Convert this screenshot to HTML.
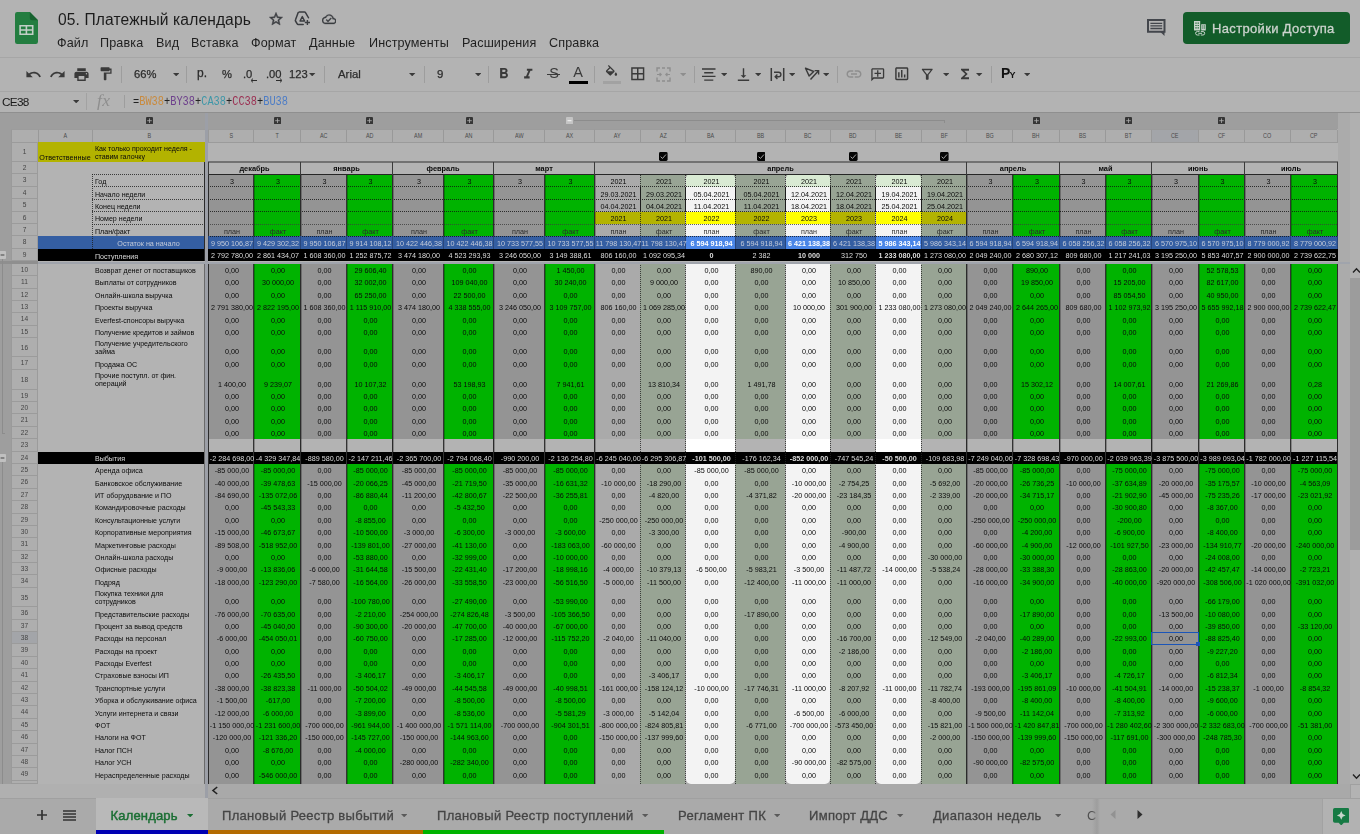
<!DOCTYPE html><html lang="ru"><head><meta charset="utf-8"><title>05. Платежный календарь</title><style>
html,body{margin:0;padding:0}
body{width:1360px;height:834px;overflow:hidden;background:#b3b3b3;font-family:"Liberation Sans",sans-serif;position:relative}
#grid div,.abs{position:absolute}
body{filter:blur(0.3px)}
.ch{font-size:6.8px;color:#4a4a4a;text-align:center;line-height:11.6px}
.ch span{display:inline-block;transform:scaleX(.8)}
.rh{font-size:6.6px;color:#444;text-align:center}
.c{font-size:7.2px;color:#0a0a0a;white-space:nowrap;display:flex;align-items:flex-end;justify-content:center;line-height:12.4px;overflow:visible}
.c span{display:block;position:relative;top:1.3px}
.c.h span{top:1.8px}
.c.m.h span{top:0.9px}
.c.l{justify-content:flex-start;font-size:7.08px}
.c.w{color:#dcdcdc}
.c.b{font-weight:bold}
.c.m{font-weight:bold;font-size:7.4px}
.t{white-space:nowrap}
.lb{font-size:7.08px;color:#0a0a0a;white-space:nowrap}
</style></head><body><div id="grid">
<div style="left:0.00px;top:112.50px;width:1338.00px;height:17.00px;background:#9e9e9e;"></div>
<div style="left:0.00px;top:129.50px;width:11.00px;height:654.10px;background:#9e9e9e;"></div>
<div style="left:11.00px;top:129.00px;width:1327.00px;height:13.40px;background:#aeaeae;"></div>
<div style="left:11.00px;top:142.40px;width:27.00px;height:641.20px;background:#aeaeae;"></div>
<div style="left:1338.00px;top:112.50px;width:11.60px;height:671.10px;background:#ababab;"></div>
<div style="left:1349.60px;top:112.50px;width:10.40px;height:685.50px;background:#b0b0b0;"></div>
<div style="left:1349.60px;top:278.40px;width:10.40px;height:271.60px;background:#9c9c9c;"></div>
<div class="ch" style="left:11.00px;top:129.00px;width:27.00px;height:13.40px;border-left:1px solid #999;border-top:1px solid #9c9c9c;box-sizing:border-box;"><span></span></div>
<div class="ch" style="left:38.00px;top:129.00px;width:54.00px;height:13.40px;border-left:1px solid #999;border-top:1px solid #9c9c9c;box-sizing:border-box;"><span>A</span></div>
<div class="ch" style="left:92.00px;top:129.00px;width:113.00px;height:13.40px;border-left:1px solid #999;border-top:1px solid #9c9c9c;box-sizing:border-box;"><span>B</span></div>
<div class="ch" style="left:208.00px;top:129.00px;width:45.00px;height:13.40px;border-left:1px solid #999;border-top:1px solid #9c9c9c;box-sizing:border-box;"><span>S</span></div>
<div class="ch" style="left:253.00px;top:129.00px;width:47.00px;height:13.40px;border-left:1px solid #999;border-top:1px solid #9c9c9c;box-sizing:border-box;"><span>T</span></div>
<div class="ch" style="left:300.00px;top:129.00px;width:46.00px;height:13.40px;border-left:1px solid #999;border-top:1px solid #9c9c9c;box-sizing:border-box;"><span>AC</span></div>
<div class="ch" style="left:346.00px;top:129.00px;width:46.00px;height:13.40px;border-left:1px solid #999;border-top:1px solid #9c9c9c;box-sizing:border-box;"><span>AD</span></div>
<div class="ch" style="left:392.00px;top:129.00px;width:51.00px;height:13.40px;border-left:1px solid #999;border-top:1px solid #9c9c9c;box-sizing:border-box;"><span>AM</span></div>
<div class="ch" style="left:443.00px;top:129.00px;width:50.00px;height:13.40px;border-left:1px solid #999;border-top:1px solid #9c9c9c;box-sizing:border-box;"><span>AN</span></div>
<div class="ch" style="left:493.00px;top:129.00px;width:51.00px;height:13.40px;border-left:1px solid #999;border-top:1px solid #9c9c9c;box-sizing:border-box;"><span>AW</span></div>
<div class="ch" style="left:544.00px;top:129.00px;width:50.00px;height:13.40px;border-left:1px solid #999;border-top:1px solid #9c9c9c;box-sizing:border-box;"><span>AX</span></div>
<div class="ch" style="left:594.00px;top:129.00px;width:46.00px;height:13.40px;border-left:1px solid #999;border-top:1px solid #9c9c9c;box-sizing:border-box;"><span>AY</span></div>
<div class="ch" style="left:640.00px;top:129.00px;width:45.00px;height:13.40px;border-left:1px solid #999;border-top:1px solid #9c9c9c;box-sizing:border-box;"><span>AZ</span></div>
<div class="ch" style="left:685.00px;top:129.00px;width:50.00px;height:13.40px;border-left:1px solid #999;border-top:1px solid #9c9c9c;box-sizing:border-box;"><span>BA</span></div>
<div class="ch" style="left:735.00px;top:129.00px;width:50.00px;height:13.40px;border-left:1px solid #999;border-top:1px solid #9c9c9c;box-sizing:border-box;"><span>BB</span></div>
<div class="ch" style="left:785.00px;top:129.00px;width:45.00px;height:13.40px;border-left:1px solid #999;border-top:1px solid #9c9c9c;box-sizing:border-box;"><span>BC</span></div>
<div class="ch" style="left:830.00px;top:129.00px;width:45.00px;height:13.40px;border-left:1px solid #999;border-top:1px solid #9c9c9c;box-sizing:border-box;"><span>BD</span></div>
<div class="ch" style="left:875.00px;top:129.00px;width:46.00px;height:13.40px;border-left:1px solid #999;border-top:1px solid #9c9c9c;box-sizing:border-box;"><span>BE</span></div>
<div class="ch" style="left:921.00px;top:129.00px;width:45.00px;height:13.40px;border-left:1px solid #999;border-top:1px solid #9c9c9c;box-sizing:border-box;"><span>BF</span></div>
<div class="ch" style="left:966.00px;top:129.00px;width:46.00px;height:13.40px;border-left:1px solid #999;border-top:1px solid #9c9c9c;box-sizing:border-box;"><span>BG</span></div>
<div class="ch" style="left:1012.00px;top:129.00px;width:47.00px;height:13.40px;border-left:1px solid #999;border-top:1px solid #9c9c9c;box-sizing:border-box;"><span>BH</span></div>
<div class="ch" style="left:1059.00px;top:129.00px;width:46.00px;height:13.40px;border-left:1px solid #999;border-top:1px solid #9c9c9c;box-sizing:border-box;"><span>BS</span></div>
<div class="ch" style="left:1105.00px;top:129.00px;width:46.00px;height:13.40px;border-left:1px solid #999;border-top:1px solid #9c9c9c;box-sizing:border-box;"><span>BT</span></div>
<div class="ch" style="left:1151.00px;top:129.00px;width:47.00px;height:13.40px;background:#a3a5a9;border-left:1px solid #999;border-top:1px solid #9c9c9c;box-sizing:border-box;"><span>CE</span></div>
<div class="ch" style="left:1198.00px;top:129.00px;width:46.00px;height:13.40px;border-left:1px solid #999;border-top:1px solid #9c9c9c;box-sizing:border-box;"><span>CF</span></div>
<div class="ch" style="left:1244.00px;top:129.00px;width:46.00px;height:13.40px;border-left:1px solid #999;border-top:1px solid #9c9c9c;box-sizing:border-box;"><span>CO</span></div>
<div class="ch" style="left:1290.00px;top:129.00px;width:47.00px;height:13.40px;border-left:1px solid #999;border-top:1px solid #9c9c9c;box-sizing:border-box;"><span>CP</span></div>
<div style="left:11.00px;top:141.60px;width:1327.00px;height:0.80px;background:#9b9b9b;"></div>
<div style="left:1337.00px;top:129.50px;width:1.00px;height:12.90px;background:#9b9b9b;"></div>
<div class="rh" style="left:11.00px;top:142.40px;width:27.00px;height:19.80px;line-height:19.90px;border-bottom:1px solid #9b9b9b;box-sizing:border-box;">1</div>
<div class="rh" style="left:11.00px;top:162.20px;width:27.00px;height:12.20px;line-height:12.30px;border-bottom:1px solid #9b9b9b;box-sizing:border-box;">2</div>
<div class="rh" style="left:11.00px;top:174.40px;width:27.00px;height:12.40px;line-height:12.50px;border-bottom:1px solid #9b9b9b;box-sizing:border-box;">3</div>
<div class="rh" style="left:11.00px;top:186.80px;width:27.00px;height:12.50px;line-height:12.60px;border-bottom:1px solid #9b9b9b;box-sizing:border-box;">4</div>
<div class="rh" style="left:11.00px;top:199.30px;width:27.00px;height:12.40px;line-height:12.50px;border-bottom:1px solid #9b9b9b;box-sizing:border-box;">5</div>
<div class="rh" style="left:11.00px;top:211.70px;width:27.00px;height:12.35px;line-height:12.45px;border-bottom:1px solid #9b9b9b;box-sizing:border-box;">6</div>
<div class="rh" style="left:11.00px;top:224.05px;width:27.00px;height:12.30px;line-height:12.40px;border-bottom:1px solid #9b9b9b;box-sizing:border-box;">7</div>
<div class="rh" style="left:11.00px;top:236.35px;width:27.00px;height:12.50px;line-height:12.60px;border-bottom:1px solid #9b9b9b;box-sizing:border-box;">8</div>
<div class="rh" style="left:11.00px;top:248.85px;width:27.00px;height:12.40px;line-height:12.50px;border-bottom:1px solid #9b9b9b;box-sizing:border-box;">9</div>
<div class="rh" style="left:11.00px;top:263.80px;width:27.00px;height:12.39px;line-height:12.49px;border-bottom:1px solid #9b9b9b;box-sizing:border-box;">10</div>
<div class="rh" style="left:11.00px;top:276.19px;width:27.00px;height:12.39px;line-height:12.49px;border-bottom:1px solid #9b9b9b;box-sizing:border-box;">11</div>
<div class="rh" style="left:11.00px;top:288.58px;width:27.00px;height:12.39px;line-height:12.49px;border-bottom:1px solid #9b9b9b;box-sizing:border-box;">12</div>
<div class="rh" style="left:11.00px;top:300.97px;width:27.00px;height:12.39px;line-height:12.49px;border-bottom:1px solid #9b9b9b;box-sizing:border-box;">13</div>
<div class="rh" style="left:11.00px;top:313.36px;width:27.00px;height:12.39px;line-height:12.49px;border-bottom:1px solid #9b9b9b;box-sizing:border-box;">14</div>
<div class="rh" style="left:11.00px;top:325.75px;width:27.00px;height:12.39px;line-height:12.49px;border-bottom:1px solid #9b9b9b;box-sizing:border-box;">15</div>
<div class="rh" style="left:11.00px;top:338.14px;width:27.00px;height:19.25px;line-height:19.35px;border-bottom:1px solid #9b9b9b;box-sizing:border-box;">16</div>
<div class="rh" style="left:11.00px;top:357.39px;width:27.00px;height:12.39px;line-height:12.49px;border-bottom:1px solid #9b9b9b;box-sizing:border-box;">17</div>
<div class="rh" style="left:11.00px;top:369.78px;width:27.00px;height:19.85px;line-height:19.95px;border-bottom:1px solid #9b9b9b;box-sizing:border-box;">18</div>
<div class="rh" style="left:11.00px;top:389.63px;width:27.00px;height:12.39px;line-height:12.49px;border-bottom:1px solid #9b9b9b;box-sizing:border-box;">19</div>
<div class="rh" style="left:11.00px;top:402.02px;width:27.00px;height:12.39px;line-height:12.49px;border-bottom:1px solid #9b9b9b;box-sizing:border-box;">20</div>
<div class="rh" style="left:11.00px;top:414.41px;width:27.00px;height:12.39px;line-height:12.49px;border-bottom:1px solid #9b9b9b;box-sizing:border-box;">21</div>
<div class="rh" style="left:11.00px;top:426.80px;width:27.00px;height:12.39px;line-height:12.49px;border-bottom:1px solid #9b9b9b;box-sizing:border-box;">22</div>
<div class="rh" style="left:11.00px;top:439.19px;width:27.00px;height:12.39px;line-height:12.49px;border-bottom:1px solid #9b9b9b;box-sizing:border-box;">23</div>
<div class="rh" style="left:11.00px;top:451.58px;width:27.00px;height:12.39px;line-height:12.49px;border-bottom:1px solid #9b9b9b;box-sizing:border-box;">24</div>
<div class="rh" style="left:11.00px;top:463.97px;width:27.00px;height:12.39px;line-height:12.49px;border-bottom:1px solid #9b9b9b;box-sizing:border-box;">25</div>
<div class="rh" style="left:11.00px;top:476.36px;width:27.00px;height:12.39px;line-height:12.49px;border-bottom:1px solid #9b9b9b;box-sizing:border-box;">26</div>
<div class="rh" style="left:11.00px;top:488.75px;width:27.00px;height:12.39px;line-height:12.49px;border-bottom:1px solid #9b9b9b;box-sizing:border-box;">27</div>
<div class="rh" style="left:11.00px;top:501.14px;width:27.00px;height:12.39px;line-height:12.49px;border-bottom:1px solid #9b9b9b;box-sizing:border-box;">28</div>
<div class="rh" style="left:11.00px;top:513.53px;width:27.00px;height:12.39px;line-height:12.49px;border-bottom:1px solid #9b9b9b;box-sizing:border-box;">29</div>
<div class="rh" style="left:11.00px;top:525.92px;width:27.00px;height:12.39px;line-height:12.49px;border-bottom:1px solid #9b9b9b;box-sizing:border-box;">30</div>
<div class="rh" style="left:11.00px;top:538.31px;width:27.00px;height:12.39px;line-height:12.49px;border-bottom:1px solid #9b9b9b;box-sizing:border-box;">31</div>
<div class="rh" style="left:11.00px;top:550.70px;width:27.00px;height:12.39px;line-height:12.49px;border-bottom:1px solid #9b9b9b;box-sizing:border-box;">32</div>
<div class="rh" style="left:11.00px;top:563.09px;width:27.00px;height:12.39px;line-height:12.49px;border-bottom:1px solid #9b9b9b;box-sizing:border-box;">33</div>
<div class="rh" style="left:11.00px;top:575.48px;width:27.00px;height:12.39px;line-height:12.49px;border-bottom:1px solid #9b9b9b;box-sizing:border-box;">34</div>
<div class="rh" style="left:11.00px;top:587.87px;width:27.00px;height:19.40px;line-height:19.50px;border-bottom:1px solid #9b9b9b;box-sizing:border-box;">35</div>
<div class="rh" style="left:11.00px;top:607.27px;width:27.00px;height:12.39px;line-height:12.49px;border-bottom:1px solid #9b9b9b;box-sizing:border-box;">36</div>
<div class="rh" style="left:11.00px;top:619.66px;width:27.00px;height:12.39px;line-height:12.49px;border-bottom:1px solid #9b9b9b;box-sizing:border-box;">37</div>
<div class="rh" style="left:11.00px;top:632.05px;width:27.00px;height:12.39px;background:#a3a5a9;line-height:12.49px;border-bottom:1px solid #9b9b9b;box-sizing:border-box;">38</div>
<div class="rh" style="left:11.00px;top:644.44px;width:27.00px;height:12.39px;line-height:12.49px;border-bottom:1px solid #9b9b9b;box-sizing:border-box;">39</div>
<div class="rh" style="left:11.00px;top:656.83px;width:27.00px;height:12.39px;line-height:12.49px;border-bottom:1px solid #9b9b9b;box-sizing:border-box;">40</div>
<div class="rh" style="left:11.00px;top:669.22px;width:27.00px;height:12.39px;line-height:12.49px;border-bottom:1px solid #9b9b9b;box-sizing:border-box;">41</div>
<div class="rh" style="left:11.00px;top:681.61px;width:27.00px;height:12.39px;line-height:12.49px;border-bottom:1px solid #9b9b9b;box-sizing:border-box;">42</div>
<div class="rh" style="left:11.00px;top:694.00px;width:27.00px;height:12.39px;line-height:12.49px;border-bottom:1px solid #9b9b9b;box-sizing:border-box;">43</div>
<div class="rh" style="left:11.00px;top:706.39px;width:27.00px;height:12.39px;line-height:12.49px;border-bottom:1px solid #9b9b9b;box-sizing:border-box;">44</div>
<div class="rh" style="left:11.00px;top:718.78px;width:27.00px;height:12.39px;line-height:12.49px;border-bottom:1px solid #9b9b9b;box-sizing:border-box;">45</div>
<div class="rh" style="left:11.00px;top:731.17px;width:27.00px;height:12.39px;line-height:12.49px;border-bottom:1px solid #9b9b9b;box-sizing:border-box;">46</div>
<div class="rh" style="left:11.00px;top:743.56px;width:27.00px;height:12.39px;line-height:12.49px;border-bottom:1px solid #9b9b9b;box-sizing:border-box;">47</div>
<div class="rh" style="left:11.00px;top:755.95px;width:27.00px;height:12.39px;line-height:12.49px;border-bottom:1px solid #9b9b9b;box-sizing:border-box;">48</div>
<div class="rh" style="left:11.00px;top:768.34px;width:27.00px;height:12.39px;line-height:12.49px;border-bottom:1px solid #9b9b9b;box-sizing:border-box;">49</div>
<div class="rh" style="left:11.00px;top:780.73px;width:27.00px;height:2.87px;line-height:2.97px;border-bottom:1px solid #9b9b9b;box-sizing:border-box;"></div>
<div style="left:37.20px;top:142.40px;width:0.80px;height:641.20px;background:#9b9b9b;"></div>
<div style="left:11.00px;top:142.40px;width:1.00px;height:641.20px;background:#9a9a9a;"></div>
<div style="left:38.00px;top:142.40px;width:167.00px;height:19.80px;background:#b3b300;"></div>
<div style="left:38.00px;top:236.35px;width:167.00px;height:12.50px;background:#345ea2;"></div>
<div style="left:38.00px;top:248.85px;width:167.00px;height:12.40px;background:#000;"></div>
<div style="left:38.00px;top:451.58px;width:167.00px;height:12.39px;background:#000;"></div>
<div style="left:208.00px;top:174.40px;width:45.00px;height:61.95px;background:#949494;"></div>
<div style="left:208.00px;top:263.80px;width:45.00px;height:175.39px;background:#949494;"></div>
<div style="left:208.00px;top:463.97px;width:45.00px;height:319.63px;background:#949494;"></div>
<div style="left:208.00px;top:236.35px;width:45.00px;height:12.50px;background:#345ea2;"></div>
<div style="left:253.00px;top:174.40px;width:47.00px;height:61.95px;background:#00b300;"></div>
<div style="left:253.00px;top:263.80px;width:47.00px;height:175.39px;background:#00b300;"></div>
<div style="left:253.00px;top:463.97px;width:47.00px;height:319.63px;background:#00b300;"></div>
<div style="left:253.00px;top:236.35px;width:47.00px;height:12.50px;background:#345ea2;"></div>
<div style="left:300.00px;top:174.40px;width:46.00px;height:61.95px;background:#949494;"></div>
<div style="left:300.00px;top:263.80px;width:46.00px;height:175.39px;background:#949494;"></div>
<div style="left:300.00px;top:463.97px;width:46.00px;height:319.63px;background:#949494;"></div>
<div style="left:300.00px;top:236.35px;width:46.00px;height:12.50px;background:#345ea2;"></div>
<div style="left:346.00px;top:174.40px;width:46.00px;height:61.95px;background:#00b300;"></div>
<div style="left:346.00px;top:263.80px;width:46.00px;height:175.39px;background:#00b300;"></div>
<div style="left:346.00px;top:463.97px;width:46.00px;height:319.63px;background:#00b300;"></div>
<div style="left:346.00px;top:236.35px;width:46.00px;height:12.50px;background:#345ea2;"></div>
<div style="left:392.00px;top:174.40px;width:51.00px;height:61.95px;background:#949494;"></div>
<div style="left:392.00px;top:263.80px;width:51.00px;height:175.39px;background:#949494;"></div>
<div style="left:392.00px;top:463.97px;width:51.00px;height:319.63px;background:#949494;"></div>
<div style="left:392.00px;top:236.35px;width:51.00px;height:12.50px;background:#345ea2;"></div>
<div style="left:443.00px;top:174.40px;width:50.00px;height:61.95px;background:#00b300;"></div>
<div style="left:443.00px;top:263.80px;width:50.00px;height:175.39px;background:#00b300;"></div>
<div style="left:443.00px;top:463.97px;width:50.00px;height:319.63px;background:#00b300;"></div>
<div style="left:443.00px;top:236.35px;width:50.00px;height:12.50px;background:#345ea2;"></div>
<div style="left:493.00px;top:174.40px;width:51.00px;height:61.95px;background:#949494;"></div>
<div style="left:493.00px;top:263.80px;width:51.00px;height:175.39px;background:#949494;"></div>
<div style="left:493.00px;top:463.97px;width:51.00px;height:319.63px;background:#949494;"></div>
<div style="left:493.00px;top:236.35px;width:51.00px;height:12.50px;background:#345ea2;"></div>
<div style="left:544.00px;top:174.40px;width:50.00px;height:61.95px;background:#00b300;"></div>
<div style="left:544.00px;top:263.80px;width:50.00px;height:175.39px;background:#00b300;"></div>
<div style="left:544.00px;top:463.97px;width:50.00px;height:319.63px;background:#00b300;"></div>
<div style="left:544.00px;top:236.35px;width:50.00px;height:12.50px;background:#345ea2;"></div>
<div style="left:594.00px;top:174.40px;width:46.00px;height:61.95px;background:#aaaaaa;"></div>
<div style="left:594.00px;top:263.80px;width:46.00px;height:175.39px;background:#aaaaaa;"></div>
<div style="left:594.00px;top:463.97px;width:46.00px;height:319.63px;background:#aaaaaa;"></div>
<div style="left:594.00px;top:211.70px;width:46.00px;height:12.35px;background:#b3b300;"></div>
<div style="left:594.00px;top:236.35px;width:46.00px;height:12.50px;background:#345ea2;"></div>
<div style="left:640.00px;top:174.40px;width:45.00px;height:61.95px;background:#98a494;"></div>
<div style="left:640.00px;top:263.80px;width:45.00px;height:175.39px;background:#98a494;"></div>
<div style="left:640.00px;top:463.97px;width:45.00px;height:319.63px;background:#98a494;"></div>
<div style="left:640.00px;top:211.70px;width:45.00px;height:12.35px;background:#b3b300;"></div>
<div style="left:640.00px;top:236.35px;width:45.00px;height:12.50px;background:#345ea2;"></div>
<div style="left:686.00px;top:174.40px;width:49.00px;height:8.00px;background:#98a494;"></div>
<div style="left:686.00px;top:775.60px;width:49.00px;height:8.00px;background:#aaaaaa;"></div>
<div style="left:686.00px;top:174.40px;width:49.00px;height:61.95px;background:#f3f3f3;border-radius:5px 5px 0 0;"></div>
<div style="left:686.00px;top:263.80px;width:49.00px;height:175.39px;background:#f3f3f3;"></div>
<div style="left:686.00px;top:463.97px;width:49.00px;height:319.63px;background:#f3f3f3;border-radius:0 0 5px 5px;"></div>
<div style="left:686.00px;top:174.40px;width:49.00px;height:12.40px;background:#d9ead3;border-radius:5px 5px 0 0;"></div>
<div style="left:686.00px;top:439.19px;width:49.00px;height:12.39px;background:#fff;"></div>
<div style="left:686.00px;top:211.70px;width:49.00px;height:12.35px;background:#ffff00;"></div>
<div style="left:686.00px;top:236.35px;width:49.00px;height:12.50px;background:#4a86e8;"></div>
<div style="left:735.00px;top:174.40px;width:50.00px;height:61.95px;background:#98a494;"></div>
<div style="left:735.00px;top:263.80px;width:50.00px;height:175.39px;background:#98a494;"></div>
<div style="left:735.00px;top:463.97px;width:50.00px;height:319.63px;background:#98a494;"></div>
<div style="left:735.00px;top:211.70px;width:50.00px;height:12.35px;background:#b3b300;"></div>
<div style="left:735.00px;top:236.35px;width:50.00px;height:12.50px;background:#345ea2;"></div>
<div style="left:786.00px;top:174.40px;width:44.00px;height:8.00px;background:#98a494;"></div>
<div style="left:786.00px;top:775.60px;width:44.00px;height:8.00px;background:#aaaaaa;"></div>
<div style="left:786.00px;top:174.40px;width:44.00px;height:61.95px;background:#f3f3f3;border-radius:5px 5px 0 0;"></div>
<div style="left:786.00px;top:263.80px;width:44.00px;height:175.39px;background:#f3f3f3;"></div>
<div style="left:786.00px;top:463.97px;width:44.00px;height:319.63px;background:#f3f3f3;border-radius:0 0 5px 5px;"></div>
<div style="left:786.00px;top:174.40px;width:44.00px;height:12.40px;background:#d9ead3;border-radius:5px 5px 0 0;"></div>
<div style="left:786.00px;top:439.19px;width:44.00px;height:12.39px;background:#fff;"></div>
<div style="left:786.00px;top:211.70px;width:44.00px;height:12.35px;background:#ffff00;"></div>
<div style="left:786.00px;top:236.35px;width:44.00px;height:12.50px;background:#4a86e8;"></div>
<div style="left:830.00px;top:174.40px;width:45.00px;height:61.95px;background:#98a494;"></div>
<div style="left:830.00px;top:263.80px;width:45.00px;height:175.39px;background:#98a494;"></div>
<div style="left:830.00px;top:463.97px;width:45.00px;height:319.63px;background:#98a494;"></div>
<div style="left:830.00px;top:211.70px;width:45.00px;height:12.35px;background:#b3b300;"></div>
<div style="left:830.00px;top:236.35px;width:45.00px;height:12.50px;background:#345ea2;"></div>
<div style="left:876.00px;top:174.40px;width:45.00px;height:8.00px;background:#98a494;"></div>
<div style="left:876.00px;top:775.60px;width:45.00px;height:8.00px;background:#aaaaaa;"></div>
<div style="left:876.00px;top:174.40px;width:45.00px;height:61.95px;background:#f3f3f3;border-radius:5px 5px 0 0;"></div>
<div style="left:876.00px;top:263.80px;width:45.00px;height:175.39px;background:#f3f3f3;"></div>
<div style="left:876.00px;top:463.97px;width:45.00px;height:319.63px;background:#f3f3f3;border-radius:0 0 5px 5px;"></div>
<div style="left:876.00px;top:174.40px;width:45.00px;height:12.40px;background:#d9ead3;border-radius:5px 5px 0 0;"></div>
<div style="left:876.00px;top:439.19px;width:45.00px;height:12.39px;background:#fff;"></div>
<div style="left:876.00px;top:211.70px;width:45.00px;height:12.35px;background:#ffff00;"></div>
<div style="left:876.00px;top:236.35px;width:45.00px;height:12.50px;background:#4a86e8;"></div>
<div style="left:921.00px;top:174.40px;width:45.00px;height:61.95px;background:#98a494;"></div>
<div style="left:921.00px;top:263.80px;width:45.00px;height:175.39px;background:#98a494;"></div>
<div style="left:921.00px;top:463.97px;width:45.00px;height:319.63px;background:#98a494;"></div>
<div style="left:921.00px;top:211.70px;width:45.00px;height:12.35px;background:#b3b300;"></div>
<div style="left:921.00px;top:236.35px;width:45.00px;height:12.50px;background:#345ea2;"></div>
<div style="left:966.00px;top:174.40px;width:46.00px;height:61.95px;background:#949494;"></div>
<div style="left:966.00px;top:263.80px;width:46.00px;height:175.39px;background:#949494;"></div>
<div style="left:966.00px;top:463.97px;width:46.00px;height:319.63px;background:#949494;"></div>
<div style="left:966.00px;top:236.35px;width:46.00px;height:12.50px;background:#345ea2;"></div>
<div style="left:1012.00px;top:174.40px;width:47.00px;height:61.95px;background:#00b300;"></div>
<div style="left:1012.00px;top:263.80px;width:47.00px;height:175.39px;background:#00b300;"></div>
<div style="left:1012.00px;top:463.97px;width:47.00px;height:319.63px;background:#00b300;"></div>
<div style="left:1012.00px;top:236.35px;width:47.00px;height:12.50px;background:#345ea2;"></div>
<div style="left:1059.00px;top:174.40px;width:46.00px;height:61.95px;background:#949494;"></div>
<div style="left:1059.00px;top:263.80px;width:46.00px;height:175.39px;background:#949494;"></div>
<div style="left:1059.00px;top:463.97px;width:46.00px;height:319.63px;background:#949494;"></div>
<div style="left:1059.00px;top:236.35px;width:46.00px;height:12.50px;background:#345ea2;"></div>
<div style="left:1105.00px;top:174.40px;width:46.00px;height:61.95px;background:#00b300;"></div>
<div style="left:1105.00px;top:263.80px;width:46.00px;height:175.39px;background:#00b300;"></div>
<div style="left:1105.00px;top:463.97px;width:46.00px;height:319.63px;background:#00b300;"></div>
<div style="left:1105.00px;top:236.35px;width:46.00px;height:12.50px;background:#345ea2;"></div>
<div style="left:1151.00px;top:174.40px;width:47.00px;height:61.95px;background:#949494;"></div>
<div style="left:1151.00px;top:263.80px;width:47.00px;height:175.39px;background:#949494;"></div>
<div style="left:1151.00px;top:463.97px;width:47.00px;height:319.63px;background:#949494;"></div>
<div style="left:1151.00px;top:236.35px;width:47.00px;height:12.50px;background:#345ea2;"></div>
<div style="left:1198.00px;top:174.40px;width:46.00px;height:61.95px;background:#00b300;"></div>
<div style="left:1198.00px;top:263.80px;width:46.00px;height:175.39px;background:#00b300;"></div>
<div style="left:1198.00px;top:463.97px;width:46.00px;height:319.63px;background:#00b300;"></div>
<div style="left:1198.00px;top:236.35px;width:46.00px;height:12.50px;background:#345ea2;"></div>
<div style="left:1244.00px;top:174.40px;width:46.00px;height:61.95px;background:#949494;"></div>
<div style="left:1244.00px;top:263.80px;width:46.00px;height:175.39px;background:#949494;"></div>
<div style="left:1244.00px;top:463.97px;width:46.00px;height:319.63px;background:#949494;"></div>
<div style="left:1244.00px;top:236.35px;width:46.00px;height:12.50px;background:#345ea2;"></div>
<div style="left:1290.00px;top:174.40px;width:47.00px;height:61.95px;background:#00b300;"></div>
<div style="left:1290.00px;top:263.80px;width:47.00px;height:175.39px;background:#00b300;"></div>
<div style="left:1290.00px;top:463.97px;width:47.00px;height:319.63px;background:#00b300;"></div>
<div style="left:1290.00px;top:236.35px;width:47.00px;height:12.50px;background:#345ea2;"></div>
<div style="left:208.00px;top:248.85px;width:1130.00px;height:12.40px;background:#000;"></div>
<div style="left:208.00px;top:451.58px;width:1130.00px;height:12.39px;background:#000;"></div>
<div style="left:208.00px;top:161px;width:1130.00px;height:2px;background:#727272"></div>
<div style="left:208.00px;top:174px;width:1130.00px;height:1px;background:#262626"></div>
<div style="left:208px;top:162.00px;width:1px;height:13.00px;background:#3a3a3a"></div>
<div style="left:300px;top:162.00px;width:1px;height:13.00px;background:#3a3a3a"></div>
<div style="left:392px;top:162.00px;width:1px;height:13.00px;background:#3a3a3a"></div>
<div style="left:493px;top:162.00px;width:1px;height:13.00px;background:#3a3a3a"></div>
<div style="left:594px;top:162.00px;width:1px;height:13.00px;background:#3a3a3a"></div>
<div style="left:966px;top:162.00px;width:1px;height:13.00px;background:#3a3a3a"></div>
<div style="left:1059px;top:162.00px;width:1px;height:13.00px;background:#3a3a3a"></div>
<div style="left:1151px;top:162.00px;width:1px;height:13.00px;background:#3a3a3a"></div>
<div style="left:1244px;top:162.00px;width:1px;height:13.00px;background:#3a3a3a"></div>
<div style="left:1337px;top:162.00px;width:1px;height:13.00px;background:#3a3a3a"></div>
<div style="left:92px;top:174px;width:112px;height:1px;background:repeating-linear-gradient(90deg,#1c1c1c 0 1px,transparent 1px 2px);opacity:.8"></div>
<div style="left:92px;top:186px;width:112px;height:1px;background:repeating-linear-gradient(90deg,#1c1c1c 0 1px,transparent 1px 2px);opacity:.8"></div>
<div style="left:92px;top:199px;width:112px;height:1px;background:repeating-linear-gradient(90deg,#1c1c1c 0 1px,transparent 1px 2px);opacity:.8"></div>
<div style="left:92px;top:211px;width:112px;height:1px;background:repeating-linear-gradient(90deg,#1c1c1c 0 1px,transparent 1px 2px);opacity:.8"></div>
<div style="left:92px;top:224px;width:112px;height:1px;background:repeating-linear-gradient(90deg,#1c1c1c 0 1px,transparent 1px 2px);opacity:.8"></div>
<div style="left:92px;top:174px;width:1px;height:75px;background:repeating-linear-gradient(180deg,#1c1c1c 0 1px,transparent 1px 2px);opacity:.8"></div>
<div style="left:204px;top:162.00px;width:1px;height:99.25px;background:#2a2a2a"></div>
<div style="left:204px;top:263.80px;width:1px;height:519.80px;background:#6a6a6a"></div>
<div style="left:208px;top:186px;width:1130px;height:1px;background:repeating-linear-gradient(90deg,#111 0 1px,transparent 1px 2px);opacity:.8"></div>
<div style="left:208px;top:199px;width:1130px;height:1px;background:repeating-linear-gradient(90deg,#111 0 1px,transparent 1px 2px);opacity:.8"></div>
<div style="left:208px;top:211px;width:1130px;height:1px;background:repeating-linear-gradient(90deg,#111 0 1px,transparent 1px 2px);opacity:.8"></div>
<div style="left:208px;top:224px;width:1130px;height:1px;background:repeating-linear-gradient(90deg,#3c3c3c 0 1px,transparent 1px 2px);opacity:.8"></div>
<div style="left:208px;top:236px;width:1130px;height:1px;background:repeating-linear-gradient(90deg,#111 0 1px,transparent 1px 2px);opacity:.8"></div>
<div style="left:208px;top:175.00px;width:1px;height:61.35px;background:#2b2b2b"></div>
<div style="left:208px;top:263.80px;width:1px;height:519.80px;background:#2b2b2b"></div>
<div style="left:208px;top:236.35px;width:1px;height:12.50px;background:#28467c"></div>
<div style="left:253px;top:175.00px;width:1px;height:61.35px;background:#333"></div>
<div style="left:254px;top:175.00px;width:1px;height:61.35px;background:rgba(0,0,0,0.26)"></div>
<div style="left:253px;top:263.80px;width:1px;height:519.80px;background:#333"></div>
<div style="left:254px;top:263.80px;width:1px;height:519.80px;background:rgba(0,0,0,0.26)"></div>
<div style="left:253px;top:236.35px;width:1px;height:12.50px;background:#28467c"></div>
<div style="left:300px;top:175.00px;width:1px;height:61.35px;background:#2b2b2b"></div>
<div style="left:301px;top:175.00px;width:1px;height:61.35px;background:rgba(0,0,0,0.26)"></div>
<div style="left:300px;top:263.80px;width:1px;height:519.80px;background:#2b2b2b"></div>
<div style="left:301px;top:263.80px;width:1px;height:519.80px;background:rgba(0,0,0,0.26)"></div>
<div style="left:300px;top:236.35px;width:1px;height:12.50px;background:#28467c"></div>
<div style="left:346px;top:175.00px;width:1px;height:61.35px;background:#333"></div>
<div style="left:347px;top:175.00px;width:1px;height:61.35px;background:rgba(0,0,0,0.26)"></div>
<div style="left:346px;top:263.80px;width:1px;height:519.80px;background:#333"></div>
<div style="left:347px;top:263.80px;width:1px;height:519.80px;background:rgba(0,0,0,0.26)"></div>
<div style="left:346px;top:236.35px;width:1px;height:12.50px;background:#28467c"></div>
<div style="left:392px;top:175.00px;width:1px;height:61.35px;background:#2b2b2b"></div>
<div style="left:393px;top:175.00px;width:1px;height:61.35px;background:rgba(0,0,0,0.26)"></div>
<div style="left:392px;top:263.80px;width:1px;height:519.80px;background:#2b2b2b"></div>
<div style="left:393px;top:263.80px;width:1px;height:519.80px;background:rgba(0,0,0,0.26)"></div>
<div style="left:392px;top:236.35px;width:1px;height:12.50px;background:#28467c"></div>
<div style="left:443px;top:175.00px;width:1px;height:61.35px;background:#333"></div>
<div style="left:444px;top:175.00px;width:1px;height:61.35px;background:rgba(0,0,0,0.26)"></div>
<div style="left:443px;top:263.80px;width:1px;height:519.80px;background:#333"></div>
<div style="left:444px;top:263.80px;width:1px;height:519.80px;background:rgba(0,0,0,0.26)"></div>
<div style="left:443px;top:236.35px;width:1px;height:12.50px;background:#28467c"></div>
<div style="left:493px;top:175.00px;width:1px;height:61.35px;background:#2b2b2b"></div>
<div style="left:494px;top:175.00px;width:1px;height:61.35px;background:rgba(0,0,0,0.26)"></div>
<div style="left:493px;top:263.80px;width:1px;height:519.80px;background:#2b2b2b"></div>
<div style="left:494px;top:263.80px;width:1px;height:519.80px;background:rgba(0,0,0,0.26)"></div>
<div style="left:493px;top:236.35px;width:1px;height:12.50px;background:#28467c"></div>
<div style="left:544px;top:175.00px;width:1px;height:61.35px;background:#333"></div>
<div style="left:545px;top:175.00px;width:1px;height:61.35px;background:rgba(0,0,0,0.26)"></div>
<div style="left:544px;top:263.80px;width:1px;height:519.80px;background:#333"></div>
<div style="left:545px;top:263.80px;width:1px;height:519.80px;background:rgba(0,0,0,0.26)"></div>
<div style="left:544px;top:236.35px;width:1px;height:12.50px;background:#28467c"></div>
<div style="left:594px;top:175.00px;width:1px;height:61.35px;background:#2b2b2b"></div>
<div style="left:595px;top:175.00px;width:1px;height:61.35px;background:rgba(0,0,0,0.26)"></div>
<div style="left:594px;top:263.80px;width:1px;height:519.80px;background:#2b2b2b"></div>
<div style="left:595px;top:263.80px;width:1px;height:519.80px;background:rgba(0,0,0,0.26)"></div>
<div style="left:594px;top:236.35px;width:1px;height:12.50px;background:#28467c"></div>
<div style="left:966px;top:175.00px;width:1px;height:61.35px;background:#2b2b2b"></div>
<div style="left:967px;top:175.00px;width:1px;height:61.35px;background:rgba(0,0,0,0.26)"></div>
<div style="left:966px;top:263.80px;width:1px;height:519.80px;background:#2b2b2b"></div>
<div style="left:967px;top:263.80px;width:1px;height:519.80px;background:rgba(0,0,0,0.26)"></div>
<div style="left:966px;top:236.35px;width:1px;height:12.50px;background:#28467c"></div>
<div style="left:1012px;top:175.00px;width:1px;height:61.35px;background:#333"></div>
<div style="left:1013px;top:175.00px;width:1px;height:61.35px;background:rgba(0,0,0,0.26)"></div>
<div style="left:1012px;top:263.80px;width:1px;height:519.80px;background:#333"></div>
<div style="left:1013px;top:263.80px;width:1px;height:519.80px;background:rgba(0,0,0,0.26)"></div>
<div style="left:1012px;top:236.35px;width:1px;height:12.50px;background:#28467c"></div>
<div style="left:1059px;top:175.00px;width:1px;height:61.35px;background:#2b2b2b"></div>
<div style="left:1060px;top:175.00px;width:1px;height:61.35px;background:rgba(0,0,0,0.26)"></div>
<div style="left:1059px;top:263.80px;width:1px;height:519.80px;background:#2b2b2b"></div>
<div style="left:1060px;top:263.80px;width:1px;height:519.80px;background:rgba(0,0,0,0.26)"></div>
<div style="left:1059px;top:236.35px;width:1px;height:12.50px;background:#28467c"></div>
<div style="left:1105px;top:175.00px;width:1px;height:61.35px;background:#333"></div>
<div style="left:1106px;top:175.00px;width:1px;height:61.35px;background:rgba(0,0,0,0.26)"></div>
<div style="left:1105px;top:263.80px;width:1px;height:519.80px;background:#333"></div>
<div style="left:1106px;top:263.80px;width:1px;height:519.80px;background:rgba(0,0,0,0.26)"></div>
<div style="left:1105px;top:236.35px;width:1px;height:12.50px;background:#28467c"></div>
<div style="left:1151px;top:175.00px;width:1px;height:61.35px;background:#2b2b2b"></div>
<div style="left:1152px;top:175.00px;width:1px;height:61.35px;background:rgba(0,0,0,0.26)"></div>
<div style="left:1151px;top:263.80px;width:1px;height:519.80px;background:#2b2b2b"></div>
<div style="left:1152px;top:263.80px;width:1px;height:519.80px;background:rgba(0,0,0,0.26)"></div>
<div style="left:1151px;top:236.35px;width:1px;height:12.50px;background:#28467c"></div>
<div style="left:1198px;top:175.00px;width:1px;height:61.35px;background:#333"></div>
<div style="left:1199px;top:175.00px;width:1px;height:61.35px;background:rgba(0,0,0,0.26)"></div>
<div style="left:1198px;top:263.80px;width:1px;height:519.80px;background:#333"></div>
<div style="left:1199px;top:263.80px;width:1px;height:519.80px;background:rgba(0,0,0,0.26)"></div>
<div style="left:1198px;top:236.35px;width:1px;height:12.50px;background:#28467c"></div>
<div style="left:1244px;top:175.00px;width:1px;height:61.35px;background:#2b2b2b"></div>
<div style="left:1245px;top:175.00px;width:1px;height:61.35px;background:rgba(0,0,0,0.26)"></div>
<div style="left:1244px;top:263.80px;width:1px;height:519.80px;background:#2b2b2b"></div>
<div style="left:1245px;top:263.80px;width:1px;height:519.80px;background:rgba(0,0,0,0.26)"></div>
<div style="left:1244px;top:236.35px;width:1px;height:12.50px;background:#28467c"></div>
<div style="left:1290px;top:175.00px;width:1px;height:61.35px;background:#333"></div>
<div style="left:1291px;top:175.00px;width:1px;height:61.35px;background:rgba(0,0,0,0.26)"></div>
<div style="left:1290px;top:263.80px;width:1px;height:519.80px;background:#333"></div>
<div style="left:1291px;top:263.80px;width:1px;height:519.80px;background:rgba(0,0,0,0.26)"></div>
<div style="left:1290px;top:236.35px;width:1px;height:12.50px;background:#28467c"></div>
<div style="left:1337px;top:175.00px;width:1px;height:61.35px;background:#2b2b2b"></div>
<div style="left:1337px;top:263.80px;width:1px;height:519.80px;background:#2b2b2b"></div>
<div style="left:1337px;top:236.35px;width:1px;height:12.50px;background:#28467c"></div>
<div style="left:640px;top:175px;width:1px;height:12px;background:repeating-linear-gradient(180deg,#1c1c1c 0 1px,transparent 1px 2px);opacity:.8"></div>
<div style="left:640px;top:186.80px;width:1px;height:24.90px;background:#1c1c1c"></div>
<div style="left:640px;top:211px;width:1px;height:26px;background:repeating-linear-gradient(180deg,#1c1c1c 0 1px,transparent 1px 2px);opacity:.8"></div>
<div style="left:640px;top:263px;width:1px;height:521px;background:repeating-linear-gradient(180deg,#222 0 1px,transparent 1px 2px);opacity:.8"></div>
<div style="left:640px;top:236.35px;width:1px;height:12.50px;background:#28467c"></div>
<div style="left:685px;top:175px;width:1px;height:12px;background:repeating-linear-gradient(180deg,#1c1c1c 0 1px,transparent 1px 2px);opacity:.8"></div>
<div style="left:685px;top:186.80px;width:1px;height:24.90px;background:#1c1c1c"></div>
<div style="left:685px;top:211px;width:1px;height:26px;background:repeating-linear-gradient(180deg,#1c1c1c 0 1px,transparent 1px 2px);opacity:.8"></div>
<div style="left:685px;top:263px;width:1px;height:521px;background:repeating-linear-gradient(180deg,#222 0 1px,transparent 1px 2px);opacity:.8"></div>
<div style="left:685px;top:236.35px;width:1px;height:12.50px;background:#28467c"></div>
<div style="left:735px;top:175px;width:1px;height:12px;background:repeating-linear-gradient(180deg,#1c1c1c 0 1px,transparent 1px 2px);opacity:.8"></div>
<div style="left:735px;top:186.80px;width:1px;height:24.90px;background:#1c1c1c"></div>
<div style="left:735px;top:211px;width:1px;height:26px;background:repeating-linear-gradient(180deg,#1c1c1c 0 1px,transparent 1px 2px);opacity:.8"></div>
<div style="left:735px;top:263px;width:1px;height:521px;background:repeating-linear-gradient(180deg,#222 0 1px,transparent 1px 2px);opacity:.8"></div>
<div style="left:735px;top:236.35px;width:1px;height:12.50px;background:#28467c"></div>
<div style="left:785px;top:175px;width:1px;height:12px;background:repeating-linear-gradient(180deg,#1c1c1c 0 1px,transparent 1px 2px);opacity:.8"></div>
<div style="left:785px;top:186.80px;width:1px;height:24.90px;background:#1c1c1c"></div>
<div style="left:785px;top:211px;width:1px;height:26px;background:repeating-linear-gradient(180deg,#1c1c1c 0 1px,transparent 1px 2px);opacity:.8"></div>
<div style="left:785px;top:263px;width:1px;height:521px;background:repeating-linear-gradient(180deg,#222 0 1px,transparent 1px 2px);opacity:.8"></div>
<div style="left:785px;top:236.35px;width:1px;height:12.50px;background:#28467c"></div>
<div style="left:830px;top:175px;width:1px;height:12px;background:repeating-linear-gradient(180deg,#1c1c1c 0 1px,transparent 1px 2px);opacity:.8"></div>
<div style="left:830px;top:186.80px;width:1px;height:24.90px;background:#1c1c1c"></div>
<div style="left:830px;top:211px;width:1px;height:26px;background:repeating-linear-gradient(180deg,#1c1c1c 0 1px,transparent 1px 2px);opacity:.8"></div>
<div style="left:830px;top:263px;width:1px;height:521px;background:repeating-linear-gradient(180deg,#222 0 1px,transparent 1px 2px);opacity:.8"></div>
<div style="left:830px;top:236.35px;width:1px;height:12.50px;background:#28467c"></div>
<div style="left:875px;top:175px;width:1px;height:12px;background:repeating-linear-gradient(180deg,#1c1c1c 0 1px,transparent 1px 2px);opacity:.8"></div>
<div style="left:875px;top:186.80px;width:1px;height:24.90px;background:#1c1c1c"></div>
<div style="left:875px;top:211px;width:1px;height:26px;background:repeating-linear-gradient(180deg,#1c1c1c 0 1px,transparent 1px 2px);opacity:.8"></div>
<div style="left:875px;top:263px;width:1px;height:521px;background:repeating-linear-gradient(180deg,#222 0 1px,transparent 1px 2px);opacity:.8"></div>
<div style="left:875px;top:236.35px;width:1px;height:12.50px;background:#28467c"></div>
<div style="left:921px;top:175px;width:1px;height:12px;background:repeating-linear-gradient(180deg,#1c1c1c 0 1px,transparent 1px 2px);opacity:.8"></div>
<div style="left:921px;top:186.80px;width:1px;height:24.90px;background:#1c1c1c"></div>
<div style="left:921px;top:211px;width:1px;height:26px;background:repeating-linear-gradient(180deg,#1c1c1c 0 1px,transparent 1px 2px);opacity:.8"></div>
<div style="left:921px;top:263px;width:1px;height:521px;background:repeating-linear-gradient(180deg,#222 0 1px,transparent 1px 2px);opacity:.8"></div>
<div style="left:921px;top:236.35px;width:1px;height:12.50px;background:#28467c"></div>
<div style="left:205.00px;top:112.50px;width:3.00px;height:671.10px;background:#9c9fa7;"></div>
<div style="left:208px;top:175.00px;width:1px;height:61.35px;background:#2c2c2c"></div>
<div style="left:208px;top:263.80px;width:1px;height:519.80px;background:#2c2c2c"></div>
<div style="left:0.00px;top:261.25px;width:38.00px;height:2.55px;background:#8f8f8f;"></div>
<div style="left:38.00px;top:261.60px;width:1311.60px;height:2.20px;background:#a0a4ac;"></div>
<div class="c h" style="left:38.00px;top:142.40px;width:54.00px;height:19.80px;"><span>Ответственные</span></div>
<div class="lb" style="left:95.00px;top:145.20px;width:110px;line-height:8.0px">Как только проходит неделя -<br>ставим галочку</div>
<div class="c m h" style="left:209.00px;top:162.20px;width:91.00px;height:12.20px;"><span>декабрь</span></div>
<div class="c m h" style="left:301.00px;top:162.20px;width:91.00px;height:12.20px;"><span>январь</span></div>
<div class="c m h" style="left:393.00px;top:162.20px;width:100.00px;height:12.20px;"><span>февраль</span></div>
<div class="c m h" style="left:494.00px;top:162.20px;width:100.00px;height:12.20px;"><span>март</span></div>
<div class="c m h" style="left:595.00px;top:162.20px;width:371.00px;height:12.20px;"><span>апрель</span></div>
<div class="c m h" style="left:967.00px;top:162.20px;width:92.00px;height:12.20px;"><span>апрель</span></div>
<div class="c m h" style="left:1060.00px;top:162.20px;width:91.00px;height:12.20px;"><span>май</span></div>
<div class="c m h" style="left:1152.00px;top:162.20px;width:92.00px;height:12.20px;"><span>июнь</span></div>
<div class="c m h" style="left:1245.00px;top:162.20px;width:92.00px;height:12.20px;"><span>июль</span></div>
<div class="c l h" style="left:95.00px;top:174.40px;width:110.00px;height:12.40px;"><span>Год</span></div>
<div class="c l h" style="left:95.00px;top:186.80px;width:110.00px;height:12.50px;"><span>Начало недели</span></div>
<div class="c l h" style="left:95.00px;top:199.30px;width:110.00px;height:12.40px;"><span>Конец недели</span></div>
<div class="c l h" style="left:95.00px;top:211.70px;width:110.00px;height:12.35px;"><span>Номер недели</span></div>
<div class="c l h" style="left:95.00px;top:224.05px;width:110.00px;height:12.30px;"><span>План/факт</span></div>
<div class="c h" style="left:92.00px;top:236.35px;width:113.00px;height:12.50px;color:#c3cad8"><span>Остаток на начало</span></div>
<div class="c l w h" style="left:95.00px;top:248.85px;width:110.00px;height:12.40px;"><span>Поступления</span></div>
<div class="c h" style="left:210.00px;top:174.40px;width:44.00px;height:12.40px;"><span>3</span></div>
<div class="c h" style="left:210.00px;top:224.05px;width:44.00px;height:12.30px;color:#2a2a2a"><span>план</span></div>
<div class="c h" style="left:210.00px;top:236.35px;width:44.00px;height:12.50px;color:#c3cad8"><span>9 950 106,87</span></div>
<div class="c w" style="left:210.00px;top:248.85px;width:44.00px;height:12.40px;"><span>2 792 780,00</span></div>
<div class="c w" style="left:210.00px;top:451.58px;width:44.00px;height:12.39px;"><span>-2 284 698,00</span></div>
<div class="c h" style="left:255.00px;top:174.40px;width:46.00px;height:12.40px;"><span>3</span></div>
<div class="c h" style="left:255.00px;top:224.05px;width:46.00px;height:12.30px;color:#2a2a2a"><span>факт</span></div>
<div class="c h" style="left:255.00px;top:236.35px;width:46.00px;height:12.50px;color:#c3cad8"><span>9 429 302,32</span></div>
<div class="c w" style="left:255.00px;top:248.85px;width:46.00px;height:12.40px;"><span>2 861 434,07</span></div>
<div class="c w" style="left:255.00px;top:451.58px;width:46.00px;height:12.39px;"><span>-4 329 347,84</span></div>
<div class="c h" style="left:302.00px;top:174.40px;width:45.00px;height:12.40px;"><span>3</span></div>
<div class="c h" style="left:302.00px;top:224.05px;width:45.00px;height:12.30px;color:#2a2a2a"><span>план</span></div>
<div class="c h" style="left:302.00px;top:236.35px;width:45.00px;height:12.50px;color:#c3cad8"><span>9 950 106,87</span></div>
<div class="c w" style="left:302.00px;top:248.85px;width:45.00px;height:12.40px;"><span>1 608 360,00</span></div>
<div class="c w" style="left:302.00px;top:451.58px;width:45.00px;height:12.39px;"><span>-889 580,00</span></div>
<div class="c h" style="left:348.00px;top:174.40px;width:45.00px;height:12.40px;"><span>3</span></div>
<div class="c h" style="left:348.00px;top:224.05px;width:45.00px;height:12.30px;color:#2a2a2a"><span>факт</span></div>
<div class="c h" style="left:348.00px;top:236.35px;width:45.00px;height:12.50px;color:#c3cad8"><span>9 914 108,12</span></div>
<div class="c w" style="left:348.00px;top:248.85px;width:45.00px;height:12.40px;"><span>1 252 875,72</span></div>
<div class="c w" style="left:348.00px;top:451.58px;width:45.00px;height:12.39px;"><span>-2 147 211,46</span></div>
<div class="c h" style="left:394.00px;top:174.40px;width:50.00px;height:12.40px;"><span>3</span></div>
<div class="c h" style="left:394.00px;top:224.05px;width:50.00px;height:12.30px;color:#2a2a2a"><span>план</span></div>
<div class="c h" style="left:394.00px;top:236.35px;width:50.00px;height:12.50px;color:#c3cad8"><span>10 422 446,38</span></div>
<div class="c w" style="left:394.00px;top:248.85px;width:50.00px;height:12.40px;"><span>3 474 180,00</span></div>
<div class="c w" style="left:394.00px;top:451.58px;width:50.00px;height:12.39px;"><span>-2 365 700,00</span></div>
<div class="c h" style="left:445.00px;top:174.40px;width:49.00px;height:12.40px;"><span>3</span></div>
<div class="c h" style="left:445.00px;top:224.05px;width:49.00px;height:12.30px;color:#2a2a2a"><span>факт</span></div>
<div class="c h" style="left:445.00px;top:236.35px;width:49.00px;height:12.50px;color:#c3cad8"><span>10 422 446,38</span></div>
<div class="c w" style="left:445.00px;top:248.85px;width:49.00px;height:12.40px;"><span>4 523 293,93</span></div>
<div class="c w" style="left:445.00px;top:451.58px;width:49.00px;height:12.39px;"><span>-2 794 068,40</span></div>
<div class="c h" style="left:495.00px;top:174.40px;width:50.00px;height:12.40px;"><span>3</span></div>
<div class="c h" style="left:495.00px;top:224.05px;width:50.00px;height:12.30px;color:#2a2a2a"><span>план</span></div>
<div class="c h" style="left:495.00px;top:236.35px;width:50.00px;height:12.50px;color:#c3cad8"><span>10 733 577,55</span></div>
<div class="c w" style="left:495.00px;top:248.85px;width:50.00px;height:12.40px;"><span>3 246 050,00</span></div>
<div class="c w" style="left:495.00px;top:451.58px;width:50.00px;height:12.39px;"><span>-990 200,00</span></div>
<div class="c h" style="left:546.00px;top:174.40px;width:49.00px;height:12.40px;"><span>3</span></div>
<div class="c h" style="left:546.00px;top:224.05px;width:49.00px;height:12.30px;color:#2a2a2a"><span>факт</span></div>
<div class="c h" style="left:546.00px;top:236.35px;width:49.00px;height:12.50px;color:#c3cad8"><span>10 733 577,55</span></div>
<div class="c w" style="left:546.00px;top:248.85px;width:49.00px;height:12.40px;"><span>3 149 388,61</span></div>
<div class="c w" style="left:546.00px;top:451.58px;width:49.00px;height:12.39px;"><span>-2 136 254,80</span></div>
<div class="c h" style="left:596.00px;top:174.40px;width:45.00px;height:12.40px;"><span>2021</span></div>
<div class="c h" style="left:596.00px;top:186.80px;width:45.00px;height:12.50px;"><span>29.03.2021</span></div>
<div class="c h" style="left:596.00px;top:199.30px;width:45.00px;height:12.40px;"><span>04.04.2021</span></div>
<div class="c h" style="left:596.00px;top:211.70px;width:45.00px;height:12.35px;"><span>2021</span></div>
<div class="c h" style="left:596.00px;top:224.05px;width:45.00px;height:12.30px;color:#2a2a2a"><span>план</span></div>
<div class="c h" style="left:596.00px;top:236.35px;width:45.00px;height:12.50px;color:#c3cad8"><span>11 798 130,47</span></div>
<div class="c w" style="left:596.00px;top:248.85px;width:45.00px;height:12.40px;"><span>806 160,00</span></div>
<div class="c w" style="left:596.00px;top:451.58px;width:45.00px;height:12.39px;"><span>-6 245 040,00</span></div>
<div class="c h" style="left:642.00px;top:174.40px;width:44.00px;height:12.40px;"><span>2021</span></div>
<div class="c h" style="left:642.00px;top:186.80px;width:44.00px;height:12.50px;"><span>29.03.2021</span></div>
<div class="c h" style="left:642.00px;top:199.30px;width:44.00px;height:12.40px;"><span>04.04.2021</span></div>
<div class="c h" style="left:642.00px;top:211.70px;width:44.00px;height:12.35px;"><span>2021</span></div>
<div class="c h" style="left:642.00px;top:224.05px;width:44.00px;height:12.30px;color:#2a2a2a"><span>факт</span></div>
<div class="c h" style="left:642.00px;top:236.35px;width:44.00px;height:12.50px;color:#c3cad8"><span>11 798 130,47</span></div>
<div class="c w" style="left:642.00px;top:248.85px;width:44.00px;height:12.40px;"><span>1 092 095,34</span></div>
<div class="c w" style="left:642.00px;top:451.58px;width:44.00px;height:12.39px;"><span>-6 295 306,87</span></div>
<div class="c h" style="left:687.00px;top:174.40px;width:49.00px;height:12.40px;"><span>2021</span></div>
<div class="c h" style="left:687.00px;top:186.80px;width:49.00px;height:12.50px;"><span>05.04.2021</span></div>
<div class="c h" style="left:687.00px;top:199.30px;width:49.00px;height:12.40px;"><span>11.04.2021</span></div>
<div class="c h" style="left:687.00px;top:211.70px;width:49.00px;height:12.35px;"><span>2022</span></div>
<div class="c h" style="left:687.00px;top:224.05px;width:49.00px;height:12.30px;color:#333"><span>план</span></div>
<div class="c b h" style="left:687.00px;top:236.35px;width:49.00px;height:12.50px;color:#fff"><span>6 594 918,94</span></div>
<div class="c w b" style="left:687.00px;top:248.85px;width:49.00px;height:12.40px;"><span>0</span></div>
<div class="c w b" style="left:687.00px;top:451.58px;width:49.00px;height:12.39px;"><span>-101 500,00</span></div>
<div class="c h" style="left:737.00px;top:174.40px;width:49.00px;height:12.40px;"><span>2021</span></div>
<div class="c h" style="left:737.00px;top:186.80px;width:49.00px;height:12.50px;"><span>05.04.2021</span></div>
<div class="c h" style="left:737.00px;top:199.30px;width:49.00px;height:12.40px;"><span>11.04.2021</span></div>
<div class="c h" style="left:737.00px;top:211.70px;width:49.00px;height:12.35px;"><span>2022</span></div>
<div class="c h" style="left:737.00px;top:224.05px;width:49.00px;height:12.30px;color:#2a2a2a"><span>факт</span></div>
<div class="c h" style="left:737.00px;top:236.35px;width:49.00px;height:12.50px;color:#c3cad8"><span>6 594 918,94</span></div>
<div class="c w" style="left:737.00px;top:248.85px;width:49.00px;height:12.40px;"><span>2 382</span></div>
<div class="c w" style="left:737.00px;top:451.58px;width:49.00px;height:12.39px;"><span>-176 162,34</span></div>
<div class="c h" style="left:787.00px;top:174.40px;width:44.00px;height:12.40px;"><span>2021</span></div>
<div class="c h" style="left:787.00px;top:186.80px;width:44.00px;height:12.50px;"><span>12.04.2021</span></div>
<div class="c h" style="left:787.00px;top:199.30px;width:44.00px;height:12.40px;"><span>18.04.2021</span></div>
<div class="c h" style="left:787.00px;top:211.70px;width:44.00px;height:12.35px;"><span>2023</span></div>
<div class="c h" style="left:787.00px;top:224.05px;width:44.00px;height:12.30px;color:#333"><span>план</span></div>
<div class="c b h" style="left:787.00px;top:236.35px;width:44.00px;height:12.50px;color:#fff"><span>6 421 138,38</span></div>
<div class="c w b" style="left:787.00px;top:248.85px;width:44.00px;height:12.40px;"><span>10 000</span></div>
<div class="c w b" style="left:787.00px;top:451.58px;width:44.00px;height:12.39px;"><span>-852 000,00</span></div>
<div class="c h" style="left:832.00px;top:174.40px;width:44.00px;height:12.40px;"><span>2021</span></div>
<div class="c h" style="left:832.00px;top:186.80px;width:44.00px;height:12.50px;"><span>12.04.2021</span></div>
<div class="c h" style="left:832.00px;top:199.30px;width:44.00px;height:12.40px;"><span>18.04.2021</span></div>
<div class="c h" style="left:832.00px;top:211.70px;width:44.00px;height:12.35px;"><span>2023</span></div>
<div class="c h" style="left:832.00px;top:224.05px;width:44.00px;height:12.30px;color:#2a2a2a"><span>факт</span></div>
<div class="c h" style="left:832.00px;top:236.35px;width:44.00px;height:12.50px;color:#c3cad8"><span>6 421 138,38</span></div>
<div class="c w" style="left:832.00px;top:248.85px;width:44.00px;height:12.40px;"><span>312 750</span></div>
<div class="c w" style="left:832.00px;top:451.58px;width:44.00px;height:12.39px;"><span>-747 545,24</span></div>
<div class="c h" style="left:877.00px;top:174.40px;width:45.00px;height:12.40px;"><span>2021</span></div>
<div class="c h" style="left:877.00px;top:186.80px;width:45.00px;height:12.50px;"><span>19.04.2021</span></div>
<div class="c h" style="left:877.00px;top:199.30px;width:45.00px;height:12.40px;"><span>25.04.2021</span></div>
<div class="c h" style="left:877.00px;top:211.70px;width:45.00px;height:12.35px;"><span>2024</span></div>
<div class="c h" style="left:877.00px;top:224.05px;width:45.00px;height:12.30px;color:#333"><span>план</span></div>
<div class="c b h" style="left:877.00px;top:236.35px;width:45.00px;height:12.50px;color:#fff"><span>5 986 343,14</span></div>
<div class="c w b" style="left:877.00px;top:248.85px;width:45.00px;height:12.40px;"><span>1 233 080,00</span></div>
<div class="c w b" style="left:877.00px;top:451.58px;width:45.00px;height:12.39px;"><span>-50 500,00</span></div>
<div class="c h" style="left:923.00px;top:174.40px;width:44.00px;height:12.40px;"><span>2021</span></div>
<div class="c h" style="left:923.00px;top:186.80px;width:44.00px;height:12.50px;"><span>19.04.2021</span></div>
<div class="c h" style="left:923.00px;top:199.30px;width:44.00px;height:12.40px;"><span>25.04.2021</span></div>
<div class="c h" style="left:923.00px;top:211.70px;width:44.00px;height:12.35px;"><span>2024</span></div>
<div class="c h" style="left:923.00px;top:224.05px;width:44.00px;height:12.30px;color:#2a2a2a"><span>факт</span></div>
<div class="c h" style="left:923.00px;top:236.35px;width:44.00px;height:12.50px;color:#c3cad8"><span>5 986 343,14</span></div>
<div class="c w" style="left:923.00px;top:248.85px;width:44.00px;height:12.40px;"><span>1 273 080,00</span></div>
<div class="c w" style="left:923.00px;top:451.58px;width:44.00px;height:12.39px;"><span>-109 683,98</span></div>
<div class="c h" style="left:968.00px;top:174.40px;width:45.00px;height:12.40px;"><span>3</span></div>
<div class="c h" style="left:968.00px;top:224.05px;width:45.00px;height:12.30px;color:#2a2a2a"><span>план</span></div>
<div class="c h" style="left:968.00px;top:236.35px;width:45.00px;height:12.50px;color:#c3cad8"><span>6 594 918,94</span></div>
<div class="c w" style="left:968.00px;top:248.85px;width:45.00px;height:12.40px;"><span>2 049 240,00</span></div>
<div class="c w" style="left:968.00px;top:451.58px;width:45.00px;height:12.39px;"><span>-7 249 040,00</span></div>
<div class="c h" style="left:1014.00px;top:174.40px;width:46.00px;height:12.40px;"><span>3</span></div>
<div class="c h" style="left:1014.00px;top:224.05px;width:46.00px;height:12.30px;color:#2a2a2a"><span>факт</span></div>
<div class="c h" style="left:1014.00px;top:236.35px;width:46.00px;height:12.50px;color:#c3cad8"><span>6 594 918,94</span></div>
<div class="c w" style="left:1014.00px;top:248.85px;width:46.00px;height:12.40px;"><span>2 680 307,12</span></div>
<div class="c w" style="left:1014.00px;top:451.58px;width:46.00px;height:12.39px;"><span>-7 328 698,43</span></div>
<div class="c h" style="left:1061.00px;top:174.40px;width:45.00px;height:12.40px;"><span>3</span></div>
<div class="c h" style="left:1061.00px;top:224.05px;width:45.00px;height:12.30px;color:#2a2a2a"><span>план</span></div>
<div class="c h" style="left:1061.00px;top:236.35px;width:45.00px;height:12.50px;color:#c3cad8"><span>6 058 256,32</span></div>
<div class="c w" style="left:1061.00px;top:248.85px;width:45.00px;height:12.40px;"><span>809 680,00</span></div>
<div class="c w" style="left:1061.00px;top:451.58px;width:45.00px;height:12.39px;"><span>-970 000,00</span></div>
<div class="c h" style="left:1107.00px;top:174.40px;width:45.00px;height:12.40px;"><span>3</span></div>
<div class="c h" style="left:1107.00px;top:224.05px;width:45.00px;height:12.30px;color:#2a2a2a"><span>факт</span></div>
<div class="c h" style="left:1107.00px;top:236.35px;width:45.00px;height:12.50px;color:#c3cad8"><span>6 058 256,32</span></div>
<div class="c w" style="left:1107.00px;top:248.85px;width:45.00px;height:12.40px;"><span>1 217 241,03</span></div>
<div class="c w" style="left:1107.00px;top:451.58px;width:45.00px;height:12.39px;"><span>-2 039 963,39</span></div>
<div class="c h" style="left:1153.00px;top:174.40px;width:46.00px;height:12.40px;"><span>3</span></div>
<div class="c h" style="left:1153.00px;top:224.05px;width:46.00px;height:12.30px;color:#2a2a2a"><span>план</span></div>
<div class="c h" style="left:1153.00px;top:236.35px;width:46.00px;height:12.50px;color:#c3cad8"><span>6 570 975,10</span></div>
<div class="c w" style="left:1153.00px;top:248.85px;width:46.00px;height:12.40px;"><span>3 195 250,00</span></div>
<div class="c w" style="left:1153.00px;top:451.58px;width:46.00px;height:12.39px;"><span>-3 875 500,00</span></div>
<div class="c h" style="left:1200.00px;top:174.40px;width:45.00px;height:12.40px;"><span>3</span></div>
<div class="c h" style="left:1200.00px;top:224.05px;width:45.00px;height:12.30px;color:#2a2a2a"><span>факт</span></div>
<div class="c h" style="left:1200.00px;top:236.35px;width:45.00px;height:12.50px;color:#c3cad8"><span>6 570 975,10</span></div>
<div class="c w" style="left:1200.00px;top:248.85px;width:45.00px;height:12.40px;"><span>5 853 407,57</span></div>
<div class="c w" style="left:1200.00px;top:451.58px;width:45.00px;height:12.39px;"><span>-3 989 093,04</span></div>
<div class="c h" style="left:1246.00px;top:174.40px;width:45.00px;height:12.40px;"><span>3</span></div>
<div class="c h" style="left:1246.00px;top:224.05px;width:45.00px;height:12.30px;color:#2a2a2a"><span>план</span></div>
<div class="c h" style="left:1246.00px;top:236.35px;width:45.00px;height:12.50px;color:#c3cad8"><span>8 779 000,92</span></div>
<div class="c w" style="left:1246.00px;top:248.85px;width:45.00px;height:12.40px;"><span>2 900 000,00</span></div>
<div class="c w" style="left:1246.00px;top:451.58px;width:45.00px;height:12.39px;"><span>-1 782 000,00</span></div>
<div class="c h" style="left:1292.00px;top:174.40px;width:46.00px;height:12.40px;"><span>3</span></div>
<div class="c h" style="left:1292.00px;top:224.05px;width:46.00px;height:12.30px;color:#2a2a2a"><span>факт</span></div>
<div class="c h" style="left:1292.00px;top:236.35px;width:46.00px;height:12.50px;color:#c3cad8"><span>8 779 000,92</span></div>
<div class="c w" style="left:1292.00px;top:248.85px;width:46.00px;height:12.40px;"><span>2 739 622,75</span></div>
<div class="c w" style="left:1292.00px;top:451.58px;width:46.00px;height:12.39px;"><span>-1 227 115,54</span></div>
<div class="c l" style="left:95.00px;top:263.80px;width:110.00px;height:12.39px;"><span>Возврат денег от поставщиков</span></div>
<div class="c" style="left:210.00px;top:263.80px;width:44.00px;height:12.39px;"><span>0,00</span></div>
<div class="c" style="left:255.00px;top:263.80px;width:46.00px;height:12.39px;"><span>0,00</span></div>
<div class="c" style="left:302.00px;top:263.80px;width:45.00px;height:12.39px;"><span>0,00</span></div>
<div class="c" style="left:348.00px;top:263.80px;width:45.00px;height:12.39px;"><span>29 606,40</span></div>
<div class="c" style="left:394.00px;top:263.80px;width:50.00px;height:12.39px;"><span>0,00</span></div>
<div class="c" style="left:445.00px;top:263.80px;width:49.00px;height:12.39px;"><span>0,00</span></div>
<div class="c" style="left:495.00px;top:263.80px;width:50.00px;height:12.39px;"><span>0,00</span></div>
<div class="c" style="left:546.00px;top:263.80px;width:49.00px;height:12.39px;"><span>1 450,00</span></div>
<div class="c" style="left:596.00px;top:263.80px;width:45.00px;height:12.39px;"><span>0,00</span></div>
<div class="c" style="left:642.00px;top:263.80px;width:44.00px;height:12.39px;"><span>0,00</span></div>
<div class="c" style="left:687.00px;top:263.80px;width:49.00px;height:12.39px;"><span>0,00</span></div>
<div class="c" style="left:737.00px;top:263.80px;width:49.00px;height:12.39px;"><span>890,00</span></div>
<div class="c" style="left:787.00px;top:263.80px;width:44.00px;height:12.39px;"><span>0,00</span></div>
<div class="c" style="left:832.00px;top:263.80px;width:44.00px;height:12.39px;"><span>0,00</span></div>
<div class="c" style="left:877.00px;top:263.80px;width:45.00px;height:12.39px;"><span>0,00</span></div>
<div class="c" style="left:923.00px;top:263.80px;width:44.00px;height:12.39px;"><span>0,00</span></div>
<div class="c" style="left:968.00px;top:263.80px;width:45.00px;height:12.39px;"><span>0,00</span></div>
<div class="c" style="left:1014.00px;top:263.80px;width:46.00px;height:12.39px;"><span>890,00</span></div>
<div class="c" style="left:1061.00px;top:263.80px;width:45.00px;height:12.39px;"><span>0,00</span></div>
<div class="c" style="left:1107.00px;top:263.80px;width:45.00px;height:12.39px;"><span>0,00</span></div>
<div class="c" style="left:1153.00px;top:263.80px;width:46.00px;height:12.39px;"><span>0,00</span></div>
<div class="c" style="left:1200.00px;top:263.80px;width:45.00px;height:12.39px;"><span>52 578,53</span></div>
<div class="c" style="left:1246.00px;top:263.80px;width:45.00px;height:12.39px;"><span>0,00</span></div>
<div class="c" style="left:1292.00px;top:263.80px;width:46.00px;height:12.39px;"><span>0,00</span></div>
<div class="c l" style="left:95.00px;top:276.19px;width:110.00px;height:12.39px;"><span>Выплаты от сотрудников</span></div>
<div class="c" style="left:210.00px;top:276.19px;width:44.00px;height:12.39px;"><span>0,00</span></div>
<div class="c" style="left:255.00px;top:276.19px;width:46.00px;height:12.39px;"><span>30 000,00</span></div>
<div class="c" style="left:302.00px;top:276.19px;width:45.00px;height:12.39px;"><span>0,00</span></div>
<div class="c" style="left:348.00px;top:276.19px;width:45.00px;height:12.39px;"><span>32 002,00</span></div>
<div class="c" style="left:394.00px;top:276.19px;width:50.00px;height:12.39px;"><span>0,00</span></div>
<div class="c" style="left:445.00px;top:276.19px;width:49.00px;height:12.39px;"><span>109 040,00</span></div>
<div class="c" style="left:495.00px;top:276.19px;width:50.00px;height:12.39px;"><span>0,00</span></div>
<div class="c" style="left:546.00px;top:276.19px;width:49.00px;height:12.39px;"><span>30 240,00</span></div>
<div class="c" style="left:596.00px;top:276.19px;width:45.00px;height:12.39px;"><span>0,00</span></div>
<div class="c" style="left:642.00px;top:276.19px;width:44.00px;height:12.39px;"><span>9 000,00</span></div>
<div class="c" style="left:687.00px;top:276.19px;width:49.00px;height:12.39px;"><span>0,00</span></div>
<div class="c" style="left:737.00px;top:276.19px;width:49.00px;height:12.39px;"><span>0,00</span></div>
<div class="c" style="left:787.00px;top:276.19px;width:44.00px;height:12.39px;"><span>0,00</span></div>
<div class="c" style="left:832.00px;top:276.19px;width:44.00px;height:12.39px;"><span>10 850,00</span></div>
<div class="c" style="left:877.00px;top:276.19px;width:45.00px;height:12.39px;"><span>0,00</span></div>
<div class="c" style="left:923.00px;top:276.19px;width:44.00px;height:12.39px;"><span>0,00</span></div>
<div class="c" style="left:968.00px;top:276.19px;width:45.00px;height:12.39px;"><span>0,00</span></div>
<div class="c" style="left:1014.00px;top:276.19px;width:46.00px;height:12.39px;"><span>19 850,00</span></div>
<div class="c" style="left:1061.00px;top:276.19px;width:45.00px;height:12.39px;"><span>0,00</span></div>
<div class="c" style="left:1107.00px;top:276.19px;width:45.00px;height:12.39px;"><span>15 205,00</span></div>
<div class="c" style="left:1153.00px;top:276.19px;width:46.00px;height:12.39px;"><span>0,00</span></div>
<div class="c" style="left:1200.00px;top:276.19px;width:45.00px;height:12.39px;"><span>82 617,00</span></div>
<div class="c" style="left:1246.00px;top:276.19px;width:45.00px;height:12.39px;"><span>0,00</span></div>
<div class="c" style="left:1292.00px;top:276.19px;width:46.00px;height:12.39px;"><span>0,00</span></div>
<div class="c l" style="left:95.00px;top:288.58px;width:110.00px;height:12.39px;"><span>Онлайн-школа выручка</span></div>
<div class="c" style="left:210.00px;top:288.58px;width:44.00px;height:12.39px;"><span>0,00</span></div>
<div class="c" style="left:255.00px;top:288.58px;width:46.00px;height:12.39px;"><span>0,00</span></div>
<div class="c" style="left:302.00px;top:288.58px;width:45.00px;height:12.39px;"><span>0,00</span></div>
<div class="c" style="left:348.00px;top:288.58px;width:45.00px;height:12.39px;"><span>65 250,00</span></div>
<div class="c" style="left:394.00px;top:288.58px;width:50.00px;height:12.39px;"><span>0,00</span></div>
<div class="c" style="left:445.00px;top:288.58px;width:49.00px;height:12.39px;"><span>22 500,00</span></div>
<div class="c" style="left:495.00px;top:288.58px;width:50.00px;height:12.39px;"><span>0,00</span></div>
<div class="c" style="left:546.00px;top:288.58px;width:49.00px;height:12.39px;"><span>0,00</span></div>
<div class="c" style="left:596.00px;top:288.58px;width:45.00px;height:12.39px;"><span>0,00</span></div>
<div class="c" style="left:642.00px;top:288.58px;width:44.00px;height:12.39px;"><span>0,00</span></div>
<div class="c" style="left:687.00px;top:288.58px;width:49.00px;height:12.39px;"><span>0,00</span></div>
<div class="c" style="left:737.00px;top:288.58px;width:49.00px;height:12.39px;"><span>0,00</span></div>
<div class="c" style="left:787.00px;top:288.58px;width:44.00px;height:12.39px;"><span>0,00</span></div>
<div class="c" style="left:832.00px;top:288.58px;width:44.00px;height:12.39px;"><span>0,00</span></div>
<div class="c" style="left:877.00px;top:288.58px;width:45.00px;height:12.39px;"><span>0,00</span></div>
<div class="c" style="left:923.00px;top:288.58px;width:44.00px;height:12.39px;"><span>0,00</span></div>
<div class="c" style="left:968.00px;top:288.58px;width:45.00px;height:12.39px;"><span>0,00</span></div>
<div class="c" style="left:1014.00px;top:288.58px;width:46.00px;height:12.39px;"><span>0,00</span></div>
<div class="c" style="left:1061.00px;top:288.58px;width:45.00px;height:12.39px;"><span>0,00</span></div>
<div class="c" style="left:1107.00px;top:288.58px;width:45.00px;height:12.39px;"><span>85 054,50</span></div>
<div class="c" style="left:1153.00px;top:288.58px;width:46.00px;height:12.39px;"><span>0,00</span></div>
<div class="c" style="left:1200.00px;top:288.58px;width:45.00px;height:12.39px;"><span>40 950,00</span></div>
<div class="c" style="left:1246.00px;top:288.58px;width:45.00px;height:12.39px;"><span>0,00</span></div>
<div class="c" style="left:1292.00px;top:288.58px;width:46.00px;height:12.39px;"><span>0,00</span></div>
<div class="c l" style="left:95.00px;top:300.97px;width:110.00px;height:12.39px;"><span>Проекты выручка</span></div>
<div class="c" style="left:210.00px;top:300.97px;width:44.00px;height:12.39px;"><span>2 791 380,00</span></div>
<div class="c" style="left:255.00px;top:300.97px;width:46.00px;height:12.39px;"><span>2 822 195,00</span></div>
<div class="c" style="left:302.00px;top:300.97px;width:45.00px;height:12.39px;"><span>1 608 360,00</span></div>
<div class="c" style="left:348.00px;top:300.97px;width:45.00px;height:12.39px;"><span>1 115 910,00</span></div>
<div class="c" style="left:394.00px;top:300.97px;width:50.00px;height:12.39px;"><span>3 474 180,00</span></div>
<div class="c" style="left:445.00px;top:300.97px;width:49.00px;height:12.39px;"><span>4 338 555,00</span></div>
<div class="c" style="left:495.00px;top:300.97px;width:50.00px;height:12.39px;"><span>3 246 050,00</span></div>
<div class="c" style="left:546.00px;top:300.97px;width:49.00px;height:12.39px;"><span>3 109 757,00</span></div>
<div class="c" style="left:596.00px;top:300.97px;width:45.00px;height:12.39px;"><span>806 160,00</span></div>
<div class="c" style="left:642.00px;top:300.97px;width:44.00px;height:12.39px;"><span>1 069 285,00</span></div>
<div class="c" style="left:687.00px;top:300.97px;width:49.00px;height:12.39px;"><span>0,00</span></div>
<div class="c" style="left:737.00px;top:300.97px;width:49.00px;height:12.39px;"><span>0,00</span></div>
<div class="c" style="left:787.00px;top:300.97px;width:44.00px;height:12.39px;"><span>10 000,00</span></div>
<div class="c" style="left:832.00px;top:300.97px;width:44.00px;height:12.39px;"><span>301 900,00</span></div>
<div class="c" style="left:877.00px;top:300.97px;width:45.00px;height:12.39px;"><span>1 233 080,00</span></div>
<div class="c" style="left:923.00px;top:300.97px;width:44.00px;height:12.39px;"><span>1 273 080,00</span></div>
<div class="c" style="left:968.00px;top:300.97px;width:45.00px;height:12.39px;"><span>2 049 240,00</span></div>
<div class="c" style="left:1014.00px;top:300.97px;width:46.00px;height:12.39px;"><span>2 644 265,00</span></div>
<div class="c" style="left:1061.00px;top:300.97px;width:45.00px;height:12.39px;"><span>809 680,00</span></div>
<div class="c" style="left:1107.00px;top:300.97px;width:45.00px;height:12.39px;"><span>1 102 973,92</span></div>
<div class="c" style="left:1153.00px;top:300.97px;width:46.00px;height:12.39px;"><span>3 195 250,00</span></div>
<div class="c" style="left:1200.00px;top:300.97px;width:45.00px;height:12.39px;"><span>5 655 992,18</span></div>
<div class="c" style="left:1246.00px;top:300.97px;width:45.00px;height:12.39px;"><span>2 900 000,00</span></div>
<div class="c" style="left:1292.00px;top:300.97px;width:46.00px;height:12.39px;"><span>2 739 622,47</span></div>
<div class="c l" style="left:95.00px;top:313.36px;width:110.00px;height:12.39px;"><span>Everfest-спонсоры выручка</span></div>
<div class="c" style="left:210.00px;top:313.36px;width:44.00px;height:12.39px;"><span>0,00</span></div>
<div class="c" style="left:255.00px;top:313.36px;width:46.00px;height:12.39px;"><span>0,00</span></div>
<div class="c" style="left:302.00px;top:313.36px;width:45.00px;height:12.39px;"><span>0,00</span></div>
<div class="c" style="left:348.00px;top:313.36px;width:45.00px;height:12.39px;"><span>0,00</span></div>
<div class="c" style="left:394.00px;top:313.36px;width:50.00px;height:12.39px;"><span>0,00</span></div>
<div class="c" style="left:445.00px;top:313.36px;width:49.00px;height:12.39px;"><span>0,00</span></div>
<div class="c" style="left:495.00px;top:313.36px;width:50.00px;height:12.39px;"><span>0,00</span></div>
<div class="c" style="left:546.00px;top:313.36px;width:49.00px;height:12.39px;"><span>0,00</span></div>
<div class="c" style="left:596.00px;top:313.36px;width:45.00px;height:12.39px;"><span>0,00</span></div>
<div class="c" style="left:642.00px;top:313.36px;width:44.00px;height:12.39px;"><span>0,00</span></div>
<div class="c" style="left:687.00px;top:313.36px;width:49.00px;height:12.39px;"><span>0,00</span></div>
<div class="c" style="left:737.00px;top:313.36px;width:49.00px;height:12.39px;"><span>0,00</span></div>
<div class="c" style="left:787.00px;top:313.36px;width:44.00px;height:12.39px;"><span>0,00</span></div>
<div class="c" style="left:832.00px;top:313.36px;width:44.00px;height:12.39px;"><span>0,00</span></div>
<div class="c" style="left:877.00px;top:313.36px;width:45.00px;height:12.39px;"><span>0,00</span></div>
<div class="c" style="left:923.00px;top:313.36px;width:44.00px;height:12.39px;"><span>0,00</span></div>
<div class="c" style="left:968.00px;top:313.36px;width:45.00px;height:12.39px;"><span>0,00</span></div>
<div class="c" style="left:1014.00px;top:313.36px;width:46.00px;height:12.39px;"><span>0,00</span></div>
<div class="c" style="left:1061.00px;top:313.36px;width:45.00px;height:12.39px;"><span>0,00</span></div>
<div class="c" style="left:1107.00px;top:313.36px;width:45.00px;height:12.39px;"><span>0,00</span></div>
<div class="c" style="left:1153.00px;top:313.36px;width:46.00px;height:12.39px;"><span>0,00</span></div>
<div class="c" style="left:1200.00px;top:313.36px;width:45.00px;height:12.39px;"><span>0,00</span></div>
<div class="c" style="left:1246.00px;top:313.36px;width:45.00px;height:12.39px;"><span>0,00</span></div>
<div class="c" style="left:1292.00px;top:313.36px;width:46.00px;height:12.39px;"><span>0,00</span></div>
<div class="c l" style="left:95.00px;top:325.75px;width:110.00px;height:12.39px;"><span>Получение кредитов и займов</span></div>
<div class="c" style="left:210.00px;top:325.75px;width:44.00px;height:12.39px;"><span>0,00</span></div>
<div class="c" style="left:255.00px;top:325.75px;width:46.00px;height:12.39px;"><span>0,00</span></div>
<div class="c" style="left:302.00px;top:325.75px;width:45.00px;height:12.39px;"><span>0,00</span></div>
<div class="c" style="left:348.00px;top:325.75px;width:45.00px;height:12.39px;"><span>0,00</span></div>
<div class="c" style="left:394.00px;top:325.75px;width:50.00px;height:12.39px;"><span>0,00</span></div>
<div class="c" style="left:445.00px;top:325.75px;width:49.00px;height:12.39px;"><span>0,00</span></div>
<div class="c" style="left:495.00px;top:325.75px;width:50.00px;height:12.39px;"><span>0,00</span></div>
<div class="c" style="left:546.00px;top:325.75px;width:49.00px;height:12.39px;"><span>0,00</span></div>
<div class="c" style="left:596.00px;top:325.75px;width:45.00px;height:12.39px;"><span>0,00</span></div>
<div class="c" style="left:642.00px;top:325.75px;width:44.00px;height:12.39px;"><span>0,00</span></div>
<div class="c" style="left:687.00px;top:325.75px;width:49.00px;height:12.39px;"><span>0,00</span></div>
<div class="c" style="left:737.00px;top:325.75px;width:49.00px;height:12.39px;"><span>0,00</span></div>
<div class="c" style="left:787.00px;top:325.75px;width:44.00px;height:12.39px;"><span>0,00</span></div>
<div class="c" style="left:832.00px;top:325.75px;width:44.00px;height:12.39px;"><span>0,00</span></div>
<div class="c" style="left:877.00px;top:325.75px;width:45.00px;height:12.39px;"><span>0,00</span></div>
<div class="c" style="left:923.00px;top:325.75px;width:44.00px;height:12.39px;"><span>0,00</span></div>
<div class="c" style="left:968.00px;top:325.75px;width:45.00px;height:12.39px;"><span>0,00</span></div>
<div class="c" style="left:1014.00px;top:325.75px;width:46.00px;height:12.39px;"><span>0,00</span></div>
<div class="c" style="left:1061.00px;top:325.75px;width:45.00px;height:12.39px;"><span>0,00</span></div>
<div class="c" style="left:1107.00px;top:325.75px;width:45.00px;height:12.39px;"><span>0,00</span></div>
<div class="c" style="left:1153.00px;top:325.75px;width:46.00px;height:12.39px;"><span>0,00</span></div>
<div class="c" style="left:1200.00px;top:325.75px;width:45.00px;height:12.39px;"><span>0,00</span></div>
<div class="c" style="left:1246.00px;top:325.75px;width:45.00px;height:12.39px;"><span>0,00</span></div>
<div class="c" style="left:1292.00px;top:325.75px;width:46.00px;height:12.39px;"><span>0,00</span></div>
<div class="lb" style="left:95.00px;top:340.34px;width:110px;line-height:8px">Получение учредительского<br>займа</div>
<div class="c" style="left:210.00px;top:345.00px;width:44.00px;height:12.39px;"><span>0,00</span></div>
<div class="c" style="left:255.00px;top:345.00px;width:46.00px;height:12.39px;"><span>0,00</span></div>
<div class="c" style="left:302.00px;top:345.00px;width:45.00px;height:12.39px;"><span>0,00</span></div>
<div class="c" style="left:348.00px;top:345.00px;width:45.00px;height:12.39px;"><span>0,00</span></div>
<div class="c" style="left:394.00px;top:345.00px;width:50.00px;height:12.39px;"><span>0,00</span></div>
<div class="c" style="left:445.00px;top:345.00px;width:49.00px;height:12.39px;"><span>0,00</span></div>
<div class="c" style="left:495.00px;top:345.00px;width:50.00px;height:12.39px;"><span>0,00</span></div>
<div class="c" style="left:546.00px;top:345.00px;width:49.00px;height:12.39px;"><span>0,00</span></div>
<div class="c" style="left:596.00px;top:345.00px;width:45.00px;height:12.39px;"><span>0,00</span></div>
<div class="c" style="left:642.00px;top:345.00px;width:44.00px;height:12.39px;"><span>0,00</span></div>
<div class="c" style="left:687.00px;top:345.00px;width:49.00px;height:12.39px;"><span>0,00</span></div>
<div class="c" style="left:737.00px;top:345.00px;width:49.00px;height:12.39px;"><span>0,00</span></div>
<div class="c" style="left:787.00px;top:345.00px;width:44.00px;height:12.39px;"><span>0,00</span></div>
<div class="c" style="left:832.00px;top:345.00px;width:44.00px;height:12.39px;"><span>0,00</span></div>
<div class="c" style="left:877.00px;top:345.00px;width:45.00px;height:12.39px;"><span>0,00</span></div>
<div class="c" style="left:923.00px;top:345.00px;width:44.00px;height:12.39px;"><span>0,00</span></div>
<div class="c" style="left:968.00px;top:345.00px;width:45.00px;height:12.39px;"><span>0,00</span></div>
<div class="c" style="left:1014.00px;top:345.00px;width:46.00px;height:12.39px;"><span>0,00</span></div>
<div class="c" style="left:1061.00px;top:345.00px;width:45.00px;height:12.39px;"><span>0,00</span></div>
<div class="c" style="left:1107.00px;top:345.00px;width:45.00px;height:12.39px;"><span>0,00</span></div>
<div class="c" style="left:1153.00px;top:345.00px;width:46.00px;height:12.39px;"><span>0,00</span></div>
<div class="c" style="left:1200.00px;top:345.00px;width:45.00px;height:12.39px;"><span>0,00</span></div>
<div class="c" style="left:1246.00px;top:345.00px;width:45.00px;height:12.39px;"><span>0,00</span></div>
<div class="c" style="left:1292.00px;top:345.00px;width:46.00px;height:12.39px;"><span>0,00</span></div>
<div class="c l" style="left:95.00px;top:357.39px;width:110.00px;height:12.39px;"><span>Продажа ОС</span></div>
<div class="c" style="left:210.00px;top:357.39px;width:44.00px;height:12.39px;"><span>0,00</span></div>
<div class="c" style="left:255.00px;top:357.39px;width:46.00px;height:12.39px;"><span>0,00</span></div>
<div class="c" style="left:302.00px;top:357.39px;width:45.00px;height:12.39px;"><span>0,00</span></div>
<div class="c" style="left:348.00px;top:357.39px;width:45.00px;height:12.39px;"><span>0,00</span></div>
<div class="c" style="left:394.00px;top:357.39px;width:50.00px;height:12.39px;"><span>0,00</span></div>
<div class="c" style="left:445.00px;top:357.39px;width:49.00px;height:12.39px;"><span>0,00</span></div>
<div class="c" style="left:495.00px;top:357.39px;width:50.00px;height:12.39px;"><span>0,00</span></div>
<div class="c" style="left:546.00px;top:357.39px;width:49.00px;height:12.39px;"><span>0,00</span></div>
<div class="c" style="left:596.00px;top:357.39px;width:45.00px;height:12.39px;"><span>0,00</span></div>
<div class="c" style="left:642.00px;top:357.39px;width:44.00px;height:12.39px;"><span>0,00</span></div>
<div class="c" style="left:687.00px;top:357.39px;width:49.00px;height:12.39px;"><span>0,00</span></div>
<div class="c" style="left:737.00px;top:357.39px;width:49.00px;height:12.39px;"><span>0,00</span></div>
<div class="c" style="left:787.00px;top:357.39px;width:44.00px;height:12.39px;"><span>0,00</span></div>
<div class="c" style="left:832.00px;top:357.39px;width:44.00px;height:12.39px;"><span>0,00</span></div>
<div class="c" style="left:877.00px;top:357.39px;width:45.00px;height:12.39px;"><span>0,00</span></div>
<div class="c" style="left:923.00px;top:357.39px;width:44.00px;height:12.39px;"><span>0,00</span></div>
<div class="c" style="left:968.00px;top:357.39px;width:45.00px;height:12.39px;"><span>0,00</span></div>
<div class="c" style="left:1014.00px;top:357.39px;width:46.00px;height:12.39px;"><span>0,00</span></div>
<div class="c" style="left:1061.00px;top:357.39px;width:45.00px;height:12.39px;"><span>0,00</span></div>
<div class="c" style="left:1107.00px;top:357.39px;width:45.00px;height:12.39px;"><span>0,00</span></div>
<div class="c" style="left:1153.00px;top:357.39px;width:46.00px;height:12.39px;"><span>0,00</span></div>
<div class="c" style="left:1200.00px;top:357.39px;width:45.00px;height:12.39px;"><span>0,00</span></div>
<div class="c" style="left:1246.00px;top:357.39px;width:45.00px;height:12.39px;"><span>0,00</span></div>
<div class="c" style="left:1292.00px;top:357.39px;width:46.00px;height:12.39px;"><span>0,00</span></div>
<div class="lb" style="left:95.00px;top:371.98px;width:110px;line-height:8px">Прочие поступл. от фин.<br>операций</div>
<div class="c" style="left:210.00px;top:377.24px;width:44.00px;height:12.39px;"><span>1 400,00</span></div>
<div class="c" style="left:255.00px;top:377.24px;width:46.00px;height:12.39px;"><span>9 239,07</span></div>
<div class="c" style="left:302.00px;top:377.24px;width:45.00px;height:12.39px;"><span>0,00</span></div>
<div class="c" style="left:348.00px;top:377.24px;width:45.00px;height:12.39px;"><span>10 107,32</span></div>
<div class="c" style="left:394.00px;top:377.24px;width:50.00px;height:12.39px;"><span>0,00</span></div>
<div class="c" style="left:445.00px;top:377.24px;width:49.00px;height:12.39px;"><span>53 198,93</span></div>
<div class="c" style="left:495.00px;top:377.24px;width:50.00px;height:12.39px;"><span>0,00</span></div>
<div class="c" style="left:546.00px;top:377.24px;width:49.00px;height:12.39px;"><span>7 941,61</span></div>
<div class="c" style="left:596.00px;top:377.24px;width:45.00px;height:12.39px;"><span>0,00</span></div>
<div class="c" style="left:642.00px;top:377.24px;width:44.00px;height:12.39px;"><span>13 810,34</span></div>
<div class="c" style="left:687.00px;top:377.24px;width:49.00px;height:12.39px;"><span>0,00</span></div>
<div class="c" style="left:737.00px;top:377.24px;width:49.00px;height:12.39px;"><span>1 491,78</span></div>
<div class="c" style="left:787.00px;top:377.24px;width:44.00px;height:12.39px;"><span>0,00</span></div>
<div class="c" style="left:832.00px;top:377.24px;width:44.00px;height:12.39px;"><span>0,00</span></div>
<div class="c" style="left:877.00px;top:377.24px;width:45.00px;height:12.39px;"><span>0,00</span></div>
<div class="c" style="left:923.00px;top:377.24px;width:44.00px;height:12.39px;"><span>0,00</span></div>
<div class="c" style="left:968.00px;top:377.24px;width:45.00px;height:12.39px;"><span>0,00</span></div>
<div class="c" style="left:1014.00px;top:377.24px;width:46.00px;height:12.39px;"><span>15 302,12</span></div>
<div class="c" style="left:1061.00px;top:377.24px;width:45.00px;height:12.39px;"><span>0,00</span></div>
<div class="c" style="left:1107.00px;top:377.24px;width:45.00px;height:12.39px;"><span>14 007,61</span></div>
<div class="c" style="left:1153.00px;top:377.24px;width:46.00px;height:12.39px;"><span>0,00</span></div>
<div class="c" style="left:1200.00px;top:377.24px;width:45.00px;height:12.39px;"><span>21 269,86</span></div>
<div class="c" style="left:1246.00px;top:377.24px;width:45.00px;height:12.39px;"><span>0,00</span></div>
<div class="c" style="left:1292.00px;top:377.24px;width:46.00px;height:12.39px;"><span>0,28</span></div>
<div class="c" style="left:210.00px;top:389.63px;width:44.00px;height:12.39px;"><span>0,00</span></div>
<div class="c" style="left:255.00px;top:389.63px;width:46.00px;height:12.39px;"><span>0,00</span></div>
<div class="c" style="left:302.00px;top:389.63px;width:45.00px;height:12.39px;"><span>0,00</span></div>
<div class="c" style="left:348.00px;top:389.63px;width:45.00px;height:12.39px;"><span>0,00</span></div>
<div class="c" style="left:394.00px;top:389.63px;width:50.00px;height:12.39px;"><span>0,00</span></div>
<div class="c" style="left:445.00px;top:389.63px;width:49.00px;height:12.39px;"><span>0,00</span></div>
<div class="c" style="left:495.00px;top:389.63px;width:50.00px;height:12.39px;"><span>0,00</span></div>
<div class="c" style="left:546.00px;top:389.63px;width:49.00px;height:12.39px;"><span>0,00</span></div>
<div class="c" style="left:596.00px;top:389.63px;width:45.00px;height:12.39px;"><span>0,00</span></div>
<div class="c" style="left:642.00px;top:389.63px;width:44.00px;height:12.39px;"><span>0,00</span></div>
<div class="c" style="left:687.00px;top:389.63px;width:49.00px;height:12.39px;"><span>0,00</span></div>
<div class="c" style="left:737.00px;top:389.63px;width:49.00px;height:12.39px;"><span>0,00</span></div>
<div class="c" style="left:787.00px;top:389.63px;width:44.00px;height:12.39px;"><span>0,00</span></div>
<div class="c" style="left:832.00px;top:389.63px;width:44.00px;height:12.39px;"><span>0,00</span></div>
<div class="c" style="left:877.00px;top:389.63px;width:45.00px;height:12.39px;"><span>0,00</span></div>
<div class="c" style="left:923.00px;top:389.63px;width:44.00px;height:12.39px;"><span>0,00</span></div>
<div class="c" style="left:968.00px;top:389.63px;width:45.00px;height:12.39px;"><span>0,00</span></div>
<div class="c" style="left:1014.00px;top:389.63px;width:46.00px;height:12.39px;"><span>0,00</span></div>
<div class="c" style="left:1061.00px;top:389.63px;width:45.00px;height:12.39px;"><span>0,00</span></div>
<div class="c" style="left:1107.00px;top:389.63px;width:45.00px;height:12.39px;"><span>0,00</span></div>
<div class="c" style="left:1153.00px;top:389.63px;width:46.00px;height:12.39px;"><span>0,00</span></div>
<div class="c" style="left:1200.00px;top:389.63px;width:45.00px;height:12.39px;"><span>0,00</span></div>
<div class="c" style="left:1246.00px;top:389.63px;width:45.00px;height:12.39px;"><span>0,00</span></div>
<div class="c" style="left:1292.00px;top:389.63px;width:46.00px;height:12.39px;"><span>0,00</span></div>
<div class="c" style="left:210.00px;top:402.02px;width:44.00px;height:12.39px;"><span>0,00</span></div>
<div class="c" style="left:255.00px;top:402.02px;width:46.00px;height:12.39px;"><span>0,00</span></div>
<div class="c" style="left:302.00px;top:402.02px;width:45.00px;height:12.39px;"><span>0,00</span></div>
<div class="c" style="left:348.00px;top:402.02px;width:45.00px;height:12.39px;"><span>0,00</span></div>
<div class="c" style="left:394.00px;top:402.02px;width:50.00px;height:12.39px;"><span>0,00</span></div>
<div class="c" style="left:445.00px;top:402.02px;width:49.00px;height:12.39px;"><span>0,00</span></div>
<div class="c" style="left:495.00px;top:402.02px;width:50.00px;height:12.39px;"><span>0,00</span></div>
<div class="c" style="left:546.00px;top:402.02px;width:49.00px;height:12.39px;"><span>0,00</span></div>
<div class="c" style="left:596.00px;top:402.02px;width:45.00px;height:12.39px;"><span>0,00</span></div>
<div class="c" style="left:642.00px;top:402.02px;width:44.00px;height:12.39px;"><span>0,00</span></div>
<div class="c" style="left:687.00px;top:402.02px;width:49.00px;height:12.39px;"><span>0,00</span></div>
<div class="c" style="left:737.00px;top:402.02px;width:49.00px;height:12.39px;"><span>0,00</span></div>
<div class="c" style="left:787.00px;top:402.02px;width:44.00px;height:12.39px;"><span>0,00</span></div>
<div class="c" style="left:832.00px;top:402.02px;width:44.00px;height:12.39px;"><span>0,00</span></div>
<div class="c" style="left:877.00px;top:402.02px;width:45.00px;height:12.39px;"><span>0,00</span></div>
<div class="c" style="left:923.00px;top:402.02px;width:44.00px;height:12.39px;"><span>0,00</span></div>
<div class="c" style="left:968.00px;top:402.02px;width:45.00px;height:12.39px;"><span>0,00</span></div>
<div class="c" style="left:1014.00px;top:402.02px;width:46.00px;height:12.39px;"><span>0,00</span></div>
<div class="c" style="left:1061.00px;top:402.02px;width:45.00px;height:12.39px;"><span>0,00</span></div>
<div class="c" style="left:1107.00px;top:402.02px;width:45.00px;height:12.39px;"><span>0,00</span></div>
<div class="c" style="left:1153.00px;top:402.02px;width:46.00px;height:12.39px;"><span>0,00</span></div>
<div class="c" style="left:1200.00px;top:402.02px;width:45.00px;height:12.39px;"><span>0,00</span></div>
<div class="c" style="left:1246.00px;top:402.02px;width:45.00px;height:12.39px;"><span>0,00</span></div>
<div class="c" style="left:1292.00px;top:402.02px;width:46.00px;height:12.39px;"><span>0,00</span></div>
<div class="c" style="left:210.00px;top:414.41px;width:44.00px;height:12.39px;"><span>0,00</span></div>
<div class="c" style="left:255.00px;top:414.41px;width:46.00px;height:12.39px;"><span>0,00</span></div>
<div class="c" style="left:302.00px;top:414.41px;width:45.00px;height:12.39px;"><span>0,00</span></div>
<div class="c" style="left:348.00px;top:414.41px;width:45.00px;height:12.39px;"><span>0,00</span></div>
<div class="c" style="left:394.00px;top:414.41px;width:50.00px;height:12.39px;"><span>0,00</span></div>
<div class="c" style="left:445.00px;top:414.41px;width:49.00px;height:12.39px;"><span>0,00</span></div>
<div class="c" style="left:495.00px;top:414.41px;width:50.00px;height:12.39px;"><span>0,00</span></div>
<div class="c" style="left:546.00px;top:414.41px;width:49.00px;height:12.39px;"><span>0,00</span></div>
<div class="c" style="left:596.00px;top:414.41px;width:45.00px;height:12.39px;"><span>0,00</span></div>
<div class="c" style="left:642.00px;top:414.41px;width:44.00px;height:12.39px;"><span>0,00</span></div>
<div class="c" style="left:687.00px;top:414.41px;width:49.00px;height:12.39px;"><span>0,00</span></div>
<div class="c" style="left:737.00px;top:414.41px;width:49.00px;height:12.39px;"><span>0,00</span></div>
<div class="c" style="left:787.00px;top:414.41px;width:44.00px;height:12.39px;"><span>0,00</span></div>
<div class="c" style="left:832.00px;top:414.41px;width:44.00px;height:12.39px;"><span>0,00</span></div>
<div class="c" style="left:877.00px;top:414.41px;width:45.00px;height:12.39px;"><span>0,00</span></div>
<div class="c" style="left:923.00px;top:414.41px;width:44.00px;height:12.39px;"><span>0,00</span></div>
<div class="c" style="left:968.00px;top:414.41px;width:45.00px;height:12.39px;"><span>0,00</span></div>
<div class="c" style="left:1014.00px;top:414.41px;width:46.00px;height:12.39px;"><span>0,00</span></div>
<div class="c" style="left:1061.00px;top:414.41px;width:45.00px;height:12.39px;"><span>0,00</span></div>
<div class="c" style="left:1107.00px;top:414.41px;width:45.00px;height:12.39px;"><span>0,00</span></div>
<div class="c" style="left:1153.00px;top:414.41px;width:46.00px;height:12.39px;"><span>0,00</span></div>
<div class="c" style="left:1200.00px;top:414.41px;width:45.00px;height:12.39px;"><span>0,00</span></div>
<div class="c" style="left:1246.00px;top:414.41px;width:45.00px;height:12.39px;"><span>0,00</span></div>
<div class="c" style="left:1292.00px;top:414.41px;width:46.00px;height:12.39px;"><span>0,00</span></div>
<div class="c" style="left:210.00px;top:426.80px;width:44.00px;height:12.39px;"><span>0,00</span></div>
<div class="c" style="left:255.00px;top:426.80px;width:46.00px;height:12.39px;"><span>0,00</span></div>
<div class="c" style="left:302.00px;top:426.80px;width:45.00px;height:12.39px;"><span>0,00</span></div>
<div class="c" style="left:348.00px;top:426.80px;width:45.00px;height:12.39px;"><span>0,00</span></div>
<div class="c" style="left:394.00px;top:426.80px;width:50.00px;height:12.39px;"><span>0,00</span></div>
<div class="c" style="left:445.00px;top:426.80px;width:49.00px;height:12.39px;"><span>0,00</span></div>
<div class="c" style="left:495.00px;top:426.80px;width:50.00px;height:12.39px;"><span>0,00</span></div>
<div class="c" style="left:546.00px;top:426.80px;width:49.00px;height:12.39px;"><span>0,00</span></div>
<div class="c" style="left:596.00px;top:426.80px;width:45.00px;height:12.39px;"><span>0,00</span></div>
<div class="c" style="left:642.00px;top:426.80px;width:44.00px;height:12.39px;"><span>0,00</span></div>
<div class="c" style="left:687.00px;top:426.80px;width:49.00px;height:12.39px;"><span>0,00</span></div>
<div class="c" style="left:737.00px;top:426.80px;width:49.00px;height:12.39px;"><span>0,00</span></div>
<div class="c" style="left:787.00px;top:426.80px;width:44.00px;height:12.39px;"><span>0,00</span></div>
<div class="c" style="left:832.00px;top:426.80px;width:44.00px;height:12.39px;"><span>0,00</span></div>
<div class="c" style="left:877.00px;top:426.80px;width:45.00px;height:12.39px;"><span>0,00</span></div>
<div class="c" style="left:923.00px;top:426.80px;width:44.00px;height:12.39px;"><span>0,00</span></div>
<div class="c" style="left:968.00px;top:426.80px;width:45.00px;height:12.39px;"><span>0,00</span></div>
<div class="c" style="left:1014.00px;top:426.80px;width:46.00px;height:12.39px;"><span>0,00</span></div>
<div class="c" style="left:1061.00px;top:426.80px;width:45.00px;height:12.39px;"><span>0,00</span></div>
<div class="c" style="left:1107.00px;top:426.80px;width:45.00px;height:12.39px;"><span>0,00</span></div>
<div class="c" style="left:1153.00px;top:426.80px;width:46.00px;height:12.39px;"><span>0,00</span></div>
<div class="c" style="left:1200.00px;top:426.80px;width:45.00px;height:12.39px;"><span>0,00</span></div>
<div class="c" style="left:1246.00px;top:426.80px;width:45.00px;height:12.39px;"><span>0,00</span></div>
<div class="c" style="left:1292.00px;top:426.80px;width:46.00px;height:12.39px;"><span>0,00</span></div>
<div class="c l" style="left:95.00px;top:463.97px;width:110.00px;height:12.39px;"><span>Аренда офиса</span></div>
<div class="c" style="left:210.00px;top:463.97px;width:44.00px;height:12.39px;"><span>-85 000,00</span></div>
<div class="c" style="left:255.00px;top:463.97px;width:46.00px;height:12.39px;"><span>-85 000,00</span></div>
<div class="c" style="left:302.00px;top:463.97px;width:45.00px;height:12.39px;"><span>0,00</span></div>
<div class="c" style="left:348.00px;top:463.97px;width:45.00px;height:12.39px;"><span>-85 000,00</span></div>
<div class="c" style="left:394.00px;top:463.97px;width:50.00px;height:12.39px;"><span>-85 000,00</span></div>
<div class="c" style="left:445.00px;top:463.97px;width:49.00px;height:12.39px;"><span>-85 000,00</span></div>
<div class="c" style="left:495.00px;top:463.97px;width:50.00px;height:12.39px;"><span>-85 000,00</span></div>
<div class="c" style="left:546.00px;top:463.97px;width:49.00px;height:12.39px;"><span>-85 000,00</span></div>
<div class="c" style="left:596.00px;top:463.97px;width:45.00px;height:12.39px;"><span>0,00</span></div>
<div class="c" style="left:642.00px;top:463.97px;width:44.00px;height:12.39px;"><span>0,00</span></div>
<div class="c" style="left:687.00px;top:463.97px;width:49.00px;height:12.39px;"><span>-85 000,00</span></div>
<div class="c" style="left:737.00px;top:463.97px;width:49.00px;height:12.39px;"><span>-85 000,00</span></div>
<div class="c" style="left:787.00px;top:463.97px;width:44.00px;height:12.39px;"><span>0,00</span></div>
<div class="c" style="left:832.00px;top:463.97px;width:44.00px;height:12.39px;"><span>0,00</span></div>
<div class="c" style="left:877.00px;top:463.97px;width:45.00px;height:12.39px;"><span>0,00</span></div>
<div class="c" style="left:923.00px;top:463.97px;width:44.00px;height:12.39px;"><span>0,00</span></div>
<div class="c" style="left:968.00px;top:463.97px;width:45.00px;height:12.39px;"><span>-85 000,00</span></div>
<div class="c" style="left:1014.00px;top:463.97px;width:46.00px;height:12.39px;"><span>-85 000,00</span></div>
<div class="c" style="left:1061.00px;top:463.97px;width:45.00px;height:12.39px;"><span>0,00</span></div>
<div class="c" style="left:1107.00px;top:463.97px;width:45.00px;height:12.39px;"><span>-75 000,00</span></div>
<div class="c" style="left:1153.00px;top:463.97px;width:46.00px;height:12.39px;"><span>0,00</span></div>
<div class="c" style="left:1200.00px;top:463.97px;width:45.00px;height:12.39px;"><span>-75 000,00</span></div>
<div class="c" style="left:1246.00px;top:463.97px;width:45.00px;height:12.39px;"><span>0,00</span></div>
<div class="c" style="left:1292.00px;top:463.97px;width:46.00px;height:12.39px;"><span>-75 000,00</span></div>
<div class="c l" style="left:95.00px;top:476.36px;width:110.00px;height:12.39px;"><span>Банковское обслуживание</span></div>
<div class="c" style="left:210.00px;top:476.36px;width:44.00px;height:12.39px;"><span>-40 000,00</span></div>
<div class="c" style="left:255.00px;top:476.36px;width:46.00px;height:12.39px;"><span>-39 478,63</span></div>
<div class="c" style="left:302.00px;top:476.36px;width:45.00px;height:12.39px;"><span>-15 000,00</span></div>
<div class="c" style="left:348.00px;top:476.36px;width:45.00px;height:12.39px;"><span>-20 066,25</span></div>
<div class="c" style="left:394.00px;top:476.36px;width:50.00px;height:12.39px;"><span>-45 000,00</span></div>
<div class="c" style="left:445.00px;top:476.36px;width:49.00px;height:12.39px;"><span>-21 719,50</span></div>
<div class="c" style="left:495.00px;top:476.36px;width:50.00px;height:12.39px;"><span>-35 000,00</span></div>
<div class="c" style="left:546.00px;top:476.36px;width:49.00px;height:12.39px;"><span>-16 631,32</span></div>
<div class="c" style="left:596.00px;top:476.36px;width:45.00px;height:12.39px;"><span>-10 000,00</span></div>
<div class="c" style="left:642.00px;top:476.36px;width:44.00px;height:12.39px;"><span>-18 290,00</span></div>
<div class="c" style="left:687.00px;top:476.36px;width:49.00px;height:12.39px;"><span>0,00</span></div>
<div class="c" style="left:737.00px;top:476.36px;width:49.00px;height:12.39px;"><span>0,00</span></div>
<div class="c" style="left:787.00px;top:476.36px;width:44.00px;height:12.39px;"><span>-10 000,00</span></div>
<div class="c" style="left:832.00px;top:476.36px;width:44.00px;height:12.39px;"><span>-2 754,25</span></div>
<div class="c" style="left:877.00px;top:476.36px;width:45.00px;height:12.39px;"><span>0,00</span></div>
<div class="c" style="left:923.00px;top:476.36px;width:44.00px;height:12.39px;"><span>-5 692,00</span></div>
<div class="c" style="left:968.00px;top:476.36px;width:45.00px;height:12.39px;"><span>-20 000,00</span></div>
<div class="c" style="left:1014.00px;top:476.36px;width:46.00px;height:12.39px;"><span>-26 736,25</span></div>
<div class="c" style="left:1061.00px;top:476.36px;width:45.00px;height:12.39px;"><span>-10 000,00</span></div>
<div class="c" style="left:1107.00px;top:476.36px;width:45.00px;height:12.39px;"><span>-37 634,89</span></div>
<div class="c" style="left:1153.00px;top:476.36px;width:46.00px;height:12.39px;"><span>-20 000,00</span></div>
<div class="c" style="left:1200.00px;top:476.36px;width:45.00px;height:12.39px;"><span>-35 175,57</span></div>
<div class="c" style="left:1246.00px;top:476.36px;width:45.00px;height:12.39px;"><span>-10 000,00</span></div>
<div class="c" style="left:1292.00px;top:476.36px;width:46.00px;height:12.39px;"><span>-4 563,09</span></div>
<div class="c l" style="left:95.00px;top:488.75px;width:110.00px;height:12.39px;"><span>ИТ оборудование и ПО</span></div>
<div class="c" style="left:210.00px;top:488.75px;width:44.00px;height:12.39px;"><span>-84 690,00</span></div>
<div class="c" style="left:255.00px;top:488.75px;width:46.00px;height:12.39px;"><span>-135 072,06</span></div>
<div class="c" style="left:302.00px;top:488.75px;width:45.00px;height:12.39px;"><span>0,00</span></div>
<div class="c" style="left:348.00px;top:488.75px;width:45.00px;height:12.39px;"><span>-86 880,44</span></div>
<div class="c" style="left:394.00px;top:488.75px;width:50.00px;height:12.39px;"><span>-11 200,00</span></div>
<div class="c" style="left:445.00px;top:488.75px;width:49.00px;height:12.39px;"><span>-42 800,67</span></div>
<div class="c" style="left:495.00px;top:488.75px;width:50.00px;height:12.39px;"><span>-22 500,00</span></div>
<div class="c" style="left:546.00px;top:488.75px;width:49.00px;height:12.39px;"><span>-36 255,81</span></div>
<div class="c" style="left:596.00px;top:488.75px;width:45.00px;height:12.39px;"><span>0,00</span></div>
<div class="c" style="left:642.00px;top:488.75px;width:44.00px;height:12.39px;"><span>-4 820,00</span></div>
<div class="c" style="left:687.00px;top:488.75px;width:49.00px;height:12.39px;"><span>0,00</span></div>
<div class="c" style="left:737.00px;top:488.75px;width:49.00px;height:12.39px;"><span>-4 371,82</span></div>
<div class="c" style="left:787.00px;top:488.75px;width:44.00px;height:12.39px;"><span>-20 000,00</span></div>
<div class="c" style="left:832.00px;top:488.75px;width:44.00px;height:12.39px;"><span>-23 184,35</span></div>
<div class="c" style="left:877.00px;top:488.75px;width:45.00px;height:12.39px;"><span>0,00</span></div>
<div class="c" style="left:923.00px;top:488.75px;width:44.00px;height:12.39px;"><span>-2 339,00</span></div>
<div class="c" style="left:968.00px;top:488.75px;width:45.00px;height:12.39px;"><span>-20 000,00</span></div>
<div class="c" style="left:1014.00px;top:488.75px;width:46.00px;height:12.39px;"><span>-34 715,17</span></div>
<div class="c" style="left:1061.00px;top:488.75px;width:45.00px;height:12.39px;"><span>0,00</span></div>
<div class="c" style="left:1107.00px;top:488.75px;width:45.00px;height:12.39px;"><span>-21 902,90</span></div>
<div class="c" style="left:1153.00px;top:488.75px;width:46.00px;height:12.39px;"><span>-45 000,00</span></div>
<div class="c" style="left:1200.00px;top:488.75px;width:45.00px;height:12.39px;"><span>-75 235,26</span></div>
<div class="c" style="left:1246.00px;top:488.75px;width:45.00px;height:12.39px;"><span>-17 000,00</span></div>
<div class="c" style="left:1292.00px;top:488.75px;width:46.00px;height:12.39px;"><span>-23 021,92</span></div>
<div class="c l" style="left:95.00px;top:501.14px;width:110.00px;height:12.39px;"><span>Командировочные расходы</span></div>
<div class="c" style="left:210.00px;top:501.14px;width:44.00px;height:12.39px;"><span>0,00</span></div>
<div class="c" style="left:255.00px;top:501.14px;width:46.00px;height:12.39px;"><span>-45 543,33</span></div>
<div class="c" style="left:302.00px;top:501.14px;width:45.00px;height:12.39px;"><span>0,00</span></div>
<div class="c" style="left:348.00px;top:501.14px;width:45.00px;height:12.39px;"><span>0,00</span></div>
<div class="c" style="left:394.00px;top:501.14px;width:50.00px;height:12.39px;"><span>0,00</span></div>
<div class="c" style="left:445.00px;top:501.14px;width:49.00px;height:12.39px;"><span>-5 432,50</span></div>
<div class="c" style="left:495.00px;top:501.14px;width:50.00px;height:12.39px;"><span>0,00</span></div>
<div class="c" style="left:546.00px;top:501.14px;width:49.00px;height:12.39px;"><span>0,00</span></div>
<div class="c" style="left:596.00px;top:501.14px;width:45.00px;height:12.39px;"><span>0,00</span></div>
<div class="c" style="left:642.00px;top:501.14px;width:44.00px;height:12.39px;"><span>0,00</span></div>
<div class="c" style="left:687.00px;top:501.14px;width:49.00px;height:12.39px;"><span>0,00</span></div>
<div class="c" style="left:737.00px;top:501.14px;width:49.00px;height:12.39px;"><span>0,00</span></div>
<div class="c" style="left:787.00px;top:501.14px;width:44.00px;height:12.39px;"><span>0,00</span></div>
<div class="c" style="left:832.00px;top:501.14px;width:44.00px;height:12.39px;"><span>0,00</span></div>
<div class="c" style="left:877.00px;top:501.14px;width:45.00px;height:12.39px;"><span>0,00</span></div>
<div class="c" style="left:923.00px;top:501.14px;width:44.00px;height:12.39px;"><span>0,00</span></div>
<div class="c" style="left:968.00px;top:501.14px;width:45.00px;height:12.39px;"><span>0,00</span></div>
<div class="c" style="left:1014.00px;top:501.14px;width:46.00px;height:12.39px;"><span>0,00</span></div>
<div class="c" style="left:1061.00px;top:501.14px;width:45.00px;height:12.39px;"><span>0,00</span></div>
<div class="c" style="left:1107.00px;top:501.14px;width:45.00px;height:12.39px;"><span>-30 900,80</span></div>
<div class="c" style="left:1153.00px;top:501.14px;width:46.00px;height:12.39px;"><span>0,00</span></div>
<div class="c" style="left:1200.00px;top:501.14px;width:45.00px;height:12.39px;"><span>-8 367,00</span></div>
<div class="c" style="left:1246.00px;top:501.14px;width:45.00px;height:12.39px;"><span>0,00</span></div>
<div class="c" style="left:1292.00px;top:501.14px;width:46.00px;height:12.39px;"><span>0,00</span></div>
<div class="c l" style="left:95.00px;top:513.53px;width:110.00px;height:12.39px;"><span>Консультационные услуги</span></div>
<div class="c" style="left:210.00px;top:513.53px;width:44.00px;height:12.39px;"><span>0,00</span></div>
<div class="c" style="left:255.00px;top:513.53px;width:46.00px;height:12.39px;"><span>0,00</span></div>
<div class="c" style="left:302.00px;top:513.53px;width:45.00px;height:12.39px;"><span>0,00</span></div>
<div class="c" style="left:348.00px;top:513.53px;width:45.00px;height:12.39px;"><span>-8 855,00</span></div>
<div class="c" style="left:394.00px;top:513.53px;width:50.00px;height:12.39px;"><span>0,00</span></div>
<div class="c" style="left:445.00px;top:513.53px;width:49.00px;height:12.39px;"><span>0,00</span></div>
<div class="c" style="left:495.00px;top:513.53px;width:50.00px;height:12.39px;"><span>0,00</span></div>
<div class="c" style="left:546.00px;top:513.53px;width:49.00px;height:12.39px;"><span>0,00</span></div>
<div class="c" style="left:596.00px;top:513.53px;width:45.00px;height:12.39px;"><span>-250 000,00</span></div>
<div class="c" style="left:642.00px;top:513.53px;width:44.00px;height:12.39px;"><span>-250 000,00</span></div>
<div class="c" style="left:687.00px;top:513.53px;width:49.00px;height:12.39px;"><span>0,00</span></div>
<div class="c" style="left:737.00px;top:513.53px;width:49.00px;height:12.39px;"><span>0,00</span></div>
<div class="c" style="left:787.00px;top:513.53px;width:44.00px;height:12.39px;"><span>0,00</span></div>
<div class="c" style="left:832.00px;top:513.53px;width:44.00px;height:12.39px;"><span>0,00</span></div>
<div class="c" style="left:877.00px;top:513.53px;width:45.00px;height:12.39px;"><span>0,00</span></div>
<div class="c" style="left:923.00px;top:513.53px;width:44.00px;height:12.39px;"><span>0,00</span></div>
<div class="c" style="left:968.00px;top:513.53px;width:45.00px;height:12.39px;"><span>-250 000,00</span></div>
<div class="c" style="left:1014.00px;top:513.53px;width:46.00px;height:12.39px;"><span>-250 000,00</span></div>
<div class="c" style="left:1061.00px;top:513.53px;width:45.00px;height:12.39px;"><span>0,00</span></div>
<div class="c" style="left:1107.00px;top:513.53px;width:45.00px;height:12.39px;"><span>-200,00</span></div>
<div class="c" style="left:1153.00px;top:513.53px;width:46.00px;height:12.39px;"><span>0,00</span></div>
<div class="c" style="left:1200.00px;top:513.53px;width:45.00px;height:12.39px;"><span>0,00</span></div>
<div class="c" style="left:1246.00px;top:513.53px;width:45.00px;height:12.39px;"><span>0,00</span></div>
<div class="c" style="left:1292.00px;top:513.53px;width:46.00px;height:12.39px;"><span>0,00</span></div>
<div class="c l" style="left:95.00px;top:525.92px;width:110.00px;height:12.39px;"><span>Корпоративные мероприятия</span></div>
<div class="c" style="left:210.00px;top:525.92px;width:44.00px;height:12.39px;"><span>-15 000,00</span></div>
<div class="c" style="left:255.00px;top:525.92px;width:46.00px;height:12.39px;"><span>-46 673,67</span></div>
<div class="c" style="left:302.00px;top:525.92px;width:45.00px;height:12.39px;"><span>0,00</span></div>
<div class="c" style="left:348.00px;top:525.92px;width:45.00px;height:12.39px;"><span>-10 500,00</span></div>
<div class="c" style="left:394.00px;top:525.92px;width:50.00px;height:12.39px;"><span>-3 000,00</span></div>
<div class="c" style="left:445.00px;top:525.92px;width:49.00px;height:12.39px;"><span>-6 300,00</span></div>
<div class="c" style="left:495.00px;top:525.92px;width:50.00px;height:12.39px;"><span>-3 000,00</span></div>
<div class="c" style="left:546.00px;top:525.92px;width:49.00px;height:12.39px;"><span>-3 600,00</span></div>
<div class="c" style="left:596.00px;top:525.92px;width:45.00px;height:12.39px;"><span>0,00</span></div>
<div class="c" style="left:642.00px;top:525.92px;width:44.00px;height:12.39px;"><span>-3 300,00</span></div>
<div class="c" style="left:687.00px;top:525.92px;width:49.00px;height:12.39px;"><span>0,00</span></div>
<div class="c" style="left:737.00px;top:525.92px;width:49.00px;height:12.39px;"><span>0,00</span></div>
<div class="c" style="left:787.00px;top:525.92px;width:44.00px;height:12.39px;"><span>0,00</span></div>
<div class="c" style="left:832.00px;top:525.92px;width:44.00px;height:12.39px;"><span>-900,00</span></div>
<div class="c" style="left:877.00px;top:525.92px;width:45.00px;height:12.39px;"><span>0,00</span></div>
<div class="c" style="left:923.00px;top:525.92px;width:44.00px;height:12.39px;"><span>0,00</span></div>
<div class="c" style="left:968.00px;top:525.92px;width:45.00px;height:12.39px;"><span>0,00</span></div>
<div class="c" style="left:1014.00px;top:525.92px;width:46.00px;height:12.39px;"><span>-4 200,00</span></div>
<div class="c" style="left:1061.00px;top:525.92px;width:45.00px;height:12.39px;"><span>0,00</span></div>
<div class="c" style="left:1107.00px;top:525.92px;width:45.00px;height:12.39px;"><span>-6 900,00</span></div>
<div class="c" style="left:1153.00px;top:525.92px;width:46.00px;height:12.39px;"><span>0,00</span></div>
<div class="c" style="left:1200.00px;top:525.92px;width:45.00px;height:12.39px;"><span>-8 400,00</span></div>
<div class="c" style="left:1246.00px;top:525.92px;width:45.00px;height:12.39px;"><span>0,00</span></div>
<div class="c" style="left:1292.00px;top:525.92px;width:46.00px;height:12.39px;"><span>0,00</span></div>
<div class="c l" style="left:95.00px;top:538.31px;width:110.00px;height:12.39px;"><span>Маркетинговые расходы</span></div>
<div class="c" style="left:210.00px;top:538.31px;width:44.00px;height:12.39px;"><span>-89 508,00</span></div>
<div class="c" style="left:255.00px;top:538.31px;width:46.00px;height:12.39px;"><span>-518 952,00</span></div>
<div class="c" style="left:302.00px;top:538.31px;width:45.00px;height:12.39px;"><span>0,00</span></div>
<div class="c" style="left:348.00px;top:538.31px;width:45.00px;height:12.39px;"><span>-139 801,00</span></div>
<div class="c" style="left:394.00px;top:538.31px;width:50.00px;height:12.39px;"><span>-27 000,00</span></div>
<div class="c" style="left:445.00px;top:538.31px;width:49.00px;height:12.39px;"><span>-41 130,00</span></div>
<div class="c" style="left:495.00px;top:538.31px;width:50.00px;height:12.39px;"><span>0,00</span></div>
<div class="c" style="left:546.00px;top:538.31px;width:49.00px;height:12.39px;"><span>-183 063,00</span></div>
<div class="c" style="left:596.00px;top:538.31px;width:45.00px;height:12.39px;"><span>-60 000,00</span></div>
<div class="c" style="left:642.00px;top:538.31px;width:44.00px;height:12.39px;"><span>0,00</span></div>
<div class="c" style="left:687.00px;top:538.31px;width:49.00px;height:12.39px;"><span>0,00</span></div>
<div class="c" style="left:737.00px;top:538.31px;width:49.00px;height:12.39px;"><span>0,00</span></div>
<div class="c" style="left:787.00px;top:538.31px;width:44.00px;height:12.39px;"><span>0,00</span></div>
<div class="c" style="left:832.00px;top:538.31px;width:44.00px;height:12.39px;"><span>-4 900,00</span></div>
<div class="c" style="left:877.00px;top:538.31px;width:45.00px;height:12.39px;"><span>0,00</span></div>
<div class="c" style="left:923.00px;top:538.31px;width:44.00px;height:12.39px;"><span>0,00</span></div>
<div class="c" style="left:968.00px;top:538.31px;width:45.00px;height:12.39px;"><span>-60 000,00</span></div>
<div class="c" style="left:1014.00px;top:538.31px;width:46.00px;height:12.39px;"><span>-4 900,00</span></div>
<div class="c" style="left:1061.00px;top:538.31px;width:45.00px;height:12.39px;"><span>-12 000,00</span></div>
<div class="c" style="left:1107.00px;top:538.31px;width:45.00px;height:12.39px;"><span>-101 927,50</span></div>
<div class="c" style="left:1153.00px;top:538.31px;width:46.00px;height:12.39px;"><span>-23 000,00</span></div>
<div class="c" style="left:1200.00px;top:538.31px;width:45.00px;height:12.39px;"><span>-134 910,77</span></div>
<div class="c" style="left:1246.00px;top:538.31px;width:45.00px;height:12.39px;"><span>-20 000,00</span></div>
<div class="c" style="left:1292.00px;top:538.31px;width:46.00px;height:12.39px;"><span>-240 000,00</span></div>
<div class="c l" style="left:95.00px;top:550.70px;width:110.00px;height:12.39px;"><span>Онлайн-школа расходы</span></div>
<div class="c" style="left:210.00px;top:550.70px;width:44.00px;height:12.39px;"><span>0,00</span></div>
<div class="c" style="left:255.00px;top:550.70px;width:46.00px;height:12.39px;"><span>0,00</span></div>
<div class="c" style="left:302.00px;top:550.70px;width:45.00px;height:12.39px;"><span>0,00</span></div>
<div class="c" style="left:348.00px;top:550.70px;width:45.00px;height:12.39px;"><span>-53 880,00</span></div>
<div class="c" style="left:394.00px;top:550.70px;width:50.00px;height:12.39px;"><span>0,00</span></div>
<div class="c" style="left:445.00px;top:550.70px;width:49.00px;height:12.39px;"><span>-32 999,00</span></div>
<div class="c" style="left:495.00px;top:550.70px;width:50.00px;height:12.39px;"><span>0,00</span></div>
<div class="c" style="left:546.00px;top:550.70px;width:49.00px;height:12.39px;"><span>-10 000,00</span></div>
<div class="c" style="left:596.00px;top:550.70px;width:45.00px;height:12.39px;"><span>0,00</span></div>
<div class="c" style="left:642.00px;top:550.70px;width:44.00px;height:12.39px;"><span>0,00</span></div>
<div class="c" style="left:687.00px;top:550.70px;width:49.00px;height:12.39px;"><span>0,00</span></div>
<div class="c" style="left:737.00px;top:550.70px;width:49.00px;height:12.39px;"><span>0,00</span></div>
<div class="c" style="left:787.00px;top:550.70px;width:44.00px;height:12.39px;"><span>0,00</span></div>
<div class="c" style="left:832.00px;top:550.70px;width:44.00px;height:12.39px;"><span>0,00</span></div>
<div class="c" style="left:877.00px;top:550.70px;width:45.00px;height:12.39px;"><span>0,00</span></div>
<div class="c" style="left:923.00px;top:550.70px;width:44.00px;height:12.39px;"><span>-30 000,00</span></div>
<div class="c" style="left:968.00px;top:550.70px;width:45.00px;height:12.39px;"><span>0,00</span></div>
<div class="c" style="left:1014.00px;top:550.70px;width:46.00px;height:12.39px;"><span>-30 000,00</span></div>
<div class="c" style="left:1061.00px;top:550.70px;width:45.00px;height:12.39px;"><span>0,00</span></div>
<div class="c" style="left:1107.00px;top:550.70px;width:45.00px;height:12.39px;"><span>0,00</span></div>
<div class="c" style="left:1153.00px;top:550.70px;width:46.00px;height:12.39px;"><span>0,00</span></div>
<div class="c" style="left:1200.00px;top:550.70px;width:45.00px;height:12.39px;"><span>-24 008,00</span></div>
<div class="c" style="left:1246.00px;top:550.70px;width:45.00px;height:12.39px;"><span>0,00</span></div>
<div class="c" style="left:1292.00px;top:550.70px;width:46.00px;height:12.39px;"><span>0,00</span></div>
<div class="c l" style="left:95.00px;top:563.09px;width:110.00px;height:12.39px;"><span>Офисные расходы</span></div>
<div class="c" style="left:210.00px;top:563.09px;width:44.00px;height:12.39px;"><span>-9 000,00</span></div>
<div class="c" style="left:255.00px;top:563.09px;width:46.00px;height:12.39px;"><span>-13 836,06</span></div>
<div class="c" style="left:302.00px;top:563.09px;width:45.00px;height:12.39px;"><span>-6 000,00</span></div>
<div class="c" style="left:348.00px;top:563.09px;width:45.00px;height:12.39px;"><span>-31 644,58</span></div>
<div class="c" style="left:394.00px;top:563.09px;width:50.00px;height:12.39px;"><span>-15 500,00</span></div>
<div class="c" style="left:445.00px;top:563.09px;width:49.00px;height:12.39px;"><span>-22 431,40</span></div>
<div class="c" style="left:495.00px;top:563.09px;width:50.00px;height:12.39px;"><span>-17 200,00</span></div>
<div class="c" style="left:546.00px;top:563.09px;width:49.00px;height:12.39px;"><span>-18 998,16</span></div>
<div class="c" style="left:596.00px;top:563.09px;width:45.00px;height:12.39px;"><span>-4 000,00</span></div>
<div class="c" style="left:642.00px;top:563.09px;width:44.00px;height:12.39px;"><span>-10 379,13</span></div>
<div class="c" style="left:687.00px;top:563.09px;width:49.00px;height:12.39px;"><span>-6 500,00</span></div>
<div class="c" style="left:737.00px;top:563.09px;width:49.00px;height:12.39px;"><span>-5 983,21</span></div>
<div class="c" style="left:787.00px;top:563.09px;width:44.00px;height:12.39px;"><span>-3 500,00</span></div>
<div class="c" style="left:832.00px;top:563.09px;width:44.00px;height:12.39px;"><span>-11 487,72</span></div>
<div class="c" style="left:877.00px;top:563.09px;width:45.00px;height:12.39px;"><span>-14 000,00</span></div>
<div class="c" style="left:923.00px;top:563.09px;width:44.00px;height:12.39px;"><span>-5 538,24</span></div>
<div class="c" style="left:968.00px;top:563.09px;width:45.00px;height:12.39px;"><span>-28 000,00</span></div>
<div class="c" style="left:1014.00px;top:563.09px;width:46.00px;height:12.39px;"><span>-33 388,30</span></div>
<div class="c" style="left:1061.00px;top:563.09px;width:45.00px;height:12.39px;"><span>0,00</span></div>
<div class="c" style="left:1107.00px;top:563.09px;width:45.00px;height:12.39px;"><span>-28 863,00</span></div>
<div class="c" style="left:1153.00px;top:563.09px;width:46.00px;height:12.39px;"><span>-20 000,00</span></div>
<div class="c" style="left:1200.00px;top:563.09px;width:45.00px;height:12.39px;"><span>-42 457,47</span></div>
<div class="c" style="left:1246.00px;top:563.09px;width:45.00px;height:12.39px;"><span>-14 000,00</span></div>
<div class="c" style="left:1292.00px;top:563.09px;width:46.00px;height:12.39px;"><span>-2 723,21</span></div>
<div class="c l" style="left:95.00px;top:575.48px;width:110.00px;height:12.39px;"><span>Подряд</span></div>
<div class="c" style="left:210.00px;top:575.48px;width:44.00px;height:12.39px;"><span>-18 000,00</span></div>
<div class="c" style="left:255.00px;top:575.48px;width:46.00px;height:12.39px;"><span>-123 290,00</span></div>
<div class="c" style="left:302.00px;top:575.48px;width:45.00px;height:12.39px;"><span>-7 580,00</span></div>
<div class="c" style="left:348.00px;top:575.48px;width:45.00px;height:12.39px;"><span>-16 564,00</span></div>
<div class="c" style="left:394.00px;top:575.48px;width:50.00px;height:12.39px;"><span>-26 000,00</span></div>
<div class="c" style="left:445.00px;top:575.48px;width:49.00px;height:12.39px;"><span>-33 558,50</span></div>
<div class="c" style="left:495.00px;top:575.48px;width:50.00px;height:12.39px;"><span>-23 000,00</span></div>
<div class="c" style="left:546.00px;top:575.48px;width:49.00px;height:12.39px;"><span>-56 516,50</span></div>
<div class="c" style="left:596.00px;top:575.48px;width:45.00px;height:12.39px;"><span>-5 000,00</span></div>
<div class="c" style="left:642.00px;top:575.48px;width:44.00px;height:12.39px;"><span>-11 500,00</span></div>
<div class="c" style="left:687.00px;top:575.48px;width:49.00px;height:12.39px;"><span>0,00</span></div>
<div class="c" style="left:737.00px;top:575.48px;width:49.00px;height:12.39px;"><span>-12 400,00</span></div>
<div class="c" style="left:787.00px;top:575.48px;width:44.00px;height:12.39px;"><span>-11 000,00</span></div>
<div class="c" style="left:832.00px;top:575.48px;width:44.00px;height:12.39px;"><span>-11 000,00</span></div>
<div class="c" style="left:877.00px;top:575.48px;width:45.00px;height:12.39px;"><span>0,00</span></div>
<div class="c" style="left:923.00px;top:575.48px;width:44.00px;height:12.39px;"><span>0,00</span></div>
<div class="c" style="left:968.00px;top:575.48px;width:45.00px;height:12.39px;"><span>-16 000,00</span></div>
<div class="c" style="left:1014.00px;top:575.48px;width:46.00px;height:12.39px;"><span>-34 900,00</span></div>
<div class="c" style="left:1061.00px;top:575.48px;width:45.00px;height:12.39px;"><span>0,00</span></div>
<div class="c" style="left:1107.00px;top:575.48px;width:45.00px;height:12.39px;"><span>-40 000,00</span></div>
<div class="c" style="left:1153.00px;top:575.48px;width:46.00px;height:12.39px;"><span>-920 000,00</span></div>
<div class="c" style="left:1200.00px;top:575.48px;width:45.00px;height:12.39px;"><span>-308 506,00</span></div>
<div class="c" style="left:1246.00px;top:575.48px;width:45.00px;height:12.39px;"><span>-1 020 000,00</span></div>
<div class="c" style="left:1292.00px;top:575.48px;width:46.00px;height:12.39px;"><span>-391 032,00</span></div>
<div class="lb" style="left:95.00px;top:590.07px;width:110px;line-height:8px">Покупка техники для<br>сотрудников</div>
<div class="c" style="left:210.00px;top:594.88px;width:44.00px;height:12.39px;"><span>0,00</span></div>
<div class="c" style="left:255.00px;top:594.88px;width:46.00px;height:12.39px;"><span>0,00</span></div>
<div class="c" style="left:302.00px;top:594.88px;width:45.00px;height:12.39px;"><span>0,00</span></div>
<div class="c" style="left:348.00px;top:594.88px;width:45.00px;height:12.39px;"><span>-100 780,00</span></div>
<div class="c" style="left:394.00px;top:594.88px;width:50.00px;height:12.39px;"><span>0,00</span></div>
<div class="c" style="left:445.00px;top:594.88px;width:49.00px;height:12.39px;"><span>-27 490,00</span></div>
<div class="c" style="left:495.00px;top:594.88px;width:50.00px;height:12.39px;"><span>0,00</span></div>
<div class="c" style="left:546.00px;top:594.88px;width:49.00px;height:12.39px;"><span>-53 990,00</span></div>
<div class="c" style="left:596.00px;top:594.88px;width:45.00px;height:12.39px;"><span>0,00</span></div>
<div class="c" style="left:642.00px;top:594.88px;width:44.00px;height:12.39px;"><span>0,00</span></div>
<div class="c" style="left:687.00px;top:594.88px;width:49.00px;height:12.39px;"><span>0,00</span></div>
<div class="c" style="left:737.00px;top:594.88px;width:49.00px;height:12.39px;"><span>0,00</span></div>
<div class="c" style="left:787.00px;top:594.88px;width:44.00px;height:12.39px;"><span>0,00</span></div>
<div class="c" style="left:832.00px;top:594.88px;width:44.00px;height:12.39px;"><span>0,00</span></div>
<div class="c" style="left:877.00px;top:594.88px;width:45.00px;height:12.39px;"><span>0,00</span></div>
<div class="c" style="left:923.00px;top:594.88px;width:44.00px;height:12.39px;"><span>0,00</span></div>
<div class="c" style="left:968.00px;top:594.88px;width:45.00px;height:12.39px;"><span>0,00</span></div>
<div class="c" style="left:1014.00px;top:594.88px;width:46.00px;height:12.39px;"><span>0,00</span></div>
<div class="c" style="left:1061.00px;top:594.88px;width:45.00px;height:12.39px;"><span>0,00</span></div>
<div class="c" style="left:1107.00px;top:594.88px;width:45.00px;height:12.39px;"><span>0,00</span></div>
<div class="c" style="left:1153.00px;top:594.88px;width:46.00px;height:12.39px;"><span>0,00</span></div>
<div class="c" style="left:1200.00px;top:594.88px;width:45.00px;height:12.39px;"><span>-66 179,00</span></div>
<div class="c" style="left:1246.00px;top:594.88px;width:45.00px;height:12.39px;"><span>0,00</span></div>
<div class="c" style="left:1292.00px;top:594.88px;width:46.00px;height:12.39px;"><span>0,00</span></div>
<div class="c l" style="left:95.00px;top:607.27px;width:110.00px;height:12.39px;"><span>Представительские расходы</span></div>
<div class="c" style="left:210.00px;top:607.27px;width:44.00px;height:12.39px;"><span>-76 000,00</span></div>
<div class="c" style="left:255.00px;top:607.27px;width:46.00px;height:12.39px;"><span>-70 635,00</span></div>
<div class="c" style="left:302.00px;top:607.27px;width:45.00px;height:12.39px;"><span>0,00</span></div>
<div class="c" style="left:348.00px;top:607.27px;width:45.00px;height:12.39px;"><span>-2 210,00</span></div>
<div class="c" style="left:394.00px;top:607.27px;width:50.00px;height:12.39px;"><span>-254 000,00</span></div>
<div class="c" style="left:445.00px;top:607.27px;width:49.00px;height:12.39px;"><span>-274 826,48</span></div>
<div class="c" style="left:495.00px;top:607.27px;width:50.00px;height:12.39px;"><span>-3 500,00</span></div>
<div class="c" style="left:546.00px;top:607.27px;width:49.00px;height:12.39px;"><span>-105 366,50</span></div>
<div class="c" style="left:596.00px;top:607.27px;width:45.00px;height:12.39px;"><span>0,00</span></div>
<div class="c" style="left:642.00px;top:607.27px;width:44.00px;height:12.39px;"><span>0,00</span></div>
<div class="c" style="left:687.00px;top:607.27px;width:49.00px;height:12.39px;"><span>0,00</span></div>
<div class="c" style="left:737.00px;top:607.27px;width:49.00px;height:12.39px;"><span>-17 890,00</span></div>
<div class="c" style="left:787.00px;top:607.27px;width:44.00px;height:12.39px;"><span>0,00</span></div>
<div class="c" style="left:832.00px;top:607.27px;width:44.00px;height:12.39px;"><span>0,00</span></div>
<div class="c" style="left:877.00px;top:607.27px;width:45.00px;height:12.39px;"><span>0,00</span></div>
<div class="c" style="left:923.00px;top:607.27px;width:44.00px;height:12.39px;"><span>0,00</span></div>
<div class="c" style="left:968.00px;top:607.27px;width:45.00px;height:12.39px;"><span>0,00</span></div>
<div class="c" style="left:1014.00px;top:607.27px;width:46.00px;height:12.39px;"><span>-17 890,00</span></div>
<div class="c" style="left:1061.00px;top:607.27px;width:45.00px;height:12.39px;"><span>0,00</span></div>
<div class="c" style="left:1107.00px;top:607.27px;width:45.00px;height:12.39px;"><span>0,00</span></div>
<div class="c" style="left:1153.00px;top:607.27px;width:46.00px;height:12.39px;"><span>-13 500,00</span></div>
<div class="c" style="left:1200.00px;top:607.27px;width:45.00px;height:12.39px;"><span>-10 080,00</span></div>
<div class="c" style="left:1246.00px;top:607.27px;width:45.00px;height:12.39px;"><span>0,00</span></div>
<div class="c" style="left:1292.00px;top:607.27px;width:46.00px;height:12.39px;"><span>0,00</span></div>
<div class="c l" style="left:95.00px;top:619.66px;width:110.00px;height:12.39px;"><span>Процент за вывод средств</span></div>
<div class="c" style="left:210.00px;top:619.66px;width:44.00px;height:12.39px;"><span>0,00</span></div>
<div class="c" style="left:255.00px;top:619.66px;width:46.00px;height:12.39px;"><span>-45 040,00</span></div>
<div class="c" style="left:302.00px;top:619.66px;width:45.00px;height:12.39px;"><span>0,00</span></div>
<div class="c" style="left:348.00px;top:619.66px;width:45.00px;height:12.39px;"><span>-90 300,00</span></div>
<div class="c" style="left:394.00px;top:619.66px;width:50.00px;height:12.39px;"><span>-20 000,00</span></div>
<div class="c" style="left:445.00px;top:619.66px;width:49.00px;height:12.39px;"><span>-47 700,00</span></div>
<div class="c" style="left:495.00px;top:619.66px;width:50.00px;height:12.39px;"><span>-40 000,00</span></div>
<div class="c" style="left:546.00px;top:619.66px;width:49.00px;height:12.39px;"><span>-67 000,00</span></div>
<div class="c" style="left:596.00px;top:619.66px;width:45.00px;height:12.39px;"><span>0,00</span></div>
<div class="c" style="left:642.00px;top:619.66px;width:44.00px;height:12.39px;"><span>0,00</span></div>
<div class="c" style="left:687.00px;top:619.66px;width:49.00px;height:12.39px;"><span>0,00</span></div>
<div class="c" style="left:737.00px;top:619.66px;width:49.00px;height:12.39px;"><span>0,00</span></div>
<div class="c" style="left:787.00px;top:619.66px;width:44.00px;height:12.39px;"><span>0,00</span></div>
<div class="c" style="left:832.00px;top:619.66px;width:44.00px;height:12.39px;"><span>0,00</span></div>
<div class="c" style="left:877.00px;top:619.66px;width:45.00px;height:12.39px;"><span>0,00</span></div>
<div class="c" style="left:923.00px;top:619.66px;width:44.00px;height:12.39px;"><span>0,00</span></div>
<div class="c" style="left:968.00px;top:619.66px;width:45.00px;height:12.39px;"><span>0,00</span></div>
<div class="c" style="left:1014.00px;top:619.66px;width:46.00px;height:12.39px;"><span>0,00</span></div>
<div class="c" style="left:1061.00px;top:619.66px;width:45.00px;height:12.39px;"><span>0,00</span></div>
<div class="c" style="left:1107.00px;top:619.66px;width:45.00px;height:12.39px;"><span>0,00</span></div>
<div class="c" style="left:1153.00px;top:619.66px;width:46.00px;height:12.39px;"><span>0,00</span></div>
<div class="c" style="left:1200.00px;top:619.66px;width:45.00px;height:12.39px;"><span>-39 850,00</span></div>
<div class="c" style="left:1246.00px;top:619.66px;width:45.00px;height:12.39px;"><span>0,00</span></div>
<div class="c" style="left:1292.00px;top:619.66px;width:46.00px;height:12.39px;"><span>-33 120,00</span></div>
<div class="c l" style="left:95.00px;top:632.05px;width:110.00px;height:12.39px;"><span>Расходы на персонал</span></div>
<div class="c" style="left:210.00px;top:632.05px;width:44.00px;height:12.39px;"><span>-6 000,00</span></div>
<div class="c" style="left:255.00px;top:632.05px;width:46.00px;height:12.39px;"><span>-454 050,01</span></div>
<div class="c" style="left:302.00px;top:632.05px;width:45.00px;height:12.39px;"><span>0,00</span></div>
<div class="c" style="left:348.00px;top:632.05px;width:45.00px;height:12.39px;"><span>-60 750,00</span></div>
<div class="c" style="left:394.00px;top:632.05px;width:50.00px;height:12.39px;"><span>0,00</span></div>
<div class="c" style="left:445.00px;top:632.05px;width:49.00px;height:12.39px;"><span>-17 285,00</span></div>
<div class="c" style="left:495.00px;top:632.05px;width:50.00px;height:12.39px;"><span>-12 000,00</span></div>
<div class="c" style="left:546.00px;top:632.05px;width:49.00px;height:12.39px;"><span>-115 752,20</span></div>
<div class="c" style="left:596.00px;top:632.05px;width:45.00px;height:12.39px;"><span>-2 040,00</span></div>
<div class="c" style="left:642.00px;top:632.05px;width:44.00px;height:12.39px;"><span>-11 040,00</span></div>
<div class="c" style="left:687.00px;top:632.05px;width:49.00px;height:12.39px;"><span>0,00</span></div>
<div class="c" style="left:737.00px;top:632.05px;width:49.00px;height:12.39px;"><span>0,00</span></div>
<div class="c" style="left:787.00px;top:632.05px;width:44.00px;height:12.39px;"><span>0,00</span></div>
<div class="c" style="left:832.00px;top:632.05px;width:44.00px;height:12.39px;"><span>-16 700,00</span></div>
<div class="c" style="left:877.00px;top:632.05px;width:45.00px;height:12.39px;"><span>0,00</span></div>
<div class="c" style="left:923.00px;top:632.05px;width:44.00px;height:12.39px;"><span>-12 549,00</span></div>
<div class="c" style="left:968.00px;top:632.05px;width:45.00px;height:12.39px;"><span>-2 040,00</span></div>
<div class="c" style="left:1014.00px;top:632.05px;width:46.00px;height:12.39px;"><span>-40 289,00</span></div>
<div class="c" style="left:1061.00px;top:632.05px;width:45.00px;height:12.39px;"><span>0,00</span></div>
<div class="c" style="left:1107.00px;top:632.05px;width:45.00px;height:12.39px;"><span>-22 993,00</span></div>
<div class="c" style="left:1153.00px;top:632.05px;width:46.00px;height:12.39px;"><span>0,00</span></div>
<div class="c" style="left:1200.00px;top:632.05px;width:45.00px;height:12.39px;"><span>-88 825,40</span></div>
<div class="c" style="left:1246.00px;top:632.05px;width:45.00px;height:12.39px;"><span>0,00</span></div>
<div class="c" style="left:1292.00px;top:632.05px;width:46.00px;height:12.39px;"><span>0,00</span></div>
<div class="c l" style="left:95.00px;top:644.44px;width:110.00px;height:12.39px;"><span>Расходы на проект</span></div>
<div class="c" style="left:210.00px;top:644.44px;width:44.00px;height:12.39px;"><span>0,00</span></div>
<div class="c" style="left:255.00px;top:644.44px;width:46.00px;height:12.39px;"><span>0,00</span></div>
<div class="c" style="left:302.00px;top:644.44px;width:45.00px;height:12.39px;"><span>0,00</span></div>
<div class="c" style="left:348.00px;top:644.44px;width:45.00px;height:12.39px;"><span>0,00</span></div>
<div class="c" style="left:394.00px;top:644.44px;width:50.00px;height:12.39px;"><span>0,00</span></div>
<div class="c" style="left:445.00px;top:644.44px;width:49.00px;height:12.39px;"><span>0,00</span></div>
<div class="c" style="left:495.00px;top:644.44px;width:50.00px;height:12.39px;"><span>0,00</span></div>
<div class="c" style="left:546.00px;top:644.44px;width:49.00px;height:12.39px;"><span>0,00</span></div>
<div class="c" style="left:596.00px;top:644.44px;width:45.00px;height:12.39px;"><span>0,00</span></div>
<div class="c" style="left:642.00px;top:644.44px;width:44.00px;height:12.39px;"><span>0,00</span></div>
<div class="c" style="left:687.00px;top:644.44px;width:49.00px;height:12.39px;"><span>0,00</span></div>
<div class="c" style="left:737.00px;top:644.44px;width:49.00px;height:12.39px;"><span>0,00</span></div>
<div class="c" style="left:787.00px;top:644.44px;width:44.00px;height:12.39px;"><span>0,00</span></div>
<div class="c" style="left:832.00px;top:644.44px;width:44.00px;height:12.39px;"><span>-2 186,00</span></div>
<div class="c" style="left:877.00px;top:644.44px;width:45.00px;height:12.39px;"><span>0,00</span></div>
<div class="c" style="left:923.00px;top:644.44px;width:44.00px;height:12.39px;"><span>0,00</span></div>
<div class="c" style="left:968.00px;top:644.44px;width:45.00px;height:12.39px;"><span>0,00</span></div>
<div class="c" style="left:1014.00px;top:644.44px;width:46.00px;height:12.39px;"><span>-2 186,00</span></div>
<div class="c" style="left:1061.00px;top:644.44px;width:45.00px;height:12.39px;"><span>0,00</span></div>
<div class="c" style="left:1107.00px;top:644.44px;width:45.00px;height:12.39px;"><span>0,00</span></div>
<div class="c" style="left:1153.00px;top:644.44px;width:46.00px;height:12.39px;"><span>0,00</span></div>
<div class="c" style="left:1200.00px;top:644.44px;width:45.00px;height:12.39px;"><span>-9 227,20</span></div>
<div class="c" style="left:1246.00px;top:644.44px;width:45.00px;height:12.39px;"><span>0,00</span></div>
<div class="c" style="left:1292.00px;top:644.44px;width:46.00px;height:12.39px;"><span>0,00</span></div>
<div class="c l" style="left:95.00px;top:656.83px;width:110.00px;height:12.39px;"><span>Расходы Everfest</span></div>
<div class="c" style="left:210.00px;top:656.83px;width:44.00px;height:12.39px;"><span>0,00</span></div>
<div class="c" style="left:255.00px;top:656.83px;width:46.00px;height:12.39px;"><span>0,00</span></div>
<div class="c" style="left:302.00px;top:656.83px;width:45.00px;height:12.39px;"><span>0,00</span></div>
<div class="c" style="left:348.00px;top:656.83px;width:45.00px;height:12.39px;"><span>0,00</span></div>
<div class="c" style="left:394.00px;top:656.83px;width:50.00px;height:12.39px;"><span>0,00</span></div>
<div class="c" style="left:445.00px;top:656.83px;width:49.00px;height:12.39px;"><span>0,00</span></div>
<div class="c" style="left:495.00px;top:656.83px;width:50.00px;height:12.39px;"><span>0,00</span></div>
<div class="c" style="left:546.00px;top:656.83px;width:49.00px;height:12.39px;"><span>0,00</span></div>
<div class="c" style="left:596.00px;top:656.83px;width:45.00px;height:12.39px;"><span>0,00</span></div>
<div class="c" style="left:642.00px;top:656.83px;width:44.00px;height:12.39px;"><span>0,00</span></div>
<div class="c" style="left:687.00px;top:656.83px;width:49.00px;height:12.39px;"><span>0,00</span></div>
<div class="c" style="left:737.00px;top:656.83px;width:49.00px;height:12.39px;"><span>0,00</span></div>
<div class="c" style="left:787.00px;top:656.83px;width:44.00px;height:12.39px;"><span>0,00</span></div>
<div class="c" style="left:832.00px;top:656.83px;width:44.00px;height:12.39px;"><span>0,00</span></div>
<div class="c" style="left:877.00px;top:656.83px;width:45.00px;height:12.39px;"><span>0,00</span></div>
<div class="c" style="left:923.00px;top:656.83px;width:44.00px;height:12.39px;"><span>0,00</span></div>
<div class="c" style="left:968.00px;top:656.83px;width:45.00px;height:12.39px;"><span>0,00</span></div>
<div class="c" style="left:1014.00px;top:656.83px;width:46.00px;height:12.39px;"><span>0,00</span></div>
<div class="c" style="left:1061.00px;top:656.83px;width:45.00px;height:12.39px;"><span>0,00</span></div>
<div class="c" style="left:1107.00px;top:656.83px;width:45.00px;height:12.39px;"><span>0,00</span></div>
<div class="c" style="left:1153.00px;top:656.83px;width:46.00px;height:12.39px;"><span>0,00</span></div>
<div class="c" style="left:1200.00px;top:656.83px;width:45.00px;height:12.39px;"><span>0,00</span></div>
<div class="c" style="left:1246.00px;top:656.83px;width:45.00px;height:12.39px;"><span>0,00</span></div>
<div class="c" style="left:1292.00px;top:656.83px;width:46.00px;height:12.39px;"><span>0,00</span></div>
<div class="c l" style="left:95.00px;top:669.22px;width:110.00px;height:12.39px;"><span>Страховые взносы ИП</span></div>
<div class="c" style="left:210.00px;top:669.22px;width:44.00px;height:12.39px;"><span>0,00</span></div>
<div class="c" style="left:255.00px;top:669.22px;width:46.00px;height:12.39px;"><span>-26 435,50</span></div>
<div class="c" style="left:302.00px;top:669.22px;width:45.00px;height:12.39px;"><span>0,00</span></div>
<div class="c" style="left:348.00px;top:669.22px;width:45.00px;height:12.39px;"><span>-3 406,17</span></div>
<div class="c" style="left:394.00px;top:669.22px;width:50.00px;height:12.39px;"><span>0,00</span></div>
<div class="c" style="left:445.00px;top:669.22px;width:49.00px;height:12.39px;"><span>-3 406,17</span></div>
<div class="c" style="left:495.00px;top:669.22px;width:50.00px;height:12.39px;"><span>0,00</span></div>
<div class="c" style="left:546.00px;top:669.22px;width:49.00px;height:12.39px;"><span>0,00</span></div>
<div class="c" style="left:596.00px;top:669.22px;width:45.00px;height:12.39px;"><span>0,00</span></div>
<div class="c" style="left:642.00px;top:669.22px;width:44.00px;height:12.39px;"><span>-3 406,17</span></div>
<div class="c" style="left:687.00px;top:669.22px;width:49.00px;height:12.39px;"><span>0,00</span></div>
<div class="c" style="left:737.00px;top:669.22px;width:49.00px;height:12.39px;"><span>0,00</span></div>
<div class="c" style="left:787.00px;top:669.22px;width:44.00px;height:12.39px;"><span>0,00</span></div>
<div class="c" style="left:832.00px;top:669.22px;width:44.00px;height:12.39px;"><span>0,00</span></div>
<div class="c" style="left:877.00px;top:669.22px;width:45.00px;height:12.39px;"><span>0,00</span></div>
<div class="c" style="left:923.00px;top:669.22px;width:44.00px;height:12.39px;"><span>0,00</span></div>
<div class="c" style="left:968.00px;top:669.22px;width:45.00px;height:12.39px;"><span>0,00</span></div>
<div class="c" style="left:1014.00px;top:669.22px;width:46.00px;height:12.39px;"><span>-3 406,17</span></div>
<div class="c" style="left:1061.00px;top:669.22px;width:45.00px;height:12.39px;"><span>0,00</span></div>
<div class="c" style="left:1107.00px;top:669.22px;width:45.00px;height:12.39px;"><span>-4 726,17</span></div>
<div class="c" style="left:1153.00px;top:669.22px;width:46.00px;height:12.39px;"><span>0,00</span></div>
<div class="c" style="left:1200.00px;top:669.22px;width:45.00px;height:12.39px;"><span>-6 812,34</span></div>
<div class="c" style="left:1246.00px;top:669.22px;width:45.00px;height:12.39px;"><span>0,00</span></div>
<div class="c" style="left:1292.00px;top:669.22px;width:46.00px;height:12.39px;"><span>0,00</span></div>
<div class="c l" style="left:95.00px;top:681.61px;width:110.00px;height:12.39px;"><span>Транспортные услуги</span></div>
<div class="c" style="left:210.00px;top:681.61px;width:44.00px;height:12.39px;"><span>-38 000,00</span></div>
<div class="c" style="left:255.00px;top:681.61px;width:46.00px;height:12.39px;"><span>-38 823,38</span></div>
<div class="c" style="left:302.00px;top:681.61px;width:45.00px;height:12.39px;"><span>-11 000,00</span></div>
<div class="c" style="left:348.00px;top:681.61px;width:45.00px;height:12.39px;"><span>-50 504,02</span></div>
<div class="c" style="left:394.00px;top:681.61px;width:50.00px;height:12.39px;"><span>-49 000,00</span></div>
<div class="c" style="left:445.00px;top:681.61px;width:49.00px;height:12.39px;"><span>-44 545,58</span></div>
<div class="c" style="left:495.00px;top:681.61px;width:50.00px;height:12.39px;"><span>-49 000,00</span></div>
<div class="c" style="left:546.00px;top:681.61px;width:49.00px;height:12.39px;"><span>-40 998,51</span></div>
<div class="c" style="left:596.00px;top:681.61px;width:45.00px;height:12.39px;"><span>-161 000,00</span></div>
<div class="c" style="left:642.00px;top:681.61px;width:44.00px;height:12.39px;"><span>-158 124,12</span></div>
<div class="c" style="left:687.00px;top:681.61px;width:49.00px;height:12.39px;"><span>-10 000,00</span></div>
<div class="c" style="left:737.00px;top:681.61px;width:49.00px;height:12.39px;"><span>-17 746,31</span></div>
<div class="c" style="left:787.00px;top:681.61px;width:44.00px;height:12.39px;"><span>-11 000,00</span></div>
<div class="c" style="left:832.00px;top:681.61px;width:44.00px;height:12.39px;"><span>-8 207,92</span></div>
<div class="c" style="left:877.00px;top:681.61px;width:45.00px;height:12.39px;"><span>-11 000,00</span></div>
<div class="c" style="left:923.00px;top:681.61px;width:44.00px;height:12.39px;"><span>-11 782,74</span></div>
<div class="c" style="left:968.00px;top:681.61px;width:45.00px;height:12.39px;"><span>-193 000,00</span></div>
<div class="c" style="left:1014.00px;top:681.61px;width:46.00px;height:12.39px;"><span>-195 861,09</span></div>
<div class="c" style="left:1061.00px;top:681.61px;width:45.00px;height:12.39px;"><span>-10 000,00</span></div>
<div class="c" style="left:1107.00px;top:681.61px;width:45.00px;height:12.39px;"><span>-41 504,91</span></div>
<div class="c" style="left:1153.00px;top:681.61px;width:46.00px;height:12.39px;"><span>-14 000,00</span></div>
<div class="c" style="left:1200.00px;top:681.61px;width:45.00px;height:12.39px;"><span>-15 238,37</span></div>
<div class="c" style="left:1246.00px;top:681.61px;width:45.00px;height:12.39px;"><span>-1 000,00</span></div>
<div class="c" style="left:1292.00px;top:681.61px;width:46.00px;height:12.39px;"><span>-8 854,32</span></div>
<div class="c l" style="left:95.00px;top:694.00px;width:110.00px;height:12.39px;"><span>Уборка и обслуживание офиса</span></div>
<div class="c" style="left:210.00px;top:694.00px;width:44.00px;height:12.39px;"><span>-1 500,00</span></div>
<div class="c" style="left:255.00px;top:694.00px;width:46.00px;height:12.39px;"><span>-617,00</span></div>
<div class="c" style="left:302.00px;top:694.00px;width:45.00px;height:12.39px;"><span>0,00</span></div>
<div class="c" style="left:348.00px;top:694.00px;width:45.00px;height:12.39px;"><span>-7 200,00</span></div>
<div class="c" style="left:394.00px;top:694.00px;width:50.00px;height:12.39px;"><span>0,00</span></div>
<div class="c" style="left:445.00px;top:694.00px;width:49.00px;height:12.39px;"><span>-8 500,00</span></div>
<div class="c" style="left:495.00px;top:694.00px;width:50.00px;height:12.39px;"><span>0,00</span></div>
<div class="c" style="left:546.00px;top:694.00px;width:49.00px;height:12.39px;"><span>-8 500,00</span></div>
<div class="c" style="left:596.00px;top:694.00px;width:45.00px;height:12.39px;"><span>0,00</span></div>
<div class="c" style="left:642.00px;top:694.00px;width:44.00px;height:12.39px;"><span>0,00</span></div>
<div class="c" style="left:687.00px;top:694.00px;width:49.00px;height:12.39px;"><span>0,00</span></div>
<div class="c" style="left:737.00px;top:694.00px;width:49.00px;height:12.39px;"><span>0,00</span></div>
<div class="c" style="left:787.00px;top:694.00px;width:44.00px;height:12.39px;"><span>0,00</span></div>
<div class="c" style="left:832.00px;top:694.00px;width:44.00px;height:12.39px;"><span>0,00</span></div>
<div class="c" style="left:877.00px;top:694.00px;width:45.00px;height:12.39px;"><span>0,00</span></div>
<div class="c" style="left:923.00px;top:694.00px;width:44.00px;height:12.39px;"><span>-8 400,00</span></div>
<div class="c" style="left:968.00px;top:694.00px;width:45.00px;height:12.39px;"><span>0,00</span></div>
<div class="c" style="left:1014.00px;top:694.00px;width:46.00px;height:12.39px;"><span>-8 400,00</span></div>
<div class="c" style="left:1061.00px;top:694.00px;width:45.00px;height:12.39px;"><span>0,00</span></div>
<div class="c" style="left:1107.00px;top:694.00px;width:45.00px;height:12.39px;"><span>-8 400,00</span></div>
<div class="c" style="left:1153.00px;top:694.00px;width:46.00px;height:12.39px;"><span>0,00</span></div>
<div class="c" style="left:1200.00px;top:694.00px;width:45.00px;height:12.39px;"><span>-9 600,00</span></div>
<div class="c" style="left:1246.00px;top:694.00px;width:45.00px;height:12.39px;"><span>0,00</span></div>
<div class="c" style="left:1292.00px;top:694.00px;width:46.00px;height:12.39px;"><span>0,00</span></div>
<div class="c l" style="left:95.00px;top:706.39px;width:110.00px;height:12.39px;"><span>Услуги интернета и связи</span></div>
<div class="c" style="left:210.00px;top:706.39px;width:44.00px;height:12.39px;"><span>-12 000,00</span></div>
<div class="c" style="left:255.00px;top:706.39px;width:46.00px;height:12.39px;"><span>-6 000,00</span></div>
<div class="c" style="left:302.00px;top:706.39px;width:45.00px;height:12.39px;"><span>0,00</span></div>
<div class="c" style="left:348.00px;top:706.39px;width:45.00px;height:12.39px;"><span>-3 899,00</span></div>
<div class="c" style="left:394.00px;top:706.39px;width:50.00px;height:12.39px;"><span>0,00</span></div>
<div class="c" style="left:445.00px;top:706.39px;width:49.00px;height:12.39px;"><span>-8 536,00</span></div>
<div class="c" style="left:495.00px;top:706.39px;width:50.00px;height:12.39px;"><span>0,00</span></div>
<div class="c" style="left:546.00px;top:706.39px;width:49.00px;height:12.39px;"><span>-5 581,29</span></div>
<div class="c" style="left:596.00px;top:706.39px;width:45.00px;height:12.39px;"><span>-3 000,00</span></div>
<div class="c" style="left:642.00px;top:706.39px;width:44.00px;height:12.39px;"><span>-5 142,04</span></div>
<div class="c" style="left:687.00px;top:706.39px;width:49.00px;height:12.39px;"><span>0,00</span></div>
<div class="c" style="left:737.00px;top:706.39px;width:49.00px;height:12.39px;"><span>0,00</span></div>
<div class="c" style="left:787.00px;top:706.39px;width:44.00px;height:12.39px;"><span>-6 500,00</span></div>
<div class="c" style="left:832.00px;top:706.39px;width:44.00px;height:12.39px;"><span>-6 000,00</span></div>
<div class="c" style="left:877.00px;top:706.39px;width:45.00px;height:12.39px;"><span>0,00</span></div>
<div class="c" style="left:923.00px;top:706.39px;width:44.00px;height:12.39px;"><span>0,00</span></div>
<div class="c" style="left:968.00px;top:706.39px;width:45.00px;height:12.39px;"><span>-9 500,00</span></div>
<div class="c" style="left:1014.00px;top:706.39px;width:46.00px;height:12.39px;"><span>-11 142,04</span></div>
<div class="c" style="left:1061.00px;top:706.39px;width:45.00px;height:12.39px;"><span>0,00</span></div>
<div class="c" style="left:1107.00px;top:706.39px;width:45.00px;height:12.39px;"><span>-7 313,92</span></div>
<div class="c" style="left:1153.00px;top:706.39px;width:46.00px;height:12.39px;"><span>0,00</span></div>
<div class="c" style="left:1200.00px;top:706.39px;width:45.00px;height:12.39px;"><span>-6 000,00</span></div>
<div class="c" style="left:1246.00px;top:706.39px;width:45.00px;height:12.39px;"><span>0,00</span></div>
<div class="c" style="left:1292.00px;top:706.39px;width:46.00px;height:12.39px;"><span>0,00</span></div>
<div class="c l" style="left:95.00px;top:718.78px;width:110.00px;height:12.39px;"><span>ФОТ</span></div>
<div class="c" style="left:210.00px;top:718.78px;width:44.00px;height:12.39px;"><span>-1 150 000,00</span></div>
<div class="c" style="left:255.00px;top:718.78px;width:46.00px;height:12.39px;"><span>-1 231 600,00</span></div>
<div class="c" style="left:302.00px;top:718.78px;width:45.00px;height:12.39px;"><span>-700 000,00</span></div>
<div class="c" style="left:348.00px;top:718.78px;width:45.00px;height:12.39px;"><span>-961 944,00</span></div>
<div class="c" style="left:394.00px;top:718.78px;width:50.00px;height:12.39px;"><span>-1 400 000,00</span></div>
<div class="c" style="left:445.00px;top:718.78px;width:49.00px;height:12.39px;"><span>-1 571 114,00</span></div>
<div class="c" style="left:495.00px;top:718.78px;width:50.00px;height:12.39px;"><span>-700 000,00</span></div>
<div class="c" style="left:546.00px;top:718.78px;width:49.00px;height:12.39px;"><span>-904 301,51</span></div>
<div class="c" style="left:596.00px;top:718.78px;width:45.00px;height:12.39px;"><span>-800 000,00</span></div>
<div class="c" style="left:642.00px;top:718.78px;width:44.00px;height:12.39px;"><span>-824 805,81</span></div>
<div class="c" style="left:687.00px;top:718.78px;width:49.00px;height:12.39px;"><span>0,00</span></div>
<div class="c" style="left:737.00px;top:718.78px;width:49.00px;height:12.39px;"><span>-6 771,00</span></div>
<div class="c" style="left:787.00px;top:718.78px;width:44.00px;height:12.39px;"><span>-700 000,00</span></div>
<div class="c" style="left:832.00px;top:718.78px;width:44.00px;height:12.39px;"><span>-573 450,00</span></div>
<div class="c" style="left:877.00px;top:718.78px;width:45.00px;height:12.39px;"><span>0,00</span></div>
<div class="c" style="left:923.00px;top:718.78px;width:44.00px;height:12.39px;"><span>-15 821,00</span></div>
<div class="c" style="left:968.00px;top:718.78px;width:45.00px;height:12.39px;"><span>-1 500 000,00</span></div>
<div class="c" style="left:1014.00px;top:718.78px;width:46.00px;height:12.39px;"><span>-1 420 847,81</span></div>
<div class="c" style="left:1061.00px;top:718.78px;width:45.00px;height:12.39px;"><span>-700 000,00</span></div>
<div class="c" style="left:1107.00px;top:718.78px;width:45.00px;height:12.39px;"><span>-1 280 402,60</span></div>
<div class="c" style="left:1153.00px;top:718.78px;width:46.00px;height:12.39px;"><span>-2 300 000,00</span></div>
<div class="c" style="left:1200.00px;top:718.78px;width:45.00px;height:12.39px;"><span>-2 332 683,00</span></div>
<div class="c" style="left:1246.00px;top:718.78px;width:45.00px;height:12.39px;"><span>-700 000,00</span></div>
<div class="c" style="left:1292.00px;top:718.78px;width:46.00px;height:12.39px;"><span>-51 381,00</span></div>
<div class="c l" style="left:95.00px;top:731.17px;width:110.00px;height:12.39px;"><span>Налоги на ФОТ</span></div>
<div class="c" style="left:210.00px;top:731.17px;width:44.00px;height:12.39px;"><span>-120 000,00</span></div>
<div class="c" style="left:255.00px;top:731.17px;width:46.00px;height:12.39px;"><span>-121 336,20</span></div>
<div class="c" style="left:302.00px;top:731.17px;width:45.00px;height:12.39px;"><span>-150 000,00</span></div>
<div class="c" style="left:348.00px;top:731.17px;width:45.00px;height:12.39px;"><span>-145 727,00</span></div>
<div class="c" style="left:394.00px;top:731.17px;width:50.00px;height:12.39px;"><span>-150 000,00</span></div>
<div class="c" style="left:445.00px;top:731.17px;width:49.00px;height:12.39px;"><span>-144 963,60</span></div>
<div class="c" style="left:495.00px;top:731.17px;width:50.00px;height:12.39px;"><span>0,00</span></div>
<div class="c" style="left:546.00px;top:731.17px;width:49.00px;height:12.39px;"><span>0,00</span></div>
<div class="c" style="left:596.00px;top:731.17px;width:45.00px;height:12.39px;"><span>-150 000,00</span></div>
<div class="c" style="left:642.00px;top:731.17px;width:44.00px;height:12.39px;"><span>-137 999,60</span></div>
<div class="c" style="left:687.00px;top:731.17px;width:49.00px;height:12.39px;"><span>0,00</span></div>
<div class="c" style="left:737.00px;top:731.17px;width:49.00px;height:12.39px;"><span>0,00</span></div>
<div class="c" style="left:787.00px;top:731.17px;width:44.00px;height:12.39px;"><span>0,00</span></div>
<div class="c" style="left:832.00px;top:731.17px;width:44.00px;height:12.39px;"><span>0,00</span></div>
<div class="c" style="left:877.00px;top:731.17px;width:45.00px;height:12.39px;"><span>0,00</span></div>
<div class="c" style="left:923.00px;top:731.17px;width:44.00px;height:12.39px;"><span>-2 000,00</span></div>
<div class="c" style="left:968.00px;top:731.17px;width:45.00px;height:12.39px;"><span>-150 000,00</span></div>
<div class="c" style="left:1014.00px;top:731.17px;width:46.00px;height:12.39px;"><span>-139 999,60</span></div>
<div class="c" style="left:1061.00px;top:731.17px;width:45.00px;height:12.39px;"><span>-150 000,00</span></div>
<div class="c" style="left:1107.00px;top:731.17px;width:45.00px;height:12.39px;"><span>-117 691,00</span></div>
<div class="c" style="left:1153.00px;top:731.17px;width:46.00px;height:12.39px;"><span>-300 000,00</span></div>
<div class="c" style="left:1200.00px;top:731.17px;width:45.00px;height:12.39px;"><span>-248 785,30</span></div>
<div class="c" style="left:1246.00px;top:731.17px;width:45.00px;height:12.39px;"><span>0,00</span></div>
<div class="c" style="left:1292.00px;top:731.17px;width:46.00px;height:12.39px;"><span>0,00</span></div>
<div class="c l" style="left:95.00px;top:743.56px;width:110.00px;height:12.39px;"><span>Налог ПСН</span></div>
<div class="c" style="left:210.00px;top:743.56px;width:44.00px;height:12.39px;"><span>0,00</span></div>
<div class="c" style="left:255.00px;top:743.56px;width:46.00px;height:12.39px;"><span>-8 676,00</span></div>
<div class="c" style="left:302.00px;top:743.56px;width:45.00px;height:12.39px;"><span>0,00</span></div>
<div class="c" style="left:348.00px;top:743.56px;width:45.00px;height:12.39px;"><span>-4 000,00</span></div>
<div class="c" style="left:394.00px;top:743.56px;width:50.00px;height:12.39px;"><span>0,00</span></div>
<div class="c" style="left:445.00px;top:743.56px;width:49.00px;height:12.39px;"><span>0,00</span></div>
<div class="c" style="left:495.00px;top:743.56px;width:50.00px;height:12.39px;"><span>0,00</span></div>
<div class="c" style="left:546.00px;top:743.56px;width:49.00px;height:12.39px;"><span>0,00</span></div>
<div class="c" style="left:596.00px;top:743.56px;width:45.00px;height:12.39px;"><span>0,00</span></div>
<div class="c" style="left:642.00px;top:743.56px;width:44.00px;height:12.39px;"><span>0,00</span></div>
<div class="c" style="left:687.00px;top:743.56px;width:49.00px;height:12.39px;"><span>0,00</span></div>
<div class="c" style="left:737.00px;top:743.56px;width:49.00px;height:12.39px;"><span>0,00</span></div>
<div class="c" style="left:787.00px;top:743.56px;width:44.00px;height:12.39px;"><span>0,00</span></div>
<div class="c" style="left:832.00px;top:743.56px;width:44.00px;height:12.39px;"><span>0,00</span></div>
<div class="c" style="left:877.00px;top:743.56px;width:45.00px;height:12.39px;"><span>0,00</span></div>
<div class="c" style="left:923.00px;top:743.56px;width:44.00px;height:12.39px;"><span>0,00</span></div>
<div class="c" style="left:968.00px;top:743.56px;width:45.00px;height:12.39px;"><span>0,00</span></div>
<div class="c" style="left:1014.00px;top:743.56px;width:46.00px;height:12.39px;"><span>0,00</span></div>
<div class="c" style="left:1061.00px;top:743.56px;width:45.00px;height:12.39px;"><span>0,00</span></div>
<div class="c" style="left:1107.00px;top:743.56px;width:45.00px;height:12.39px;"><span>0,00</span></div>
<div class="c" style="left:1153.00px;top:743.56px;width:46.00px;height:12.39px;"><span>0,00</span></div>
<div class="c" style="left:1200.00px;top:743.56px;width:45.00px;height:12.39px;"><span>0,00</span></div>
<div class="c" style="left:1246.00px;top:743.56px;width:45.00px;height:12.39px;"><span>0,00</span></div>
<div class="c" style="left:1292.00px;top:743.56px;width:46.00px;height:12.39px;"><span>0,00</span></div>
<div class="c l" style="left:95.00px;top:755.95px;width:110.00px;height:12.39px;"><span>Налог УСН</span></div>
<div class="c" style="left:210.00px;top:755.95px;width:44.00px;height:12.39px;"><span>0,00</span></div>
<div class="c" style="left:255.00px;top:755.95px;width:46.00px;height:12.39px;"><span>0,00</span></div>
<div class="c" style="left:302.00px;top:755.95px;width:45.00px;height:12.39px;"><span>0,00</span></div>
<div class="c" style="left:348.00px;top:755.95px;width:45.00px;height:12.39px;"><span>0,00</span></div>
<div class="c" style="left:394.00px;top:755.95px;width:50.00px;height:12.39px;"><span>-280 000,00</span></div>
<div class="c" style="left:445.00px;top:755.95px;width:49.00px;height:12.39px;"><span>-282 340,00</span></div>
<div class="c" style="left:495.00px;top:755.95px;width:50.00px;height:12.39px;"><span>0,00</span></div>
<div class="c" style="left:546.00px;top:755.95px;width:49.00px;height:12.39px;"><span>0,00</span></div>
<div class="c" style="left:596.00px;top:755.95px;width:45.00px;height:12.39px;"><span>0,00</span></div>
<div class="c" style="left:642.00px;top:755.95px;width:44.00px;height:12.39px;"><span>0,00</span></div>
<div class="c" style="left:687.00px;top:755.95px;width:49.00px;height:12.39px;"><span>0,00</span></div>
<div class="c" style="left:737.00px;top:755.95px;width:49.00px;height:12.39px;"><span>0,00</span></div>
<div class="c" style="left:787.00px;top:755.95px;width:44.00px;height:12.39px;"><span>-90 000,00</span></div>
<div class="c" style="left:832.00px;top:755.95px;width:44.00px;height:12.39px;"><span>-82 575,00</span></div>
<div class="c" style="left:877.00px;top:755.95px;width:45.00px;height:12.39px;"><span>0,00</span></div>
<div class="c" style="left:923.00px;top:755.95px;width:44.00px;height:12.39px;"><span>0,00</span></div>
<div class="c" style="left:968.00px;top:755.95px;width:45.00px;height:12.39px;"><span>-90 000,00</span></div>
<div class="c" style="left:1014.00px;top:755.95px;width:46.00px;height:12.39px;"><span>-82 575,00</span></div>
<div class="c" style="left:1061.00px;top:755.95px;width:45.00px;height:12.39px;"><span>0,00</span></div>
<div class="c" style="left:1107.00px;top:755.95px;width:45.00px;height:12.39px;"><span>0,00</span></div>
<div class="c" style="left:1153.00px;top:755.95px;width:46.00px;height:12.39px;"><span>0,00</span></div>
<div class="c" style="left:1200.00px;top:755.95px;width:45.00px;height:12.39px;"><span>0,00</span></div>
<div class="c" style="left:1246.00px;top:755.95px;width:45.00px;height:12.39px;"><span>0,00</span></div>
<div class="c" style="left:1292.00px;top:755.95px;width:46.00px;height:12.39px;"><span>0,00</span></div>
<div class="c l" style="left:95.00px;top:768.34px;width:110.00px;height:12.39px;"><span>Нераспределенные расходы</span></div>
<div class="c" style="left:210.00px;top:768.34px;width:44.00px;height:12.39px;"><span>0,00</span></div>
<div class="c" style="left:255.00px;top:768.34px;width:46.00px;height:12.39px;"><span>-546 000,00</span></div>
<div class="c" style="left:302.00px;top:768.34px;width:45.00px;height:12.39px;"><span>0,00</span></div>
<div class="c" style="left:348.00px;top:768.34px;width:45.00px;height:12.39px;"><span>0,00</span></div>
<div class="c" style="left:394.00px;top:768.34px;width:50.00px;height:12.39px;"><span>0,00</span></div>
<div class="c" style="left:445.00px;top:768.34px;width:49.00px;height:12.39px;"><span>0,00</span></div>
<div class="c" style="left:495.00px;top:768.34px;width:50.00px;height:12.39px;"><span>0,00</span></div>
<div class="c" style="left:546.00px;top:768.34px;width:49.00px;height:12.39px;"><span>0,00</span></div>
<div class="c" style="left:596.00px;top:768.34px;width:45.00px;height:12.39px;"><span>0,00</span></div>
<div class="c" style="left:642.00px;top:768.34px;width:44.00px;height:12.39px;"><span>0,00</span></div>
<div class="c" style="left:687.00px;top:768.34px;width:49.00px;height:12.39px;"><span>0,00</span></div>
<div class="c" style="left:737.00px;top:768.34px;width:49.00px;height:12.39px;"><span>0,00</span></div>
<div class="c" style="left:787.00px;top:768.34px;width:44.00px;height:12.39px;"><span>0,00</span></div>
<div class="c" style="left:832.00px;top:768.34px;width:44.00px;height:12.39px;"><span>0,00</span></div>
<div class="c" style="left:877.00px;top:768.34px;width:45.00px;height:12.39px;"><span>0,00</span></div>
<div class="c" style="left:923.00px;top:768.34px;width:44.00px;height:12.39px;"><span>0,00</span></div>
<div class="c" style="left:968.00px;top:768.34px;width:45.00px;height:12.39px;"><span>0,00</span></div>
<div class="c" style="left:1014.00px;top:768.34px;width:46.00px;height:12.39px;"><span>0,00</span></div>
<div class="c" style="left:1061.00px;top:768.34px;width:45.00px;height:12.39px;"><span>0,00</span></div>
<div class="c" style="left:1107.00px;top:768.34px;width:45.00px;height:12.39px;"><span>0,00</span></div>
<div class="c" style="left:1153.00px;top:768.34px;width:46.00px;height:12.39px;"><span>0,00</span></div>
<div class="c" style="left:1200.00px;top:768.34px;width:45.00px;height:12.39px;"><span>0,00</span></div>
<div class="c" style="left:1246.00px;top:768.34px;width:45.00px;height:12.39px;"><span>0,00</span></div>
<div class="c" style="left:1292.00px;top:768.34px;width:46.00px;height:12.39px;"><span>0,00</span></div>
<div class="c l w" style="left:95.00px;top:451.58px;width:110.00px;height:12.39px;"><span>Выбытия</span></div>
<svg class="abs" style="left:659.00px;top:152.10px" width="8.6" height="8.9" viewBox="0 0 18 18.6"><rect x="0" y="0" width="18" height="18.6" rx="3" fill="#050505"/><path d="M3.4 9.8l3.9 3.7 7.2-8.2" fill="none" stroke="#b4b4b4" stroke-width="1.9"/></svg>
<svg class="abs" style="left:756.50px;top:152.10px" width="8.6" height="8.9" viewBox="0 0 18 18.6"><rect x="0" y="0" width="18" height="18.6" rx="3" fill="#050505"/><path d="M3.4 9.8l3.9 3.7 7.2-8.2" fill="none" stroke="#b4b4b4" stroke-width="1.9"/></svg>
<svg class="abs" style="left:849.00px;top:152.10px" width="8.6" height="8.9" viewBox="0 0 18 18.6"><rect x="0" y="0" width="18" height="18.6" rx="3" fill="#050505"/><path d="M3.4 9.8l3.9 3.7 7.2-8.2" fill="none" stroke="#b4b4b4" stroke-width="1.9"/></svg>
<svg class="abs" style="left:940.00px;top:152.10px" width="8.6" height="8.9" viewBox="0 0 18 18.6"><rect x="0" y="0" width="18" height="18.6" rx="3" fill="#050505"/><path d="M3.4 9.8l3.9 3.7 7.2-8.2" fill="none" stroke="#b4b4b4" stroke-width="1.9"/></svg>
<svg class="abs" style="left:146px;top:117px" width="7" height="7.4" viewBox="0 0 7 7.4"><rect width="7" height="7.4" rx="1" fill="#363636"/><path d="M1.2 3.7h4.6M3.5 1.4v4.6" stroke="#b0b0b0" stroke-width="0.8"/></svg>
<svg class="abs" style="left:274px;top:117px" width="7" height="7.4" viewBox="0 0 7 7.4"><rect width="7" height="7.4" rx="1" fill="#363636"/><path d="M1.2 3.7h4.6M3.5 1.4v4.6" stroke="#b0b0b0" stroke-width="0.8"/></svg>
<svg class="abs" style="left:366px;top:117px" width="7" height="7.4" viewBox="0 0 7 7.4"><rect width="7" height="7.4" rx="1" fill="#363636"/><path d="M1.2 3.7h4.6M3.5 1.4v4.6" stroke="#b0b0b0" stroke-width="0.8"/></svg>
<svg class="abs" style="left:466px;top:117px" width="7" height="7.4" viewBox="0 0 7 7.4"><rect width="7" height="7.4" rx="1" fill="#363636"/><path d="M1.2 3.7h4.6M3.5 1.4v4.6" stroke="#b0b0b0" stroke-width="0.8"/></svg>
<svg class="abs" style="left:1033px;top:117px" width="7" height="7.4" viewBox="0 0 7 7.4"><rect width="7" height="7.4" rx="1" fill="#363636"/><path d="M1.2 3.7h4.6M3.5 1.4v4.6" stroke="#b0b0b0" stroke-width="0.8"/></svg>
<svg class="abs" style="left:1125px;top:117px" width="7" height="7.4" viewBox="0 0 7 7.4"><rect width="7" height="7.4" rx="1" fill="#363636"/><path d="M1.2 3.7h4.6M3.5 1.4v4.6" stroke="#b0b0b0" stroke-width="0.8"/></svg>
<svg class="abs" style="left:1218px;top:117px" width="7" height="7.4" viewBox="0 0 7 7.4"><rect width="7" height="7.4" rx="1" fill="#363636"/><path d="M1.2 3.7h4.6M3.5 1.4v4.6" stroke="#b0b0b0" stroke-width="0.8"/></svg>
<svg class="abs" style="left:566px;top:117px" width="7" height="7.4" viewBox="0 0 7 7.4"><rect width="7" height="7.4" rx="1" fill="#c4c4c4"/><path d="M1.5 3.7h4" stroke="#f4f4f4" stroke-width="1"/></svg>
<div style="left:574.00px;top:120.20px;width:370.60px;height:0.80px;background:#8c8c8c;"></div>
<div style="left:943.80px;top:120.20px;width:0.80px;height:3.30px;background:#8c8c8c;"></div>
<div style="left:2.20px;top:255.35px;width:0.80px;height:178.84px;background:#8c8c8c;"></div>
<div style="left:2.20px;top:433.39px;width:3.30px;height:0.80px;background:#8c8c8c;"></div>
<svg class="abs" style="left:-2px;top:251.35px" width="8" height="8" viewBox="0 0 8 8"><rect width="8" height="8" rx="1" fill="#c0c0c0"/><path d="M2.6 4h3.8" stroke="#444" stroke-width="1"/></svg>
<div style="left:2.20px;top:458.07px;width:0.80px;height:325.53px;background:#8c8c8c;"></div>
<svg class="abs" style="left:-2px;top:454.07px" width="8" height="8" viewBox="0 0 8 8"><rect width="8" height="8" rx="1" fill="#c0c0c0"/><path d="M2.6 4h3.8" stroke="#444" stroke-width="1"/></svg>
<div style="left:1150.50px;top:631.55px;width:46.00px;height:11.59px;border:1.3px solid #1b55b8"></div>
<div style="left:1195.80px;top:642.04px;width:3.80px;height:3.80px;background:#1b55b8;"></div>
<svg class="abs" style="left:1351.5px;top:267px" width="9" height="7" viewBox="0 0 9 7"><path d="M1 5.5l3.5-3.7L8 5.5" fill="none" stroke="#222" stroke-width="1.4"/></svg>
<svg class="abs" style="left:1351.5px;top:773px" width="9" height="7" viewBox="0 0 9 7"><path d="M1 1.5l3.5 3.7L8 1.5" fill="none" stroke="#222" stroke-width="1.4"/></svg>
</div><svg class="abs" style="left:15px;top:12px;" width="23" height="32" viewBox="0 0 23 32"><path d="M2.2 0h12.6L23 8.2V29.8A2.2 2.2 0 0 1 20.8 32H2.2A2.2 2.2 0 0 1 0 29.8V2.2A2.2 2.2 0 0 1 2.2 0z" fill="#237d40"/><path d="M14.8 0L23 8.2h-6A2.2 2.2 0 0 1 14.8 6z" fill="#17622f"/><path d="M4.3 13h14.2v10.1H4.3z M5.9 14.6v2.6h4.7v-2.6z M12.2 14.6v2.6h4.7v-2.6z M5.9 18.8v2.7h4.7v-2.7z M12.2 18.8v2.7h4.7v-2.7z" fill="#c3cfc7" fill-rule="evenodd"/></svg>
<div class="abs t" style="left:58px;top:9.5px;font-size:15.6px;color:#1c1c1c;letter-spacing:0.12px;line-height:20px">05. Платежный календарь</div>
<svg class="abs" style="left:267.5px;top:10.8px;" width="16" height="16" viewBox="0 0 24 24"><path d="M22 9.24l-7.19-.62L12 2 9.19 8.63 2 9.24l5.46 4.73L5.82 21 12 17.27 18.18 21l-1.63-7.03L22 9.24zM12 15.4l-3.76 2.27 1-4.28-3.32-2.88 4.38-.38L12 6.1l1.71 4.04 4.38.38-3.32 2.88 1 4.28L12 15.4z" fill="#3a3c40" stroke="#3a3c40" stroke-width="0.7"/></svg>
<svg class="abs" style="left:294px;top:11px;" width="17" height="15" viewBox="0 0 17 15"><path d="M5.2 0.95h5.3a1.2 1.2 0 0 1 1 .6l3 5.2M9.2 13.5H4.2a1.2 1.2 0 0 1-1-.6L1.5 10a1.2 1.2 0 0 1 0-1.2L4.2 1.6" fill="none" stroke="#3a3c40" stroke-width="1.5" stroke-linecap="round" stroke-linejoin="round"/><path d="M8.3 5.6l2.3 4.4H6z" fill="none" stroke="#3a3c40" stroke-width="1.4" stroke-linejoin="round"/><path d="M13.4 8.9v5.2M10.8 11.5H16" stroke="#3a3c40" stroke-width="1.4"/></svg>
<svg class="abs" style="left:321.5px;top:11.75px;" width="14.4" height="14.4" viewBox="0 0 24 24"><path d="M19.35 10.04C18.67 6.59 15.64 4 12 4 9.11 4 6.6 5.64 5.35 8.04 2.34 8.36 0 10.91 0 14c0 3.31 2.69 6 6 6h13c2.76 0 5-2.24 5-5 0-2.64-2.05-4.78-4.65-4.96zM19 18H6c-2.21 0-4-1.79-4-4 0-2.05 1.53-3.76 3.56-3.97l1.07-.11.5-.95C8.08 7.14 9.94 6 12 6c2.62 0 4.88 1.86 5.39 4.43l.3 1.5 1.53.11c1.56.1 2.78 1.41 2.78 2.96 0 1.65-1.35 3-3 3zm-9-3.82l-2.09-2.09L6.5 13.5 10 17l6.01-6.01-1.41-1.41z" fill="#3a3c40" stroke="#3a3c40" stroke-width="0.5"/></svg>
<div class="abs t" style="left:57px;top:35px;font-size:12.6px;color:#1f1f1f;line-height:16px;letter-spacing:0.12px">Файл</div>
<div class="abs t" style="left:100px;top:35px;font-size:12.6px;color:#1f1f1f;line-height:16px;letter-spacing:0.12px">Правка</div>
<div class="abs t" style="left:156px;top:35px;font-size:12.6px;color:#1f1f1f;line-height:16px;letter-spacing:0.12px">Вид</div>
<div class="abs t" style="left:191px;top:35px;font-size:12.6px;color:#1f1f1f;line-height:16px;letter-spacing:0.12px">Вставка</div>
<div class="abs t" style="left:251px;top:35px;font-size:12.6px;color:#1f1f1f;line-height:16px;letter-spacing:0.12px">Формат</div>
<div class="abs t" style="left:309px;top:35px;font-size:12.6px;color:#1f1f1f;line-height:16px;letter-spacing:0.12px">Данные</div>
<div class="abs t" style="left:369px;top:35px;font-size:12.6px;color:#1f1f1f;line-height:16px;letter-spacing:0.12px">Инструменты</div>
<div class="abs t" style="left:462px;top:35px;font-size:12.6px;color:#1f1f1f;line-height:16px;letter-spacing:0.12px">Расширения</div>
<div class="abs t" style="left:549px;top:35px;font-size:12.6px;color:#1f1f1f;line-height:16px;letter-spacing:0.12px">Справка</div>
<svg class="abs" style="left:1147px;top:19px;" width="19" height="17" viewBox="0 0 19 17"><path d="M1 1h16.5v11.8H1z" fill="none" stroke="#43464c" stroke-width="2"/><path d="M3.4 4.3h11.8M3.4 6.9h11.8M3.4 9.5h11.8" stroke="#43464c" stroke-width="1.3"/><path d="M13.2 12.8h4.3V17z" fill="#43464c"/></svg>
<div class="abs" style="left:1182.5px;top:12px;width:167.3px;height:32px;border-radius:4px;background:#125c29"></div>
<svg class="abs" style="left:1192.5px;top:20px;" width="14" height="16" viewBox="0 0 14 16"><path d="M1 1h6.2v9.4H1z M8.2 4.3h4.6v6.1H8.2z" fill="#c9d3cc"/><path d="M2.4 2.6h1.2v1.2H2.4zM4.6 2.6h1.2v1.2H4.6zM2.4 4.9h1.2v1.2H2.4zM4.6 4.9h1.2v1.2H4.6zM2.4 7.2h1.2v1.2H2.4zM4.6 7.2h1.2v1.2H4.6zM9.3 5.6h1v1h-1zM10.9 5.6h1v1h-1zM9.3 7.6h1v1h-1zM10.9 7.6h1v1h-1z" fill="#125c29"/><path d="M4.3 11.6h2.2M7.8 11.6H10a1.7 1.7 0 0 1 0 3.4H7.8M6.5 15H4.3a1.7 1.7 0 0 1 0-3.4M5.3 13.3h3.7" fill="none" stroke="#c9d3cc" stroke-width="1"/></svg>
<div class="abs t" style="left:1212px;top:19.5px;font-size:13px;color:#cdd3ce;line-height:17px;letter-spacing:0.34px;-webkit-text-stroke:0.3px #cdd3ce">Настройки Доступа</div>
<div class="abs" style="left:0;top:56.5px;width:1360px;height:1px;background:#a6a6a6"></div>
<div class="abs" style="left:0;top:91px;width:1360px;height:1px;background:#a6a6a6"></div>
<svg class="abs" style="left:24.5px;top:65.5px;" width="17" height="17" viewBox="0 0 24 24"><path d="M12.5 8c-2.65 0-5.05.99-6.9 2.6L2 7v9h9l-3.62-3.62c1.39-1.16 3.16-1.88 5.12-1.88 3.54 0 6.55 2.31 7.6 5.5l2.37-.78C21.08 11.03 17.15 8 12.5 8z" fill="#3a3a3a"/></svg>
<svg class="abs" style="left:49.0px;top:65.5px;" width="17" height="17" viewBox="0 0 24 24"><path d="M18.4 10.6C16.55 8.99 14.15 8 11.5 8c-4.65 0-8.58 3.03-9.96 7.22L3.9 16c1.05-3.19 4.05-5.5 7.6-5.5 1.95 0 3.73.72 5.12 1.88L13 16h9V7l-3.6 3.6z" fill="#3a3a3a"/></svg>
<svg class="abs" style="left:73.0px;top:65.5px;" width="17" height="17" viewBox="0 0 24 24"><path d="M19 8H5c-1.66 0-3 1.34-3 3v6h4v4h12v-4h4v-6c0-1.66-1.34-3-3-3zm-3 11H8v-5h8v5zm3-7c-.55 0-1-.45-1-1s.45-1 1-1 1 .45 1 1-.45 1-1 1zm-1-9H6v4h12V3z" fill="#3a3a3a"/></svg>
<svg class="abs" style="left:98.25px;top:65.95px;" width="15.5" height="15.5" viewBox="0 0 24 24"><path d="M18 4V3c0-.55-.45-1-1-1H5c-.55 0-1 .45-1 1v4c0 .55.45 1 1 1h12c.55 0 1-.45 1-1V6h1v4H9v11c0 .55.45 1 1 1h2c.55 0 1-.45 1-1v-9h8V4h-3z" fill="#3a3a3a"/></svg>
<div class="abs" style="left:121.0px;top:65.5px;width:1px;height:17.0px;background:#9d9d9d"></div>
<div class="abs t" style="left:134px;top:66.8px;font-size:11.2px;color:#2c2c2c;line-height:14px;-webkit-text-stroke:0.25px #2c2c2c">66%</div>
<svg class="abs" style="left:172.8px;top:72.8px;" width="6.4" height="3.4" viewBox="0 0 10 5"><path d="M0 0h10L5 5z" fill="#3a3a3a"/></svg>
<div class="abs" style="left:185.5px;top:65.5px;width:1px;height:17.0px;background:#9d9d9d"></div>
<div class="abs t" style="left:197px;top:66.3px;font-size:12px;color:#2c2c2c;line-height:14px;-webkit-text-stroke:0.25px #2c2c2c">р.</div>
<div class="abs t" style="left:222px;top:66.8px;font-size:11.2px;color:#2c2c2c;line-height:14px;-webkit-text-stroke:0.25px #2c2c2c">%</div>
<div class="abs t" style="left:243px;top:66.5px;font-size:11.2px;color:#2c2c2c;line-height:14px;-webkit-text-stroke:0.25px #2c2c2c">.0</div>
<svg class="abs" style="left:250px;top:77.5px;" width="7" height="5" viewBox="0 0 7 5"><path d="M7 2.5H1.6M3 0.6L1 2.5l2 1.9" fill="none" stroke="#2c2c2c" stroke-width="1"/></svg>
<div class="abs t" style="left:266px;top:66.5px;font-size:11.2px;color:#2c2c2c;line-height:14px;-webkit-text-stroke:0.25px #2c2c2c">.00</div>
<svg class="abs" style="left:276px;top:77.5px;" width="7" height="5" viewBox="0 0 7 5"><path d="M0 2.5h5.4M4 0.6l2 1.9-2 1.9" fill="none" stroke="#2c2c2c" stroke-width="1"/></svg>
<div class="abs t" style="left:289px;top:66.8px;font-size:11.2px;color:#2c2c2c;line-height:14px;-webkit-text-stroke:0.25px #2c2c2c">123</div>
<svg class="abs" style="left:309.3px;top:72.8px;" width="6.4" height="3.4" viewBox="0 0 10 5"><path d="M0 0h10L5 5z" fill="#3a3a3a"/></svg>
<div class="abs" style="left:324.0px;top:65.5px;width:1px;height:17.0px;background:#9d9d9d"></div>
<div class="abs t" style="left:338px;top:66.8px;font-size:11.4px;color:#2c2c2c;line-height:14px;-webkit-text-stroke:0.25px #2c2c2c">Arial</div>
<svg class="abs" style="left:409.3px;top:72.8px;" width="6.4" height="3.4" viewBox="0 0 10 5"><path d="M0 0h10L5 5z" fill="#3a3a3a"/></svg>
<div class="abs" style="left:424.0px;top:65.5px;width:1px;height:17.0px;background:#9d9d9d"></div>
<div class="abs t" style="left:437px;top:66.8px;font-size:11.4px;color:#2c2c2c;line-height:14px;-webkit-text-stroke:0.25px #2c2c2c">9</div>
<svg class="abs" style="left:474.8px;top:72.8px;" width="6.4" height="3.4" viewBox="0 0 10 5"><path d="M0 0h10L5 5z" fill="#3a3a3a"/></svg>
<div class="abs" style="left:488.0px;top:65.5px;width:1px;height:17.0px;background:#9d9d9d"></div>
<svg class="abs" style="left:495.25px;top:65.45px;" width="17.5" height="17.5" viewBox="0 0 24 24"><path d="M15.6 10.79c.97-.67 1.65-1.77 1.65-2.79 0-2.26-1.75-4-4-4H7v14h7.04c2.09 0 3.71-1.7 3.71-3.79 0-1.52-.86-2.82-2.15-3.42zM10 6.5h3c.83 0 1.5.67 1.5 1.5s-.67 1.5-1.5 1.5h-3v-3zm3.5 9H10v-3h3.5c.83 0 1.5.67 1.5 1.5s-.67 1.5-1.5 1.5z" fill="#3a3a3a"/></svg>
<svg class="abs" style="left:520.25px;top:65.95px;" width="16.5" height="16.5" viewBox="0 0 24 24"><path d="M10 4v3h2.21l-3.42 8H6v3h8v-3h-2.21l3.42-8H18V4z" fill="#3a3a3a"/></svg>
<div class="abs t" style="left:548px;top:64.2px;font-size:14.5px;color:#3a3a3a;line-height:18px;width:12px;text-align:center">S</div>
<div class="abs" style="left:546.5px;top:74px;width:13.5px;height:1.3px;background:#3a3a3a"></div>
<div class="abs t" style="left:571px;top:62.6px;font-size:14.5px;color:#3a3a3a;line-height:18px;width:14px;text-align:center">A</div>
<div class="abs" style="left:569px;top:81px;width:19px;height:3px;background:#000"></div>
<div class="abs" style="left:594.0px;top:65.5px;width:1px;height:17.0px;background:#9d9d9d"></div>
<svg class="abs" style="left:604.0px;top:64.8px;" width="15" height="15" viewBox="0 0 24 24"><path d="M16.56 8.94L7.62 0 6.21 1.41l2.38 2.38-5.15 5.15c-.59.59-.59 1.54 0 2.12l5.5 5.5c.29.29.68.44 1.06.44s.77-.15 1.06-.44l5.5-5.5c.59-.58.59-1.53 0-2.12zM5.21 10L10 5.21 14.79 10H5.21zM19 11.5s-2 2.17-2 3.5c0 1.1.9 2 2 2s2-.9 2-2c0-1.33-2-3.5-2-3.5z" fill="#3a3a3a"/></svg>
<div class="abs" style="left:602.5px;top:81px;width:18.5px;height:3px;background:#a2a2a2"></div>
<svg class="abs" style="left:628.75px;top:65.25px;" width="17.5" height="17.5" viewBox="0 0 24 24"><path d="M3 3v18h18V3H3zm8 16H5v-6h6v6zm0-8H5V5h6v6zm8 8h-6v-6h6v6zm0-8h-6V5h6v6z" fill="#3a3a3a"/></svg>
<svg class="abs" style="left:656px;top:66.5px;" width="15" height="15" viewBox="0 0 15 15"><path d="M1 4.5V1h3M6 1h3M11 1h3v3.5M1 10.5V14h3M6 14h3M11 14h3v-3.5" fill="none" stroke="#8e8e8e" stroke-width="1.4"/><path d="M1 7.5h4M3.6 5.8l1.6 1.7-1.6 1.7M14 7.5h-4M11.4 5.8L9.8 7.5l1.6 1.7" fill="none" stroke="#8e8e8e" stroke-width="1.2"/></svg>
<svg class="abs" style="left:679.8px;top:72.8px;" width="6.4" height="3.4" viewBox="0 0 10 5"><path d="M0 0h10L5 5z" fill="#8e8e8e"/></svg>
<div class="abs" style="left:694.0px;top:65.5px;width:1px;height:17.0px;background:#9d9d9d"></div>
<svg class="abs" style="left:702px;top:67.5px;" width="13.5" height="13" viewBox="0 0 13.5 13"><path d="M0 1h13.5M2.2 4.7h9.1M0 8.4h13.5M2.2 12.1h9.1" stroke="#3a3a3a" stroke-width="1.4"/></svg>
<svg class="abs" style="left:720.8px;top:72.8px;" width="6.4" height="3.4" viewBox="0 0 10 5"><path d="M0 0h10L5 5z" fill="#3a3a3a"/></svg>
<svg class="abs" style="left:734.5px;top:65.5px;" width="17" height="17" viewBox="0 0 24 24"><path d="M16 13h-3V3h-2v10H8l4 4 4-4zM4 19v2h16v-2H4z" fill="#3a3a3a"/></svg>
<svg class="abs" style="left:754.8px;top:72.8px;" width="6.4" height="3.4" viewBox="0 0 10 5"><path d="M0 0h10L5 5z" fill="#3a3a3a"/></svg>
<svg class="abs" style="left:770px;top:66.5px;" width="15" height="15" viewBox="0 0 15 15"><path d="M1.3 1v13M13.7 1v13" stroke="#3a3a3a" stroke-width="1.5"/><path d="M4 5.2h4.6a2.3 2.3 0 0 1 0 4.6H5.6M7.4 7.6L5.2 9.8l2.2 2.2" fill="none" stroke="#3a3a3a" stroke-width="1.4"/></svg>
<svg class="abs" style="left:788.8px;top:72.8px;" width="6.4" height="3.4" viewBox="0 0 10 5"><path d="M0 0h10L5 5z" fill="#3a3a3a"/></svg>
<svg class="abs" style="left:803.5px;top:66px;" width="16.5" height="16" viewBox="0 0 16.5 16"><path d="M1.5 2.2l8.2 3.3-4.6 4.4z" fill="none" stroke="#3a3a3a" stroke-width="1.4" stroke-linejoin="round"/><path d="M6.5 13.5L14.3 5M14.6 8.6V4.6h-4" fill="none" stroke="#3a3a3a" stroke-width="1.4"/></svg>
<svg class="abs" style="left:822.8px;top:72.8px;" width="6.4" height="3.4" viewBox="0 0 10 5"><path d="M0 0h10L5 5z" fill="#3a3a3a"/></svg>
<div class="abs" style="left:837.0px;top:65.5px;width:1px;height:17.0px;background:#9d9d9d"></div>
<svg class="abs" style="left:844.5px;top:65.0px;" width="18" height="18" viewBox="0 0 24 24"><path d="M3.9 12c0-1.71 1.39-3.1 3.1-3.1h4V7H7c-2.76 0-5 2.24-5 5s2.24 5 5 5h4v-1.9H7c-1.71 0-3.1-1.39-3.1-3.1zM8 13h8v-2H8v2zm9-6h-4v1.9h4c1.71 0 3.1 1.39 3.1 3.1s-1.39 3.1-3.1 3.1h-4V17h4c2.76 0 5-2.24 5-5s-2.24-5-5-5z" fill="#8e8e8e"/></svg>
<svg class="abs" style="left:869.75px;top:66.75px;" width="15.5" height="15.5" viewBox="0 0 24 24"><path d="M20 2H4c-1.1 0-2 .9-2 2v18l4-4h14c1.1 0 2-.9 2-2V4c0-1.1-.9-2-2-2zm0 14H5.17L4 17.17V4h16v12zM11 5h2v4h4v2h-4v4h-2v-4H7V9h4z" fill="#3a3a3a"/></svg>
<svg class="abs" style="left:892.75px;top:65.25px;" width="17.5" height="17.5" viewBox="0 0 24 24"><path d="M9 17H7v-7h2v7zm4 0h-2V7h2v10zm4 0h-2v-4h2v4zm2 2H5V5h14v14zm0-16H5c-1.1 0-2 .9-2 2v14c0 1.1.9 2 2 2h14c1.1 0 2-.9 2-2V5c0-1.1-.9-2-2-2z" fill="#3a3a3a"/></svg>
<svg class="abs" style="left:918.75px;top:66.05px;" width="16.5" height="16.5" viewBox="0 0 24 24"><path d="M7 6h10l-5.01 6.3L7 6zm-2.75-.39C6.27 8.2 10 13 10 13v6c0 .55.45 1 1 1h2c.55 0 1-.45 1-1v-6s3.72-4.8 5.74-7.39c.51-.66.04-1.61-.79-1.61H5.04c-.83 0-1.3.95-.79 1.61z" fill="#3a3a3a"/></svg>
<svg class="abs" style="left:942.8px;top:72.8px;" width="6.4" height="3.4" viewBox="0 0 10 5"><path d="M0 0h10L5 5z" fill="#3a3a3a"/></svg>
<svg class="abs" style="left:957.0px;top:66.0px;" width="16" height="16" viewBox="0 0 24 24"><path d="M18 4H6v2l6.5 6L6 18v2h12v-3h-7l5-5-5-5h7z" fill="#3a3a3a"/></svg>
<svg class="abs" style="left:976.3px;top:72.8px;" width="6.4" height="3.4" viewBox="0 0 10 5"><path d="M0 0h10L5 5z" fill="#3a3a3a"/></svg>
<div class="abs" style="left:991.0px;top:65.5px;width:1px;height:17.0px;background:#9d9d9d"></div>
<div class="abs t" style="left:1001px;top:65.3px;font-size:14px;color:#111;font-weight:bold;line-height:17px">P</div>
<div class="abs t" style="left:1009.6px;top:70px;font-size:9px;color:#111;font-weight:bold;line-height:11px">Y</div>
<svg class="abs" style="left:1023.8px;top:72.8px;" width="6.4" height="3.4" viewBox="0 0 10 5"><path d="M0 0h10L5 5z" fill="#3a3a3a"/></svg>
<div class="abs" style="left:0;top:112px;width:1360px;height:1px;background:#8f8f8f"></div>
<div class="abs t" style="left:2px;top:94.9px;font-size:11.8px;color:#1a1a1a;line-height:14px;letter-spacing:-0.75px">CE38</div>
<svg class="abs" style="left:72.8px;top:100.1px;" width="6.4" height="3.4" viewBox="0 0 10 5"><path d="M0 0h10L5 5z" fill="#3a3a3a"/></svg>
<div class="abs" style="left:85.5px;top:93px;width:1px;height:17px;background:#a2a2a2"></div>
<div class="abs t" style="left:97px;top:90.5px;font-size:17.5px;color:#8e8e8e;font-family:'Liberation Serif',serif;line-height:18px;letter-spacing:0.3px"><i>fx</i></div>
<div class="abs" style="left:123.5px;top:95px;width:1px;height:13px;background:#9d9d9d"></div>
<div class="abs t" style="left:133px;top:95.4px;font-family:'Liberation Mono',monospace;font-size:12.2px;line-height:15px;transform:scaleX(0.847);transform-origin:0 0"><span style="color:#222">=</span><span style="color:#c98a3d">BW38</span><span style="color:#222">+</span><span style="color:#6d3f8c">BY38</span><span style="color:#222">+</span><span style="color:#3f97a8">CA38</span><span style="color:#222">+</span><span style="color:#9b2f52">CC38</span><span style="color:#222">+</span><span style="color:#4c7cc6">BU38</span></div>
<div class="abs" style="left:0;top:783.6px;width:1349.6px;height:14.4px;background:#a9a9a9"></div>
<div class="abs" style="left:0;top:783.6px;width:205px;height:14.4px;background:#b0b0b0"></div><div class="abs" style="left:205px;top:783.6px;width:3px;height:14.4px;background:#9c9fa7"></div>
<div class="abs" style="left:1349.6px;top:784px;width:9.4px;height:14px;background:#b3b3b3;border-left:1px solid #a0a0a0;border-top:1px solid #a0a0a0"></div>
<svg class="abs" style="left:210.5px;top:786px;" width="8" height="9" viewBox="0 0 8 9"><path d="M6.2 1L2 4.5 6.2 8" fill="none" stroke="#222" stroke-width="1.6"/></svg>
<div class="abs" style="left:0;top:798px;width:1360px;height:36px;background:#aaaaaa"></div>
<div class="abs" style="left:0;top:797.6px;width:1360px;height:1px;background:#a0a0a0"></div>
<svg class="abs" style="left:36px;top:809px;" width="12" height="12" viewBox="0 0 12 12"><path d="M6 1v10M1 6h10" stroke="#333" stroke-width="1.7"/></svg>
<svg class="abs" style="left:63px;top:809.5px;" width="13" height="11" viewBox="0 0 13 11"><path d="M0 1h13M0 4h13M0 7h13M0 10h13" stroke="#333" stroke-width="1.4"/></svg>
<div class="abs" style="left:95.5px;top:798px;width:112px;height:36px;background:#b9b9b9"></div>
<div class="abs" style="left:95.5px;top:830px;width:112px;height:4px;background:#0000b3"></div>
<div class="abs" style="left:207.5px;top:830px;width:215px;height:4px;background:#b36b00"></div>
<div class="abs" style="left:422.5px;top:830px;width:241.5px;height:4px;background:#00b300"></div>
<div class="abs t" style="left:110.5px;top:806.5px;font-size:13px;color:#1a6e33;line-height:17px;letter-spacing:0.18px;-webkit-text-stroke:0.45px #1a6e33">Календарь</div>
<svg class="abs" style="left:186.8px;top:813.8px;" width="6.4" height="3.4" viewBox="0 0 10 5"><path d="M0 0h10L5 5z" fill="#1a6e33"/></svg>
<div class="abs t" style="left:222px;top:806.5px;font-size:13px;color:#454545;line-height:17px;letter-spacing:0.3px;-webkit-text-stroke:0.3px #454545">Плановый Реестр выбытий</div>
<svg class="abs" style="left:400.8px;top:813.8px;" width="6.4" height="3.4" viewBox="0 0 10 5"><path d="M0 0h10L5 5z" fill="#5a5a5a"/></svg>
<div class="abs t" style="left:437px;top:806.5px;font-size:13px;color:#454545;line-height:17px;letter-spacing:0.3px;-webkit-text-stroke:0.3px #454545">Плановый Реестр поступлений</div>
<svg class="abs" style="left:642.3px;top:813.8px;" width="6.4" height="3.4" viewBox="0 0 10 5"><path d="M0 0h10L5 5z" fill="#5a5a5a"/></svg>
<div class="abs t" style="left:678px;top:806.5px;font-size:13px;color:#454545;line-height:17px;letter-spacing:0.3px;-webkit-text-stroke:0.3px #454545">Регламент ПК</div>
<svg class="abs" style="left:773.8px;top:813.8px;" width="6.4" height="3.4" viewBox="0 0 10 5"><path d="M0 0h10L5 5z" fill="#5a5a5a"/></svg>
<div class="abs t" style="left:809px;top:806.5px;font-size:13px;color:#454545;line-height:17px;letter-spacing:0.3px;-webkit-text-stroke:0.3px #454545">Импорт ДДС</div>
<svg class="abs" style="left:897.3px;top:813.8px;" width="6.4" height="3.4" viewBox="0 0 10 5"><path d="M0 0h10L5 5z" fill="#5a5a5a"/></svg>
<div class="abs t" style="left:933px;top:806.5px;font-size:13px;color:#454545;line-height:17px;letter-spacing:0.3px;-webkit-text-stroke:0.3px #454545">Диапазон недель</div>
<svg class="abs" style="left:1054.8px;top:813.8px;" width="6.4" height="3.4" viewBox="0 0 10 5"><path d="M0 0h10L5 5z" fill="#5a5a5a"/></svg>
<div class="abs t" style="left:1087px;top:806.5px;font-size:13px;color:#4f4f4f;line-height:17px">С</div>
<div class="abs" style="left:1092px;top:798.5px;width:230px;height:35.5px;background:linear-gradient(90deg,rgba(150,150,150,0),rgba(156,156,156,0.9) 5px,#aaaaaa 8px)"></div>
<svg class="abs" style="left:1110px;top:809.5px;" width="6" height="9" viewBox="0 0 6 9"><path d="M5.5 0v9L0.5 4.5z" fill="#929292"/></svg>
<svg class="abs" style="left:1136.5px;top:809.5px;" width="6" height="9" viewBox="0 0 6 9"><path d="M0.5 0v9l5-4.5z" fill="#2e2e2e"/></svg>
<div class="abs" style="left:1322px;top:798.5px;width:37px;height:35.5px;background:#b2b2b2;border-left:1px solid #a2a2a2"></div>
<svg class="abs" style="left:1332.7px;top:807.5px;" width="16.5" height="17.5" viewBox="0 0 19 20"><path d="M2 0h15a2 2 0 0 1 2 2v13a2 2 0 0 1-2 2h-4.5L9.5 20l-3-3H2a2 2 0 0 1-2-2V2a2 2 0 0 1 2-2z" fill="#167a44"/><path d="M9.5 3.5l1.6 3.4 3.4 1.6-3.4 1.6-1.6 3.4-1.6-3.4-3.4-1.6 3.4-1.6z" fill="#c8d6cc"/></svg></body></html>
